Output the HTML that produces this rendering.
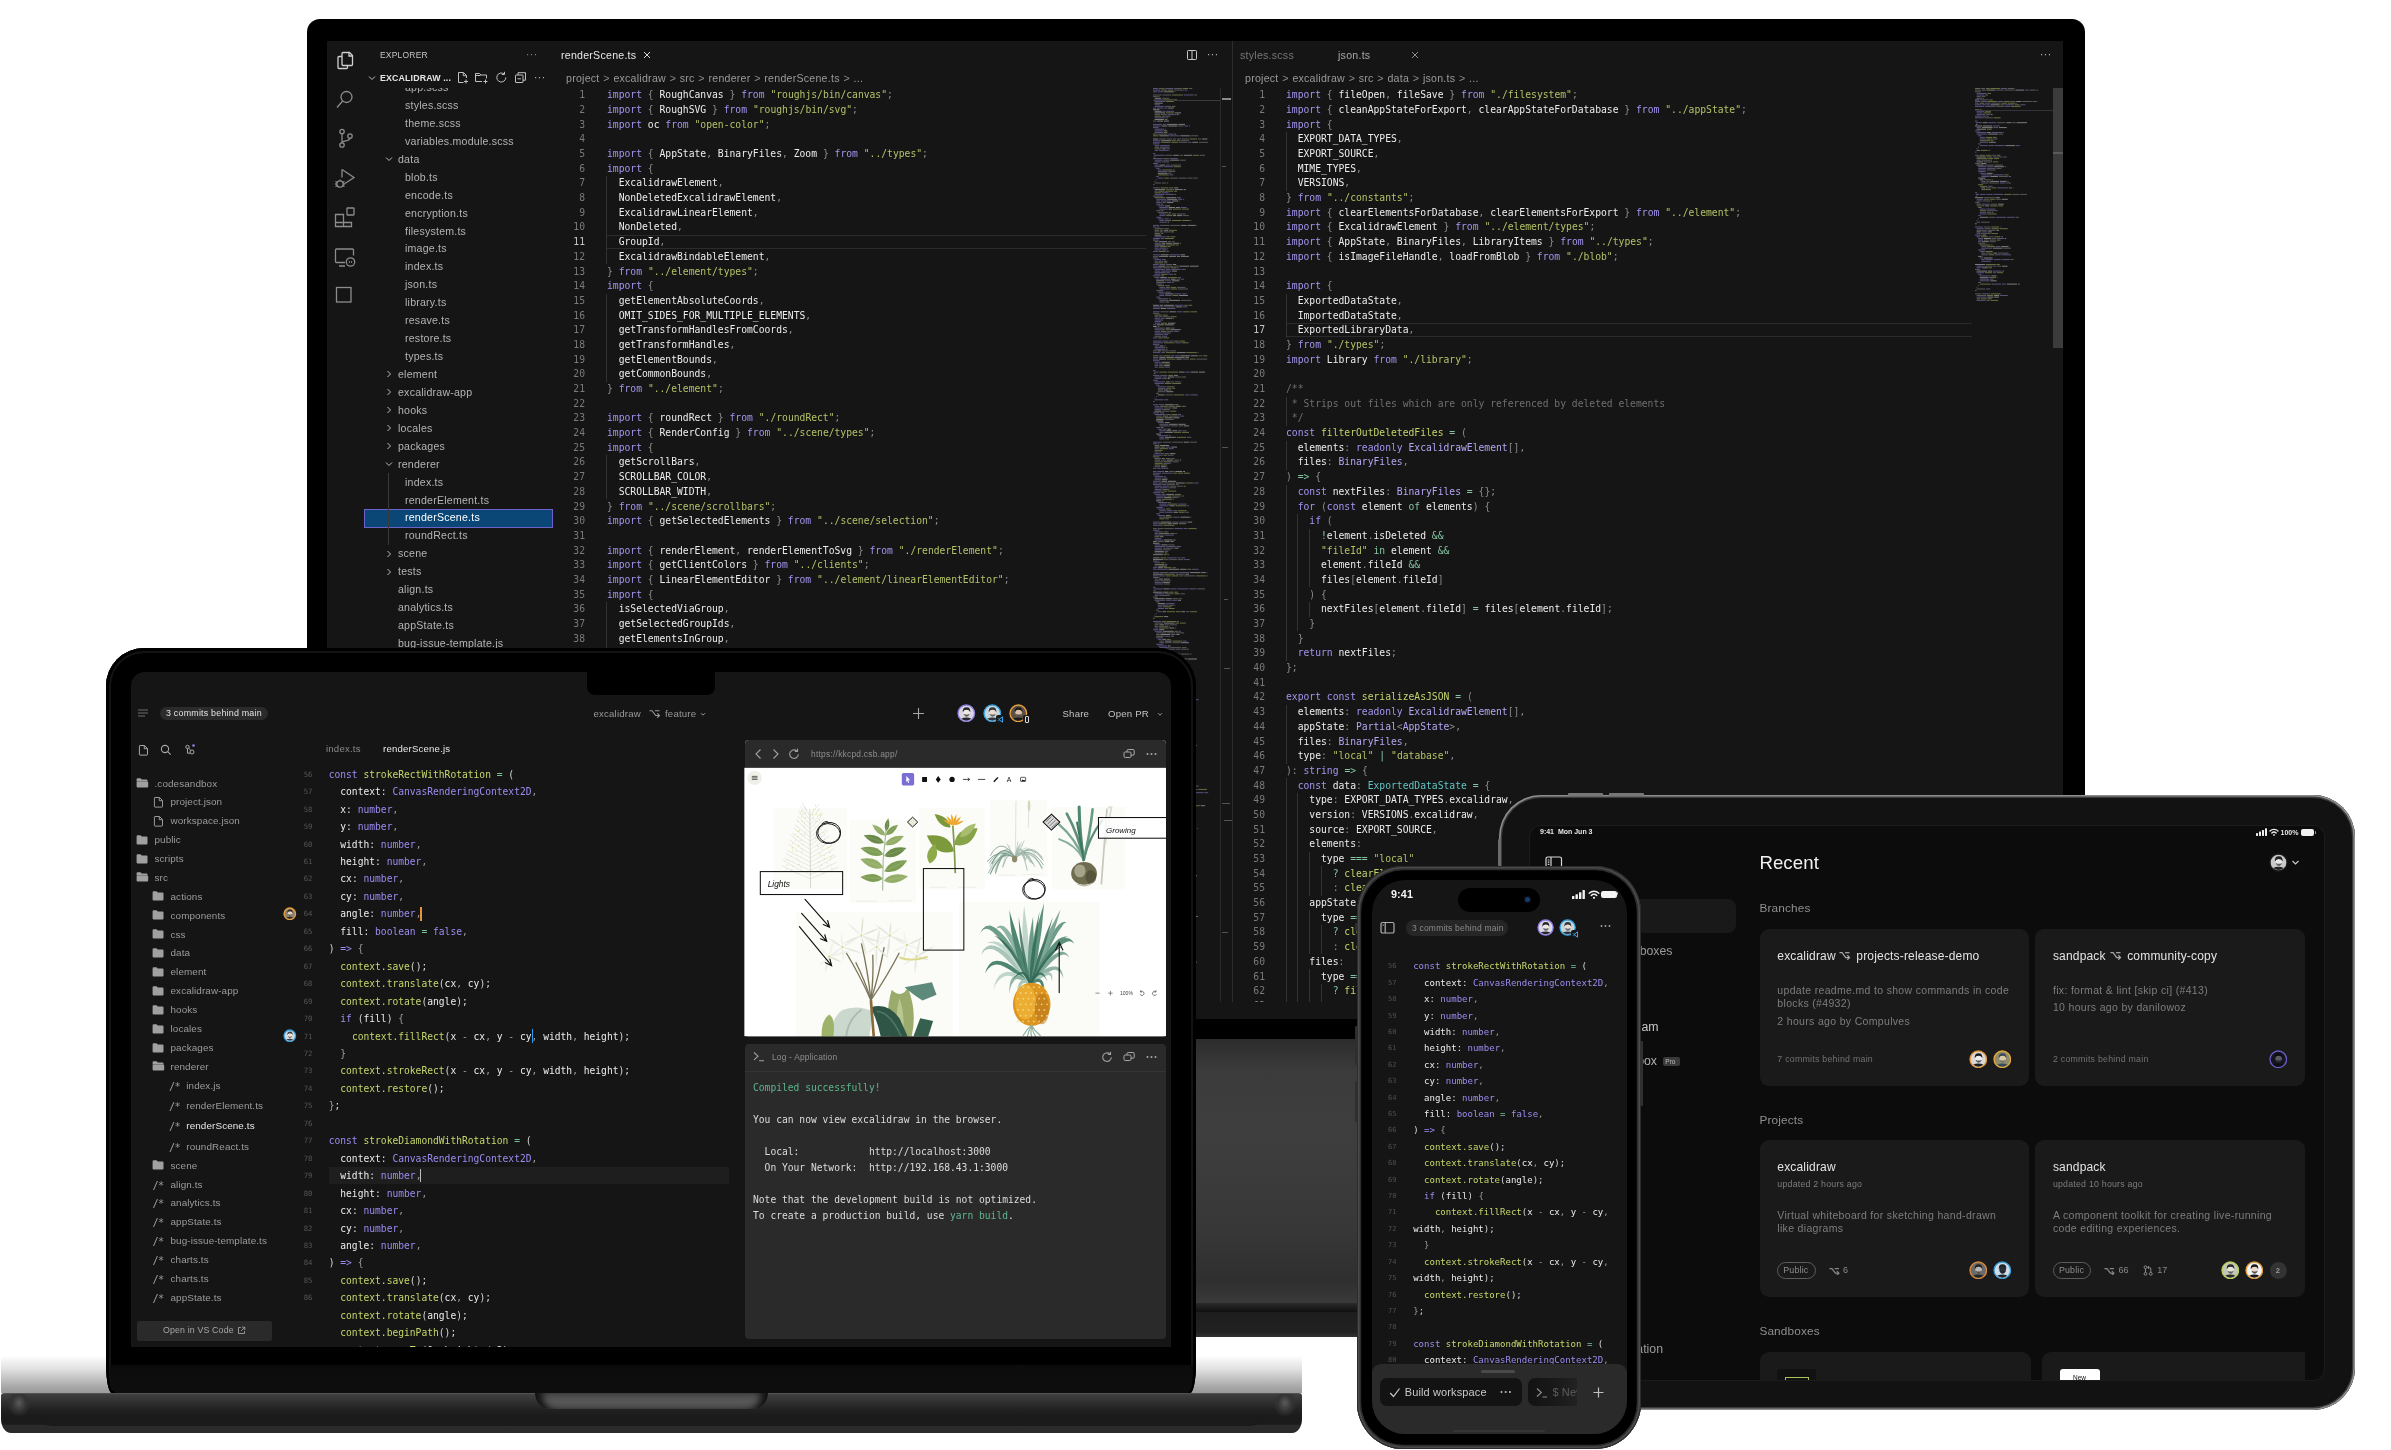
<!DOCTYPE html>
<html lang="en"><head><meta charset="utf-8"><title>CodeSandbox devices</title><style>
html,body{margin:0;padding:0;background:#fff;}
body{width:2391px;height:1450px;overflow:hidden;position:relative;font-family:"Liberation Sans",sans-serif;}
div,svg,pre{position:absolute;box-sizing:border-box;margin:0;}
.t{white-space:pre;font-family:"Liberation Sans",sans-serif;}
.m{font-family:"DejaVu Sans Mono","Liberation Mono",monospace;white-space:pre;}
pre{font-family:"DejaVu Sans Mono","Liberation Mono",monospace;}
i{font-style:normal;}
/* vscode theme */
#mscr .k{color:#a594ee;} #mscr .s{color:#b3c267;} #mscr .p{color:#8b8b8b;} #mscr .o{color:#86c5a4;}
#mscr .tp{color:#b6a6f3;} #mscr .f{color:#c3d46c;} #mscr .c{color:#6f6f6f;} #mscr .y{color:#5fc4c4;}
/* codesandbox theme */
.csb .k{color:#9d8cf0;} .csb .f{color:#c5d86a;} .csb .p{color:#9a9a9a;} .csb .o{color:#78c29a;} .csb .y{color:#9d8cf0;} .csb .s{color:#c5d86a;} .csb .q{color:#d8d8d8;}
</style></head><body><div id="stage" style="left:0;top:0;width:2391px;height:1450px;will-change:transform"><div style="left:307px;top:19px;width:1778px;height:1020px;background:#000;border-radius:13px 13px 0 0;"></div><div style="left:1000px;top:1039px;width:400px;height:264px;background:linear-gradient(180deg,#2c2c2c 0%,#3b3b3b 12%,#3e3e3e 35%,#383838 70%,#2f2f2f 92%,#3a3a3a 100%);"></div><div style="left:1000px;top:1303px;width:400px;height:9px;background:linear-gradient(180deg,#2a2a2a,#101010);"></div><div style="left:1000px;top:1312px;width:400px;height:25px;background:linear-gradient(180deg,#1d1d1d,#222 80%,#333 100%);"></div><div id="mscr" style="left:327px;top:41px;width:1736px;height:978px;background:#151515;overflow:hidden;border-radius:1px"><svg style="left:7px;top:8px;" width="22" height="22" viewBox="0 0 22 22"><g fill="none" stroke="#d0d0d0" stroke-width="1.3"><path d="M9 3.5h6.5l3 3V15.5a1 1 0 0 1-1 1H9a1 1 0 0 1-1-1V4.5a1 1 0 0 1 1-1z"/><path d="M15 3.8v3.2h3.3"/><path d="M8 7.5H5a1 1 0 0 0-1 1v10a1 1 0 0 0 1 1h7.5a1 1 0 0 0 1-1v-2"/></g></svg><svg style="left:7px;top:47px;" width="22" height="22" viewBox="0 0 22 22"><g fill="none" stroke="#8c8c8c" stroke-width="1.3"><circle cx="12.5" cy="9" r="5.5"/><path d="M8.5 13.2L3 19.5"/></g></svg><svg style="left:7px;top:86px;" width="22" height="22" viewBox="0 0 22 22"><g fill="none" stroke="#8c8c8c" stroke-width="1.3"><circle cx="8" cy="4.5" r="2.2"/><circle cx="8" cy="18" r="2.2"/><circle cx="16" cy="9" r="2.2"/><path d="M8 6.7v9.1M16 11.2c0 3-8 2.5-8 4.6"/></g></svg><svg style="left:6px;top:125px;" width="24" height="24" viewBox="0 0 24 24"><g fill="none" stroke="#8c8c8c" stroke-width="1.3"><path d="M9 3.5l12 8-9 6"/><path d="M9 3.5v8"/><circle cx="7" cy="18" r="3.2"/><path d="M2.5 15.5l2 1M2.5 20.5l2-1M11.5 15.5l-2 1M11.5 20.5l-2-1M2 18h2M10 18h2M7 13.5v1.3"/></g></svg><svg style="left:6px;top:164px;" width="24" height="24" viewBox="0 0 24 24"><g fill="none" stroke="#8c8c8c" stroke-width="1.3"><path d="M2.5 9.5h8v8h-8zM10.5 17.5h8v4h-16v-4M10.5 9.5v12M2.5 13.5v8"/><rect x="14" y="3" width="7" height="7" rx=".5"/></g></svg><svg style="left:6px;top:204px;" width="24" height="24" viewBox="0 0 24 24"><g fill="none" stroke="#8c8c8c" stroke-width="1.3"><path d="M12 17.5H3.500a1 1 0 0 1-1-1V5a1 1 0 0 1 1-1h16a1 1 0 0 1 1 1v5.500M6 21h6"/><circle cx="17.5" cy="17" r="4.2"/><path d="M15.800 16l1.200 1-1.200 1M19.200 16l-1.200 1 1.200 1" stroke-width=".9"/></g></svg><svg style="left:7px;top:244px;" width="20" height="20" viewBox="0 0 20 20"><rect x="2.5" y="2.500" width="14.500" height="14.500" fill="none" stroke="#8c8c8c" stroke-width="1.3"/></svg><div class="t" style="top:9.18px;font-size:8.5px;line-height:11.05px;color:#c4c4c4;left:53px;letter-spacing:0.2px;">EXPLORER</div><div class="t" style="top:7.0px;font-size:10px;line-height:13.0px;color:#8c8c8c;left:199px;letter-spacing:0.5px;">···</div><svg style="left:41px;top:33px;" width="8" height="8" viewBox="0 0 8 8"><path d="M1 2.5 L4 5.5 L7 2.5" fill="none" stroke="#bdbdbd" stroke-width="1"/></svg><div class="t" style="top:31.78px;font-size:8.8px;line-height:11.44px;color:#e6e6e6;left:53px;font-weight:700;letter-spacing:0.15px;">EXCALIDRAW ...</div><svg style="left:129px;top:30px;" width="13" height="13" viewBox="0 0 13 13"><g fill="none" stroke="#c0c0c0" stroke-width="1"><path d="M7.500 11.500H2.500V1.500h5l3 3v2.500M7.300 1.700v3h3M10 8.500v4M8 10.500h4"/></g></svg><svg style="left:147px;top:30px;" width="15" height="13" viewBox="0 0 15 13"><g fill="none" stroke="#c0c0c0" stroke-width="1"><path d="M8 10.500H1.500V2.500h4l1.500 1.500h5.500v3.500M1.500 4.500h5M11.500 8.500v4M9.500 10.500h4"/></g></svg><svg style="left:168px;top:30px;" width="13" height="13" viewBox="0 0 13 13"><g fill="none" stroke="#c0c0c0" stroke-width="1"><path d="M10.800 6.500a4.500 4.500 0 1 1-1.800-3.600"/><path d="M9.500 .8v2.700H6.800"/></g></svg><svg style="left:187px;top:30px;" width="13" height="13" viewBox="0 0 13 13"><g fill="none" stroke="#c0c0c0" stroke-width="1"><rect x="1.500" y="4" width="7.500" height="7.500" rx=".5"/><path d="M4 4V1.700h7.500v7.500H9M3.500 7.800h3.500"/></g></svg><div class="t" style="top:30.0px;font-size:10px;line-height:13.0px;color:#bdbdbd;left:207px;letter-spacing:0.5px;">···</div><div style="left:0;top:47px;width:230px;height:940px;overflow:hidden"><div style="left:0;top:-47px;width:230px;height:1000px"><div class="t" style="top:40.11px;font-size:10.6px;line-height:13.78px;color:#b4b4b4;left:78px;letter-spacing:0.22px;">app.scss</div><div class="t" style="top:58.04px;font-size:10.6px;line-height:13.78px;color:#b4b4b4;left:78px;letter-spacing:0.22px;">styles.scss</div><div class="t" style="top:75.97px;font-size:10.6px;line-height:13.78px;color:#b4b4b4;left:78px;letter-spacing:0.22px;">theme.scss</div><div class="t" style="top:93.9px;font-size:10.6px;line-height:13.78px;color:#b4b4b4;left:78px;letter-spacing:0.22px;">variables.module.scss</div><div class="t" style="top:111.83px;font-size:10.6px;line-height:13.78px;color:#b4b4b4;left:71px;letter-spacing:0.22px;">data</div><svg style="left:58px;top:114.22px;" width="8" height="8" viewBox="0 0 8 8"><path d="M1 2.5 L4 5.5 L7 2.5" fill="none" stroke="#bdbdbd" stroke-width="1"/></svg><div class="t" style="top:129.76px;font-size:10.6px;line-height:13.78px;color:#b4b4b4;left:78px;letter-spacing:0.22px;">blob.ts</div><div class="t" style="top:147.69px;font-size:10.6px;line-height:13.78px;color:#b4b4b4;left:78px;letter-spacing:0.22px;">encode.ts</div><div class="t" style="top:165.62px;font-size:10.6px;line-height:13.78px;color:#b4b4b4;left:78px;letter-spacing:0.22px;">encryption.ts</div><div class="t" style="top:183.55px;font-size:10.6px;line-height:13.78px;color:#b4b4b4;left:78px;letter-spacing:0.22px;">filesystem.ts</div><div class="t" style="top:201.48px;font-size:10.6px;line-height:13.78px;color:#b4b4b4;left:78px;letter-spacing:0.22px;">image.ts</div><div class="t" style="top:219.41px;font-size:10.6px;line-height:13.78px;color:#b4b4b4;left:78px;letter-spacing:0.22px;">index.ts</div><div class="t" style="top:237.34px;font-size:10.6px;line-height:13.78px;color:#b4b4b4;left:78px;letter-spacing:0.22px;">json.ts</div><div class="t" style="top:255.27px;font-size:10.6px;line-height:13.78px;color:#b4b4b4;left:78px;letter-spacing:0.22px;">library.ts</div><div class="t" style="top:273.2px;font-size:10.6px;line-height:13.78px;color:#b4b4b4;left:78px;letter-spacing:0.22px;">resave.ts</div><div class="t" style="top:291.13px;font-size:10.6px;line-height:13.78px;color:#b4b4b4;left:78px;letter-spacing:0.22px;">restore.ts</div><div class="t" style="top:309.06px;font-size:10.6px;line-height:13.78px;color:#b4b4b4;left:78px;letter-spacing:0.22px;">types.ts</div><div class="t" style="top:326.99px;font-size:10.6px;line-height:13.78px;color:#b4b4b4;left:71px;letter-spacing:0.22px;">element</div><svg style="left:58px;top:329.38px;" width="8" height="8" viewBox="0 0 8 8"><path d="M2.5 1 L5.5 4 L2.5 7" fill="none" stroke="#bdbdbd" stroke-width="1"/></svg><div class="t" style="top:344.92px;font-size:10.6px;line-height:13.78px;color:#b4b4b4;left:71px;letter-spacing:0.22px;">excalidraw-app</div><svg style="left:58px;top:347.31px;" width="8" height="8" viewBox="0 0 8 8"><path d="M2.5 1 L5.5 4 L2.5 7" fill="none" stroke="#bdbdbd" stroke-width="1"/></svg><div class="t" style="top:362.85px;font-size:10.6px;line-height:13.78px;color:#b4b4b4;left:71px;letter-spacing:0.22px;">hooks</div><svg style="left:58px;top:365.24px;" width="8" height="8" viewBox="0 0 8 8"><path d="M2.5 1 L5.5 4 L2.5 7" fill="none" stroke="#bdbdbd" stroke-width="1"/></svg><div class="t" style="top:380.78px;font-size:10.6px;line-height:13.78px;color:#b4b4b4;left:71px;letter-spacing:0.22px;">locales</div><svg style="left:58px;top:383.17px;" width="8" height="8" viewBox="0 0 8 8"><path d="M2.5 1 L5.5 4 L2.5 7" fill="none" stroke="#bdbdbd" stroke-width="1"/></svg><div class="t" style="top:398.71px;font-size:10.6px;line-height:13.78px;color:#b4b4b4;left:71px;letter-spacing:0.22px;">packages</div><svg style="left:58px;top:401.1px;" width="8" height="8" viewBox="0 0 8 8"><path d="M2.5 1 L5.5 4 L2.5 7" fill="none" stroke="#bdbdbd" stroke-width="1"/></svg><div class="t" style="top:416.64px;font-size:10.6px;line-height:13.78px;color:#b4b4b4;left:71px;letter-spacing:0.22px;">renderer</div><svg style="left:58px;top:419.03px;" width="8" height="8" viewBox="0 0 8 8"><path d="M1 2.5 L4 5.5 L7 2.5" fill="none" stroke="#bdbdbd" stroke-width="1"/></svg><div class="t" style="top:434.57px;font-size:10.6px;line-height:13.78px;color:#b4b4b4;left:78px;letter-spacing:0.22px;">index.ts</div><div class="t" style="top:452.5px;font-size:10.6px;line-height:13.78px;color:#b4b4b4;left:78px;letter-spacing:0.22px;">renderElement.ts</div><div style="left:37px;top:468.0199999999999px;width:187px;height:16.6px;background:#0a4676;border:1px solid #6c62c9;box-sizing:content-box;"></div><div class="t" style="top:470.43px;font-size:10.6px;line-height:13.78px;color:#ffffff;left:78px;letter-spacing:0.22px;">renderScene.ts</div><div class="t" style="top:488.36px;font-size:10.6px;line-height:13.78px;color:#b4b4b4;left:78px;letter-spacing:0.22px;">roundRect.ts</div><div class="t" style="top:506.29px;font-size:10.6px;line-height:13.78px;color:#b4b4b4;left:71px;letter-spacing:0.22px;">scene</div><svg style="left:58px;top:508.68000000000006px;" width="8" height="8" viewBox="0 0 8 8"><path d="M2.5 1 L5.5 4 L2.5 7" fill="none" stroke="#bdbdbd" stroke-width="1"/></svg><div class="t" style="top:524.22px;font-size:10.6px;line-height:13.78px;color:#b4b4b4;left:71px;letter-spacing:0.22px;">tests</div><svg style="left:58px;top:526.61px;" width="8" height="8" viewBox="0 0 8 8"><path d="M2.5 1 L5.5 4 L2.5 7" fill="none" stroke="#bdbdbd" stroke-width="1"/></svg><div class="t" style="top:542.15px;font-size:10.6px;line-height:13.78px;color:#b4b4b4;left:71px;letter-spacing:0.22px;">align.ts</div><div class="t" style="top:560.08px;font-size:10.6px;line-height:13.78px;color:#b4b4b4;left:71px;letter-spacing:0.22px;">analytics.ts</div><div class="t" style="top:578.01px;font-size:10.6px;line-height:13.78px;color:#b4b4b4;left:71px;letter-spacing:0.22px;">appState.ts</div><div class="t" style="top:595.94px;font-size:10.6px;line-height:13.78px;color:#b4b4b4;left:71px;letter-spacing:0.22px;">bug-issue-template.js</div><div class="t" style="top:613.87px;font-size:10.6px;line-height:13.78px;color:#b4b4b4;left:71px;letter-spacing:0.22px;">charts.ts</div></div></div><div style="left:60.5px;top:432px;width:1px;height:72px;background:#3a3a3a;"></div><div class="t" style="top:8.11px;font-size:10.6px;line-height:13.78px;color:#e8e8e8;left:234px;letter-spacing:0.25px;">renderScene.ts</div><svg style="left:315px;top:9px;" width="10" height="10" viewBox="0 0 10 10"><path d="M2 2l6 6M8 2l-6 6" stroke="#d8d8d8" stroke-width="1" fill="none"/></svg><svg style="left:859px;top:8px;" width="12" height="12" viewBox="0 0 12 12"><g fill="none" stroke="#c8c8c8" stroke-width="1"><rect x="1.500" y="1.500" width="9" height="9" rx=".8"/><path d="M6 1.500v9"/></g></svg><div class="t" style="top:7.0px;font-size:10px;line-height:13.0px;color:#c0c0c0;left:880px;letter-spacing:0.5px;">···</div><div class="t" style="left:239px;top:30px;font-size:10.6px;line-height:14px;color:#9a9a9a;letter-spacing:0.25px;word-spacing:0.5px">project <span style="color:#8a8a8a">&gt;</span> excalidraw <span style="color:#8a8a8a">&gt;</span> src <span style="color:#8a8a8a">&gt;</span> renderer <span style="color:#8a8a8a">&gt;</span> renderScene.ts <span style="color:#8a8a8a">&gt;</span> ...</div><div style="left:280px;top:194.06px;width:539px;height:13.68px;border-top:1px solid #2b2b2b;border-bottom:1px solid #2b2b2b;"></div><div style="left:278.79999999999995px;top:135.34px;width:1px;height:88.08px;background:#333;"></div><div style="left:278.79999999999995px;top:252.78000000000003px;width:1px;height:88.08px;background:#333;"></div><div style="left:278.79999999999995px;top:414.26000000000005px;width:1px;height:44.04px;background:#333;"></div><div style="left:278.79999999999995px;top:561.06px;width:1px;height:58.72px;background:#333;"></div><pre class="m" style="left:218px;top:47.25999999999999px;width:40px;text-align:right;font-size:9.7px;line-height:14.68px;color:#7a7a7a"><span style="color:#7a7a7a">1</span>
<span style="color:#7a7a7a">2</span>
<span style="color:#7a7a7a">3</span>
<span style="color:#7a7a7a">4</span>
<span style="color:#7a7a7a">5</span>
<span style="color:#7a7a7a">6</span>
<span style="color:#7a7a7a">7</span>
<span style="color:#7a7a7a">8</span>
<span style="color:#7a7a7a">9</span>
<span style="color:#7a7a7a">10</span>
<span style="color:#c6c6c6">11</span>
<span style="color:#7a7a7a">12</span>
<span style="color:#7a7a7a">13</span>
<span style="color:#7a7a7a">14</span>
<span style="color:#7a7a7a">15</span>
<span style="color:#7a7a7a">16</span>
<span style="color:#7a7a7a">17</span>
<span style="color:#7a7a7a">18</span>
<span style="color:#7a7a7a">19</span>
<span style="color:#7a7a7a">20</span>
<span style="color:#7a7a7a">21</span>
<span style="color:#7a7a7a">22</span>
<span style="color:#7a7a7a">23</span>
<span style="color:#7a7a7a">24</span>
<span style="color:#7a7a7a">25</span>
<span style="color:#7a7a7a">26</span>
<span style="color:#7a7a7a">27</span>
<span style="color:#7a7a7a">28</span>
<span style="color:#7a7a7a">29</span>
<span style="color:#7a7a7a">30</span>
<span style="color:#7a7a7a">31</span>
<span style="color:#7a7a7a">32</span>
<span style="color:#7a7a7a">33</span>
<span style="color:#7a7a7a">34</span>
<span style="color:#7a7a7a">35</span>
<span style="color:#7a7a7a">36</span>
<span style="color:#7a7a7a">37</span>
<span style="color:#7a7a7a">38</span>
<span style="color:#7a7a7a">39</span></pre><pre class="m mc" style="left:280px;top:47.25999999999999px;font-size:9.7px;line-height:14.68px;color:#ededed"><i class="k">import</i> <i class="p">{</i> RoughCanvas <i class="p">}</i> <i class="k">from</i> <i class="s">"roughjs/bin/canvas"</i><i class="p">;</i>
<i class="k">import</i> <i class="p">{</i> RoughSVG <i class="p">}</i> <i class="k">from</i> <i class="s">"roughjs/bin/svg"</i><i class="p">;</i>
<i class="k">import</i> oc <i class="k">from</i> <i class="s">"open-color"</i><i class="p">;</i>

<i class="k">import</i> <i class="p">{</i> AppState<i class="p">,</i> BinaryFiles<i class="p">,</i> Zoom <i class="p">}</i> <i class="k">from</i> <i class="s">"../types"</i><i class="p">;</i>
<i class="k">import</i> <i class="p">{</i>
  ExcalidrawElement<i class="p">,</i>
  NonDeletedExcalidrawElement<i class="p">,</i>
  ExcalidrawLinearElement<i class="p">,</i>
  NonDeleted<i class="p">,</i>
  GroupId<i class="p">,</i>
  ExcalidrawBindableElement<i class="p">,</i>
<i class="p">}</i> <i class="k">from</i> <i class="s">"../element/types"</i><i class="p">;</i>
<i class="k">import</i> <i class="p">{</i>
  getElementAbsoluteCoords<i class="p">,</i>
  OMIT_SIDES_FOR_MULTIPLE_ELEMENTS<i class="p">,</i>
  getTransformHandlesFromCoords<i class="p">,</i>
  getTransformHandles<i class="p">,</i>
  getElementBounds<i class="p">,</i>
  getCommonBounds<i class="p">,</i>
<i class="p">}</i> <i class="k">from</i> <i class="s">"../element"</i><i class="p">;</i>

<i class="k">import</i> <i class="p">{</i> roundRect <i class="p">}</i> <i class="k">from</i> <i class="s">"./roundRect"</i><i class="p">;</i>
<i class="k">import</i> <i class="p">{</i> RenderConfig <i class="p">}</i> <i class="k">from</i> <i class="s">"../scene/types"</i><i class="p">;</i>
<i class="k">import</i> <i class="p">{</i>
  getScrollBars<i class="p">,</i>
  SCROLLBAR_COLOR<i class="p">,</i>
  SCROLLBAR_WIDTH<i class="p">,</i>
<i class="p">}</i> <i class="k">from</i> <i class="s">"../scene/scrollbars"</i><i class="p">;</i>
<i class="k">import</i> <i class="p">{</i> getSelectedElements <i class="p">}</i> <i class="k">from</i> <i class="s">"../scene/selection"</i><i class="p">;</i>

<i class="k">import</i> <i class="p">{</i> renderElement<i class="p">,</i> renderElementToSvg <i class="p">}</i> <i class="k">from</i> <i class="s">"./renderElement"</i><i class="p">;</i>
<i class="k">import</i> <i class="p">{</i> getClientColors <i class="p">}</i> <i class="k">from</i> <i class="s">"../clients"</i><i class="p">;</i>
<i class="k">import</i> <i class="p">{</i> LinearElementEditor <i class="p">}</i> <i class="k">from</i> <i class="s">"../element/linearElementEditor"</i><i class="p">;</i>
<i class="k">import</i> <i class="p">{</i>
  isSelectedViaGroup<i class="p">,</i>
  getSelectedGroupIds<i class="p">,</i>
  getElementsInGroup<i class="p">,</i>
  getElementsInGroup<i class="p">,</i></pre><svg style="left:826px;top:47px;" width="68" height="934" viewBox="0 0 68 934"><path d="M0.0 0.5h4.9M12.5 0.5h8.0M0.0 2.1h7.3M31.5 2.1h2.9M0.0 3.8h4.3M5.1 3.8h5.4M30.7 7.0h10.0M1.6 11.9h7.7M1.6 13.5h10.7M1.6 16.8h5.3M1.6 18.4h9.8M12.2 18.4h5.8M0.0 20.1h3.2M4.0 20.1h6.3M11.1 20.1h3.4M9.4 23.3h3.1M13.3 23.3h7.8M14.7 26.6h8.2M1.6 29.8h10.8M13.2 29.8h2.0M0.0 36.4h8.9M9.7 36.4h3.5M0.0 38.0h7.7M31.3 38.0h3.8M0.0 39.6h5.5M1.6 41.2h9.4M1.6 42.9h8.2M1.6 44.5h8.4M15.3 46.1h5.2M17.0 47.8h9.5M23.9 51.0h4.2M0.0 52.7h7.4M0.0 54.3h7.6M35.1 54.3h3.4M0.0 55.9h6.4M1.6 57.6h4.8M7.2 57.6h9.6M6.8 59.2h9.6M1.6 62.4h3.4M5.8 62.4h9.6M16.2 62.4h0.6M0.0 65.7h2.4M0.8 67.3h10.8M0.0 70.6h9.4M16.9 70.6h7.9M1.6 72.2h8.0M1.6 73.9h6.7M9.1 73.9h7.3M0.0 75.5h4.8M1.6 77.1h4.0M12.8 77.1h4.0M1.6 78.7h8.3M10.7 78.7h9.5M3.2 80.4h3.2M4.8 82.0h3.7M4.8 83.6h9.7M15.3 85.3h3.1M16.6 86.9h3.9M3.2 88.5h2.4M4.8 90.1h5.6M3.2 91.8h0.8M0.0 96.7h1.6M1.6 103.2h3.2M8.7 104.8h6.7M16.3 104.8h0.5M1.6 106.4h9.9M12.3 106.4h8.9M0.0 108.1h10.1M24.0 109.7h4.0M3.2 111.3h10.2M24.9 111.3h4.5M30.2 111.3h1.0M3.2 113.0h3.9M7.9 113.0h10.3M3.2 114.6h5.7M3.2 116.2h4.0M8.0 116.2h2.4M4.8 117.9h6.5M6.4 119.5h8.4M27.7 119.5h5.9M6.4 121.1h8.3M6.4 126.0h6.7M13.9 126.0h4.4M6.4 127.6h5.9M3.2 129.3h4.8M4.8 130.9h5.8M11.4 130.9h4.2M16.4 130.9h1.2M6.4 132.5h4.5M6.4 134.2h7.4M0.0 137.4h6.0M0.0 139.0h3.2M4.0 139.0h2.4M1.6 143.9h4.1M8.0 145.6h2.4M1.6 148.8h11.0M0.0 150.5h6.9M7.7 150.5h3.3M0.0 152.1h6.1M1.6 155.3h6.5M1.6 158.6h4.3M1.6 160.2h3.9M6.3 160.2h6.9M1.6 161.9h6.6M9.0 161.9h5.4M0.0 163.5h4.9M0.0 166.8h6.8M16.4 166.8h10.3M0.0 170.0h5.5M1.6 171.6h6.5M8.9 171.6h3.9M1.6 173.3h3.2M5.6 173.3h4.4M0.0 176.5h5.7M6.5 176.5h5.8M0.0 178.2h4.5M0.0 179.8h9.4M1.6 181.4h10.6M13.0 181.4h4.4M18.2 181.4h9.6M28.6 181.4h4.2M1.6 183.1h5.6M8.0 183.1h10.0M1.6 184.7h11.0M13.4 184.7h3.4M1.6 186.3h5.7M15.5 186.3h4.9M0.0 187.9h7.7M25.1 189.6h2.9M3.2 191.2h3.3M7.3 191.2h9.9M27.9 191.2h3.3M13.7 194.5h4.6M19.1 194.5h1.7M3.2 196.1h5.7M12.0 197.7h5.0M6.4 199.4h5.7M6.4 201.0h10.5M4.8 204.2h6.8M12.4 204.2h5.2M6.4 205.9h4.5M21.3 205.9h7.0M29.1 205.9h4.5M6.4 207.5h4.6M11.8 207.5h6.9M3.2 209.1h4.1M4.8 210.8h10.3M6.4 214.0h5.5M21.6 217.3h9.0M0.0 218.9h10.6M29.7 218.9h4.7M0.0 220.5h6.9M13.7 220.5h8.7M0.0 223.8h6.6M23.7 223.8h5.7M1.6 228.7h3.4M1.6 230.3h5.3M7.7 230.3h4.1M1.6 232.0h8.8M1.6 233.6h6.4M1.6 235.2h5.5M0.0 236.8h3.2M1.6 241.7h10.5M1.6 243.4h5.5M21.1 243.4h4.5M1.6 245.0h7.0M9.4 245.0h8.2M1.6 246.6h8.9M11.3 246.6h3.9M8.9 248.3h5.1M0.0 249.9h4.4M0.0 253.1h8.5M9.3 253.1h6.2M16.3 253.1h4.1M0.0 254.8h10.0M22.3 254.8h6.1M0.0 256.4h6.4M1.6 258.0h4.1M11.3 258.0h1.5M1.6 259.7h10.5M1.6 261.3h10.8M0.0 264.6h7.3M6.3 267.8h3.4M17.6 267.8h3.9M22.4 267.8h4.3M0.0 269.4h5.6M0.0 271.1h5.2M0.0 272.7h6.4M1.6 274.3h6.3M5.9 276.0h4.7M1.6 277.6h3.4M1.6 279.2h3.1M12.3 279.2h4.5M0.0 282.5h2.4M0.8 284.1h4.8M32.3 284.1h4.6M0.0 287.4h6.5M1.6 289.0h7.4M9.8 289.0h4.4M1.6 290.6h6.8M0.0 292.3h4.8M1.6 293.9h10.8M17.5 293.9h3.5M28.3 293.9h0.5M1.6 295.5h9.6M3.2 297.2h3.2M4.8 298.8h8.1M4.8 300.4h7.6M4.8 303.7h7.7M31.8 306.9h4.5M37.1 306.9h7.7M3.2 308.6h0.8M1.6 310.2h0.8M1.6 311.8h9.0M11.4 311.8h3.8M0.0 313.5h1.6M0.0 316.7h4.8M5.6 316.7h5.8M1.6 318.3h4.8M1.6 320.0h8.5M1.6 321.6h6.5M0.0 324.9h6.1M1.6 326.5h11.0M25.1 326.5h2.9M3.2 328.1h5.8M26.7 328.1h4.5M4.8 334.6h6.4M6.4 337.9h10.3M3.2 339.5h3.9M4.8 341.2h4.3M9.9 341.2h3.8M6.4 342.8h6.2M25.0 342.8h3.9M6.4 344.4h4.2M4.8 347.7h10.2M15.8 347.7h1.8M6.4 349.3h4.8M6.4 350.9h5.2M0.0 354.2h9.0M0.0 355.8h4.2M5.0 355.8h1.4M12.9 359.1h4.7M1.6 360.7h4.2M15.7 360.7h5.1M1.6 365.6h5.1M11.9 365.6h4.4M0.0 367.2h9.7M1.6 370.5h6.5M7.9 372.1h5.3M10.5 375.4h7.1M1.6 378.7h5.5M4.3 380.3h3.2M8.3 380.3h6.8M0.0 383.5h3.5M4.3 383.5h6.8M0.0 385.2h8.0M8.8 385.2h10.7M0.0 386.8h6.4M1.6 388.4h8.4M10.8 388.4h2.0M1.6 390.1h7.0M9.4 390.1h5.0M0.0 393.3h7.8M0.0 395.0h4.6M41.2 395.0h4.4M0.0 396.6h7.9M8.7 396.6h4.5M1.6 398.2h7.5M9.9 398.2h6.4M1.6 399.8h4.1M6.5 399.8h8.1M1.6 401.5h6.8M1.6 403.1h7.9M0.0 404.7h7.5M1.6 406.4h6.2M8.6 406.4h3.9M3.2 408.0h10.3M3.2 409.6h7.1M25.6 409.6h0.8M3.2 411.3h5.3M4.8 414.5h9.7M15.3 414.5h2.3M6.4 416.1h7.1M24.8 416.1h8.8M6.4 417.8h9.3M34.2 417.8h1.8M3.2 419.4h6.6M4.8 421.0h7.3M6.4 422.7h6.6M13.8 422.7h5.8M6.4 424.3h5.0M12.2 424.3h7.6M32.3 424.3h3.7M3.2 425.9h3.9M4.8 427.6h7.3M6.4 429.2h3.2M19.8 429.2h6.9M0.0 434.1h6.8M26.5 434.1h7.3M0.0 435.7h4.5M0.0 437.3h9.8M21.4 440.6h8.4M30.6 440.6h3.9M0.0 442.2h6.4M1.6 443.9h8.3M1.6 445.5h3.3M1.6 447.1h9.1M11.5 447.1h9.3M1.6 450.4h6.4M1.6 452.0h8.4M1.6 456.9h6.0M1.6 458.5h10.7M13.1 458.5h9.6M23.5 458.5h4.5M1.6 460.2h7.8M1.6 461.8h7.9M11.6 463.4h3.6M14.2 469.9h9.5M28.3 469.9h3.7M31.1 471.6h5.7M0.0 473.2h4.6M5.4 473.2h1.0M1.6 474.8h5.8M12.2 476.5h2.2M1.6 478.1h3.1M0.0 479.7h4.1M0.0 481.3h3.5M4.3 481.3h10.5M39.1 481.3h6.5M0.0 484.6h6.3M16.4 484.6h9.1M26.3 484.6h9.8M53.5 484.6h0.9M0.0 487.9h5.3M6.1 487.9h5.9M1.6 491.1h3.7M1.6 494.4h7.1M1.6 496.0h8.8M0.0 499.3h2.4M0.8 500.9h8.8M17.1 500.9h6.6M24.5 500.9h10.9M36.2 500.9h7.1M0.8 502.5h1.6M1.6 505.8h9.4M1.6 507.4h3.7M1.6 512.3h10.8M13.2 512.3h5.0M19.0 512.3h5.1M13.2 515.6h8.4M4.8 517.2h10.9M21.5 517.2h0.9M4.8 518.8h4.6M4.8 520.5h6.2M11.8 520.5h3.2M4.8 523.7h3.9M3.2 525.4h0.8M1.6 527.0h0.8M0.0 533.5h8.0M1.6 538.4h3.2M1.6 540.0h3.7M0.0 541.7h5.3M1.6 543.3h7.7M25.6 543.3h2.4M3.2 546.5h3.4M18.0 546.5h4.6M11.4 548.2h6.1M3.2 549.8h6.9M4.8 551.4h3.7M29.6 553.1h4.0M6.4 554.7h4.9M3.2 556.3h7.2M4.8 558.0h9.3M6.4 559.6h10.0M23.1 561.2h4.3M3.2 562.8h4.7M10.8 566.1h8.8M6.4 567.7h9.3M16.5 571.0h8.2M0.0 572.6h6.4M10.5 574.3h5.5M1.6 575.9h4.6M7.0 575.9h10.0M22.3 575.9h1.7M1.6 577.5h6.8M9.2 577.5h6.0M1.6 579.1h8.3M1.6 580.8h6.4M7.4 584.0h4.8M1.6 588.9h6.5M1.6 590.6h7.0M9.4 590.6h4.5M7.4 592.2h4.4M0.0 597.1h9.3M0.0 600.3h5.7M16.5 600.3h7.5M0.0 602.0h8.6M0.0 603.6h6.4M1.6 605.2h3.9M11.6 605.2h1.2M1.6 606.9h9.7M1.6 608.5h6.0M0.0 610.1h10.9M9.4 611.7h10.2M30.5 611.7h9.8M41.1 611.7h4.5M0.0 613.4h9.8M1.6 615.0h4.7M7.1 615.0h8.9M1.6 616.6h9.8M18.2 616.6h5.8M1.6 618.3h6.2M18.7 619.9h3.1M0.0 621.5h7.9M3.2 624.8h7.1M19.6 624.8h7.8M3.2 626.4h6.7M10.7 626.4h10.7M22.2 626.4h4.2M3.2 628.0h5.0M9.0 628.0h5.5M19.3 628.0h1.5M4.8 631.3h5.4M6.4 632.9h4.2M16.9 632.9h3.5M30.9 634.6h5.1M3.2 636.2h7.2M16.6 639.5h8.6M32.7 641.1h3.3M3.2 642.7h4.8M0.0 650.9h6.0M0.0 654.1h4.3M0.0 659.0h6.4M6.9 660.6h4.0M1.6 662.3h8.9M1.6 663.9h10.2M19.4 663.9h1.4M1.6 665.5h6.9M1.6 668.8h9.6M0.0 672.1h6.4M12.9 673.7h8.7M20.4 675.3h7.6M1.6 676.9h5.5M1.6 678.6h5.4M1.6 680.2h9.5M11.9 680.2h3.3M0.0 683.5h7.2M12.5 683.5h3.5M0.0 686.7h10.7M28.0 688.4h8.8M0.0 690.0h6.4M1.6 691.6h3.9M0.0 698.1h7.4M30.5 698.1h9.5M17.7 701.4h10.6M0.0 703.0h5.5M27.9 703.0h8.1M25.7 704.7h9.5M41.9 704.7h8.6M51.3 704.7h3.9M4.4 706.3h2.0M1.6 707.9h9.3M11.7 707.9h5.1M1.6 709.5h9.7M1.6 711.2h3.6M0.8 717.7h11.0M12.6 717.7h6.2M30.2 717.7h10.6M0.8 719.3h1.6M23.9 721.0h0.9M1.6 722.6h7.8M21.3 722.6h6.1M1.6 724.2h5.1M1.6 727.5h8.8M11.2 727.5h4.8M1.6 729.1h10.4M3.2 730.7h3.2M4.8 732.4h5.4M11.0 732.4h5.9M12.9 735.6h5.5M4.8 740.5h4.3M9.9 740.5h5.9M16.7 740.5h8.0M39.1 740.5h3.8M3.2 742.1h0.8M1.6 743.8h0.8M0.0 750.3h7.8M8.6 750.3h8.3M1.6 751.9h5.5M1.6 755.2h7.1M5.9 760.1h10.8M3.2 765.0h8.1M4.8 768.2h8.2M6.4 769.9h3.3M21.2 769.9h6.1M6.4 771.5h8.9M16.1 771.5h11.0M3.2 773.1h7.2M6.4 776.4h9.4M6.4 782.9h9.6M4.1 787.8h10.1M0.0 789.4h5.1M5.9 789.4h0.5M1.6 791.0h4.8M7.2 791.0h7.1M12.7 792.7h8.5M7.3 794.3h7.5M15.5 794.3h4.3M1.6 795.9h3.0M1.6 799.2h5.3M12.5 799.2h9.9M0.0 800.8h10.6M0.0 802.5h6.4M1.6 804.1h4.2M6.6 804.1h6.6M1.6 805.7h6.5M19.7 805.7h8.3M1.6 807.3h7.9M10.8 810.6h4.4M0.0 813.9h4.9M8.5 817.1h7.5M0.0 820.4h6.4M1.6 822.0h3.1M1.6 823.6h4.3M12.3 823.6h2.1M12.2 825.3h2.2M0.0 826.9h10.1M0.0 828.5h7.1M16.0 830.2h4.7M21.5 830.2h4.1M1.6 831.8h7.3M16.5 831.8h3.3M1.6 835.1h7.8M1.6 836.7h5.7M8.1 836.7h9.5M0.0 838.3h6.4M1.6 839.9h4.2M6.6 839.9h7.5M3.2 841.6h9.2M3.2 843.2h6.6M3.2 844.8h10.1M14.1 844.8h6.6M4.8 848.1h5.0M10.6 848.1h7.0M6.4 849.7h5.8M26.3 849.7h7.3M6.4 851.4h7.3M14.5 851.4h7.6M22.8 851.4h3.4M3.2 853.0h7.2M6.4 856.2h4.2M3.2 859.5h4.8M4.8 861.1h8.3M6.4 862.8h5.4M12.6 862.8h10.7M6.4 864.4h5.3M7.9 867.7h9.7M27.7 869.3h5.7M0.0 870.9h4.5M0.0 874.2h10.3M1.6 877.4h6.4M1.6 879.1h10.8M1.6 880.7h3.5M11.3 880.7h6.4M1.6 884.0h4.0M1.6 885.6h3.7M6.1 885.6h9.5M16.4 885.6h5.5M0.0 887.2h5.6M1.6 890.5h9.3M8.7 892.1h6.0M13.3 893.7h8.6M1.6 897.0h10.9M12.0 898.6h2.4M0.0 900.3h10.7M11.5 900.3h4.5M0.0 903.5h10.1M0.0 905.1h9.6M25.1 905.1h9.6M35.5 905.1h1.3M1.6 908.4h7.5M9.9 908.4h2.9M11.6 910.0h2.8M0.0 913.3h5.7M0.0 914.9h8.3M43.0 914.9h2.6M0.0 918.2h9.4M10.2 918.2h4.1M15.1 918.2h6.7M22.6 918.2h3.0M26.4 918.2h5.6M50.1 918.2h4.3M0.0 919.8h3.3M26.5 919.8h4.4M31.7 919.8h4.3M0.0 921.4h9.8M25.9 921.4h9.7M0.0 923.1h6.4M1.6 924.7h10.5M1.6 926.3h6.8M1.6 928.0h6.0M8.4 928.0h7.3M9.3 929.6h5.0" stroke="#8f84cf" stroke-width="0.9" fill="none" opacity="0.62"/><path d="M29.9 0.5h5.1M8.1 2.1h6.2M15.1 2.1h4.9M19.1 7.0h10.7M10.1 11.9h9.9M13.1 13.5h7.7M18.8 18.4h3.6M13.0 24.9h7.9M1.6 28.2h6.4M11.7 31.5h2.7M36.0 38.0h0.8M10.8 44.5h3.6M0.0 46.1h3.6M21.3 46.1h1.9M0.0 47.8h5.5M36.5 51.0h7.5M18.8 52.7h4.0M23.6 52.7h3.4M8.4 54.3h9.0M18.2 54.3h7.0M1.6 59.2h4.4M40.0 67.3h5.9M21.0 78.7h6.8M9.3 82.0h10.0M4.8 86.9h11.0M11.2 90.1h4.9M1.6 93.4h0.8M13.8 95.0h1.4M7.7 99.9h7.7M16.2 99.9h4.1M5.6 103.2h6.1M12.4 103.2h7.6M20.8 103.2h3.2M1.6 104.8h6.3M21.9 106.4h1.3M1.6 109.7h10.7M19.8 121.1h8.4M29.0 121.1h7.0M8.4 122.7h2.0M16.0 124.4h1.6M19.1 126.0h3.9M13.1 127.6h6.1M18.8 132.5h9.5M29.1 132.5h7.7M37.7 132.5h0.7M1.6 142.3h4.6M15.8 142.3h8.2M6.5 143.9h3.2M1.6 145.6h5.6M13.4 148.8h3.5M17.7 148.8h4.7M11.8 150.5h9.0M1.6 153.7h3.5M27.1 155.3h0.9M13.2 157.0h9.3M23.2 157.0h2.4M6.7 158.6h7.7M15.1 158.6h2.5M5.7 163.5h6.9M10.8 173.3h3.6M1.6 174.9h8.2M17.6 179.8h5.8M8.1 186.3h6.6M21.2 186.3h2.0M8.5 187.9h2.7M15.0 189.6h9.3M4.8 197.7h6.4M12.9 199.4h3.7M17.4 199.4h5.6M17.7 201.0h6.3M19.5 207.5h5.8M12.7 214.0h3.3M31.4 217.3h3.1M35.3 217.3h3.9M30.2 223.8h6.4M37.5 223.8h6.5M1.6 227.1h7.1M9.5 227.1h5.2M17.6 228.7h6.0M7.9 235.2h6.3M12.9 241.7h3.4M7.9 243.4h5.3M5.2 249.9h4.3M10.3 249.9h5.7M21.2 253.1h4.4M26.5 253.1h5.5M10.8 254.8h10.7M29.1 254.8h6.5M12.9 259.7h1.5M13.1 264.6h9.7M33.4 264.6h10.5M44.7 264.6h0.9M0.0 267.8h5.5M10.6 267.8h6.3M50.1 267.8h4.3M13.8 271.1h8.8M36.9 271.1h5.7M11.4 276.0h5.9M6.4 284.1h7.9M15.1 284.1h10.1M0.8 285.7h1.6M15.2 287.4h4.8M29.1 289.0h3.7M12.0 295.5h6.4M19.2 295.5h8.8M13.7 298.8h7.9M4.8 302.0h5.3M16.3 302.0h2.1M3.2 305.3h2.4M21.0 306.9h10.0M21.5 316.7h4.1M7.2 318.3h7.5M15.5 318.3h6.9M28.7 318.3h4.1M17.3 323.2h5.9M18.6 326.5h5.7M9.8 328.1h5.4M3.2 329.8h7.7M7.9 339.5h2.5M20.6 344.4h7.6M29.0 344.4h7.0M23.6 349.3h9.6M1.6 357.5h4.7M7.5 359.1h4.6M6.6 360.7h8.3M1.6 362.4h8.0M10.5 367.2h3.4M0.0 368.9h6.4M8.9 370.5h3.0M1.6 372.1h5.5M10.5 373.8h8.3M1.6 375.4h8.1M1.6 377.0h5.3M7.7 377.0h6.5M20.3 385.2h3.9M25.0 385.2h4.9M30.7 385.2h6.1M32.6 395.0h7.8M30.6 398.2h2.2M10.3 403.1h3.5M14.6 403.1h8.6M8.3 404.7h2.9M21.9 406.4h6.1M14.3 408.0h4.2M9.3 411.3h10.1M8.8 412.9h1.6M14.3 416.1h9.7M22.7 417.8h10.7M12.9 421.0h4.7M25.1 422.7h8.5M25.8 424.3h5.8M10.4 429.2h8.7M6.4 430.8h5.2M5.3 435.7h8.3M25.9 435.7h7.3M10.6 437.3h10.9M35.3 440.6h8.3M5.7 445.5h10.5M1.6 448.7h4.7M11.9 465.0h2.5M10.6 466.7h3.0M14.4 466.7h1.6M7.4 469.9h5.9M8.2 474.8h3.3M12.3 474.8h0.5M1.6 476.5h9.8M10.7 479.7h7.6M34.3 481.3h4.0M11.2 486.2h10.7M12.8 487.9h5.0M18.6 487.9h6.9M42.8 487.9h10.1M16.4 504.2h4.0M21.2 504.2h3.6M21.7 505.8h5.1M3.2 513.9h3.2M16.5 517.2h4.2M10.2 518.8h8.2M15.7 520.5h5.9M3.2 522.1h2.4M13.8 523.7h8.4M23.0 523.7h4.5M37.1 523.7h7.0M1.6 528.6h8.4M0.0 530.2h1.6M8.8 533.5h3.9M13.5 533.5h10.0M22.3 535.1h3.7M26.8 535.1h6.0M1.6 536.8h4.0M16.1 538.4h0.7M6.1 540.0h9.5M21.5 543.3h3.3M3.2 548.2h7.4M18.3 548.2h2.5M13.7 551.4h3.9M19.5 553.1h9.4M6.4 566.1h3.6M3.8 571.0h6.6M11.2 571.0h4.4M16.0 577.5h4.8M1.6 582.4h3.5M5.9 582.4h9.9M19.5 584.0h1.3M13.6 587.3h8.0M8.9 588.9h4.4M14.2 588.9h3.7M14.8 590.6h10.2M1.6 592.2h5.0M12.6 592.2h5.0M7.0 593.8h8.2M6.0 595.4h8.4M24.8 600.3h7.2M9.4 602.0h10.5M6.3 605.2h4.5M8.4 608.5h6.0M11.7 610.1h10.9M20.4 611.7h9.3M21.5 615.0h3.7M26.0 615.0h6.8M1.6 619.9h5.3M22.6 619.9h0.6M11.0 631.3h5.2M4.8 637.8h3.8M21.4 641.1h10.5M4.8 644.3h10.0M15.4 646.0h5.4M15.3 647.6h0.7M0.0 657.4h3.0M29.0 657.4h9.2M1.6 660.6h4.5M11.3 662.3h8.3M1.6 667.2h6.4M18.6 676.9h6.2M1.6 681.8h9.7M12.1 681.8h2.3M4.4 688.4h6.0M11.2 688.4h6.1M29.1 701.4h3.1M45.4 701.4h8.6M6.3 703.0h6.0M36.0 704.7h5.1M41.6 717.7h5.2M7.7 721.0h4.0M10.2 722.6h10.3M28.2 722.6h4.6M0.0 725.8h4.8M16.8 727.5h7.1M12.8 729.1h4.9M18.5 729.1h9.5M17.8 732.4h3.8M3.2 738.9h2.4M25.4 740.5h4.4M10.6 745.4h4.6M0.0 747.0h1.6M7.9 751.9h9.0M23.3 751.9h9.5M1.6 753.6h3.3M12.8 753.6h5.4M19.0 753.6h3.2M1.6 756.8h6.0M17.5 760.1h3.9M27.1 760.1h0.9M12.8 761.7h9.8M8.2 763.3h5.7M24.5 763.3h1.9M13.8 768.2h3.8M3.2 779.6h4.8M4.8 781.3h10.7M16.8 782.9h4.8M6.4 784.5h6.3M13.5 784.5h2.5M22.8 787.8h9.3M15.1 791.0h0.9M22.1 792.7h1.9M1.6 794.3h4.9M5.4 795.9h4.4M7.7 799.2h4.1M11.4 800.8h8.3M8.9 805.7h3.2M1.6 809.0h10.2M1.6 812.2h6.8M12.2 822.0h0.6M1.6 825.3h9.8M10.9 826.9h7.8M7.9 828.5h4.0M41.2 828.5h3.9M0.0 830.2h10.9M30.2 831.8h2.6M1.6 833.4h9.8M18.4 836.7h4.8M29.2 841.6h2.0M3.2 846.5h7.2M13.0 849.7h3.2M17.0 849.7h4.5M33.4 851.4h2.6M12.2 854.6h5.4M29.7 856.2h3.9M32.5 857.9h3.5M13.9 861.1h3.7M12.5 864.4h3.5M18.4 867.7h10.3M7.5 869.3h7.6M15.9 869.3h3.4M15.1 874.2h4.6M26.4 874.2h3.9M35.1 874.2h8.9M0.0 875.8h4.3M5.1 875.8h1.3M18.8 879.1h5.0M18.4 880.7h2.4M1.6 882.3h3.3M6.4 887.2h8.5M11.7 890.5h6.8M19.2 890.5h2.4M1.6 892.1h6.3M15.4 892.1h8.6M24.8 892.1h3.2M22.7 893.7h2.9M1.6 898.6h9.6M21.1 903.5h10.9M10.4 905.1h9.9M1.6 910.0h9.2M1.6 911.7h3.8M11.4 911.7h3.0M9.1 914.9h5.8M25.0 914.9h4.9M35.2 914.9h7.0M16.0 919.8h5.3M36.4 921.4h5.8M12.9 924.7h3.9" stroke="#a9b565" stroke-width="0.9" fill="none" opacity="0.62"/><path d="M11.3 3.8h9.6M5.5 8.6h0.9M1.6 10.3h6.4M20.7 11.9h3.3M1.6 15.2h8.1M15.2 20.1h5.6M0.0 21.7h6.4M1.6 23.3h7.0M1.6 24.9h10.6M21.7 24.9h6.3M23.7 26.6h1.9M1.6 31.5h9.3M4.3 33.1h5.8M10.9 33.1h5.1M14.0 36.4h10.7M25.5 36.4h6.5M8.5 38.0h5.9M15.3 38.0h9.1M10.6 42.9h3.8M6.3 47.8h9.9M27.3 47.8h9.5M0.0 51.0h5.3M48.9 51.0h5.5M8.2 52.7h9.9M39.3 54.3h5.7M9.3 60.8h3.4M20.3 67.3h5.5M31.0 67.3h8.2M17.2 72.2h9.1M6.4 77.1h5.6M20.2 82.0h1.4M4.8 85.3h9.7M21.1 99.9h4.2M1.6 101.6h10.5M22.0 101.6h7.8M30.6 101.6h2.2M13.1 109.7h10.1M14.2 111.3h9.9M19.1 113.0h5.9M25.7 113.0h0.7M14.1 114.6h6.1M12.1 117.9h5.0M15.6 119.5h6.6M23.0 119.5h3.9M15.5 121.1h3.5M19.9 127.6h3.3M24.1 127.6h5.0M14.6 134.2h1.4M28.2 137.4h5.5M34.6 137.4h8.1M11.1 142.3h3.9M18.3 143.9h2.5M1.6 147.2h6.4M5.9 153.7h8.2M8.9 155.3h3.3M13.0 155.3h5.9M19.7 155.3h6.6M1.6 157.0h10.8M7.6 166.8h8.0M27.5 166.8h4.5M6.0 168.4h9.3M16.1 168.4h6.9M23.8 168.4h3.2M27.9 168.4h8.0M20.0 176.5h3.2M5.3 178.2h7.1M26.4 178.2h9.7M36.9 178.2h8.7M18.8 183.1h5.2M7.2 189.6h7.0M18.0 191.2h4.6M3.2 192.8h8.1M19.2 192.8h7.2M9.7 196.1h0.7M11.7 205.9h8.8M26.1 207.5h9.0M16.3 212.4h10.8M0.0 217.3h5.9M6.7 217.3h3.2M10.7 217.3h10.1M23.1 218.9h5.8M7.7 220.5h5.2M16.6 223.8h6.3M12.7 230.3h6.3M19.7 230.3h1.1M15.0 235.2h7.4M4.0 236.8h6.9M11.7 236.8h9.1M0.0 238.5h3.8M12.6 240.1h4.6M17.1 241.7h10.6M6.5 258.0h4.0M4.6 262.9h3.2M23.6 264.6h9.1M27.4 267.8h9.4M37.6 267.8h7.2M6.4 269.4h6.0M13.2 269.4h7.7M21.7 269.4h9.9M32.4 269.4h3.6M6.0 271.1h7.0M23.4 271.1h5.3M8.7 274.3h7.9M10.6 277.6h6.2M26.0 284.1h5.6M37.7 284.1h7.3M45.8 284.1h6.2M20.8 287.4h4.0M15.0 289.0h6.4M14.6 290.6h2.2M13.2 293.9h3.5M10.9 302.0h4.6M13.3 303.7h7.1M4.8 306.9h6.6M12.2 316.7h8.6M23.1 318.3h4.7M19.5 320.0h4.5M1.6 323.2h6.9M11.7 329.8h8.0M20.4 329.8h6.0M3.2 331.4h7.3M3.2 333.0h7.2M12.0 334.6h4.5M15.8 336.3h8.7M25.3 336.3h7.4M31.0 337.9h5.0M14.5 341.2h3.1M13.4 342.8h5.2M19.4 342.8h4.8M11.4 344.4h8.5M3.2 346.1h4.8M12.0 349.3h10.8M30.7 354.2h5.1M7.1 357.5h8.9M1.6 359.1h5.1M18.4 359.1h5.6M17.0 365.6h5.4M14.0 372.1h6.2M26.7 372.1h1.3M7.9 378.7h4.8M11.9 383.5h3.4M22.3 383.5h6.9M30.1 383.5h1.9M8.8 391.7h5.6M8.6 393.3h5.4M14.9 393.3h8.3M22.8 395.0h9.0M13.3 406.4h7.8M11.1 409.6h7.4M20.2 411.3h0.6M3.2 412.9h4.8M16.5 417.8h5.3M20.6 424.3h4.4M12.9 427.6h4.7M27.5 429.2h9.3M7.6 434.1h10.5M34.6 434.1h4.6M14.4 435.7h4.4M19.6 435.7h5.5M23.4 445.5h0.6M7.1 448.7h3.3M10.8 452.0h8.8M20.4 452.0h2.0M0.0 453.6h3.6M11.7 453.6h4.9M17.5 453.6h3.3M0.0 455.3h6.4M8.4 456.9h6.1M21.6 460.2h4.0M1.6 463.4h9.2M0.0 466.7h9.8M0.0 469.9h6.6M0.0 471.6h10.3M5.5 478.1h8.4M4.9 479.7h5.0M15.5 481.3h10.8M27.1 481.3h6.4M36.8 484.6h10.6M48.2 484.6h4.5M0.0 486.2h10.4M32.6 486.2h3.4M6.1 491.1h3.8M10.8 491.1h6.0M16.4 492.8h1.2M9.5 494.4h7.3M10.4 500.9h6.0M0.0 504.2h9.3M10.1 504.2h5.5M1.6 510.7h10.1M12.5 510.7h6.3M24.9 512.3h3.1M4.8 515.6h7.6M9.5 523.7h3.5M28.3 523.7h3.7M10.8 528.6h4.4M24.3 533.5h1.3M11.0 535.1h10.5M6.4 536.8h4.8M16.4 540.0h4.9M6.1 541.7h5.1M10.1 543.3h10.5M7.4 546.5h9.8M23.4 546.5h3.0M9.3 551.4h3.6M12.0 553.1h6.7M28.1 554.7h7.9M14.9 558.0h2.7M4.8 564.5h3.2M8.8 564.5h8.4M25.4 571.0h8.4M34.6 571.0h9.4M1.6 574.3h8.1M17.9 575.9h3.7M16.6 582.4h5.8M0.0 585.7h6.1M1.6 587.3h4.4M6.8 587.3h6.0M18.7 588.9h6.8M26.3 588.9h1.7M1.6 593.8h4.6M10.1 597.1h5.9M20.7 602.0h7.5M29.0 602.0h7.8M12.1 606.9h2.3M10.6 613.4h6.9M18.3 613.4h7.3M8.6 618.3h8.2M7.7 619.9h10.2M13.1 623.2h4.9M18.8 623.2h9.1M15.3 628.0h3.2M9.3 629.7h1.1M17.0 631.3h0.6M11.4 632.9h4.6M25.1 632.9h7.8M9.4 637.8h8.2M10.7 639.5h5.1M6.4 641.1h3.7M21.7 646.0h8.3M30.8 646.0h7.6M6.4 647.6h8.1M6.8 650.9h5.3M30.1 652.5h4.3M5.1 654.1h3.7M16.3 654.1h6.1M16.3 657.4h4.9M22.0 657.4h6.2M11.8 660.6h4.2M9.9 670.4h5.7M16.4 670.4h4.0M1.6 673.7h10.5M7.9 676.9h9.9M13.6 678.6h3.9M20.8 686.7h9.8M18.1 688.4h9.1M6.3 691.6h6.5M1.6 693.2h7.7M11.4 696.5h7.0M8.2 698.1h3.9M12.9 698.1h6.9M20.6 698.1h9.2M0.0 701.4h7.3M13.1 703.0h10.2M10.5 704.7h8.9M0.0 706.3h3.6M14.0 711.2h2.8M1.6 712.8h8.3M10.7 712.8h6.1M0.0 716.1h2.4M19.6 717.7h9.8M47.6 717.7h4.4M0.0 721.0h6.9M12.5 721.0h10.7M7.5 724.2h9.3M4.8 734.0h10.2M15.8 734.0h6.6M4.8 735.6h7.3M4.8 737.3h7.4M5.7 753.6h6.2M23.0 753.6h1.0M18.0 756.8h5.2M0.0 758.4h9.1M9.9 758.4h1.3M22.2 760.1h4.1M3.2 761.7h8.8M3.2 763.3h4.2M14.7 763.3h9.0M17.3 765.0h3.5M10.5 769.9h9.9M27.9 771.5h4.4M33.0 771.5h3.0M4.8 774.7h4.5M10.1 774.7h7.5M23.0 776.4h9.5M6.4 778.0h8.7M22.3 782.9h10.7M0.0 787.8h3.3M15.0 787.8h6.9M37.8 787.8h6.2M14.0 804.1h7.3M12.9 805.7h6.0M9.2 812.2h5.2M5.7 813.9h9.4M0.0 818.8h5.4M20.2 818.8h10.5M6.7 823.6h4.8M19.4 826.9h3.8M12.6 828.5h6.4M24.7 828.5h8.7M16.6 833.4h7.4M10.2 835.1h6.6M22.3 839.9h5.4M13.2 841.6h9.2M23.3 841.6h5.1M10.6 843.2h5.8M17.1 843.2h3.1M11.4 856.2h7.2M24.0 857.9h7.8M24.2 862.8h3.7M28.7 862.8h7.1M36.6 862.8h1.8M0.0 867.7h7.1M29.5 867.7h6.4M5.3 870.9h10.2M11.1 874.2h3.2M20.5 874.2h5.1M8.8 877.4h7.2M13.2 879.1h4.8M5.9 880.7h4.6M5.7 882.3h4.7M15.7 887.2h4.7M0.0 888.8h5.4M1.6 893.7h10.9M8.3 895.4h6.6M15.6 895.4h2.0M13.3 897.0h1.9M21.1 905.1h3.2M6.2 911.7h4.4M16.2 913.3h7.0M30.6 914.9h3.8M32.8 918.2h9.7M4.1 919.8h6.2M22.1 919.8h3.5M10.6 921.4h6.2M17.5 921.4h7.6M15.3 926.3h2.3M1.6 929.6h6.9M15.1 929.6h1.7" stroke="#cfcfcf" stroke-width="0.9" fill="none" opacity="0.62"/><path d="M5.7 0.5h6.0M21.3 0.5h7.8M35.8 0.5h3.4M20.8 2.1h9.9M21.7 3.8h0.7M0.0 7.0h8.7M9.5 7.0h8.8M41.5 7.0h2.5M0.0 8.6h4.7M8.8 10.3h7.2M1.6 26.6h5.5M7.9 26.6h6.0M8.8 28.2h8.8M0.0 33.1h3.5M25.1 38.0h5.4M11.8 41.2h1.0M4.4 46.1h10.1M37.5 47.8h7.7M6.1 51.0h6.7M13.7 51.0h5.3M19.8 51.0h3.3M28.9 51.0h6.8M44.8 51.0h3.3M27.7 52.7h8.3M26.0 54.3h8.3M45.9 54.3h9.3M1.6 60.8h6.9M13.5 60.8h3.3M12.4 67.3h7.1M26.6 67.3h3.6M46.7 67.3h5.3M0.8 69.0h1.6M10.2 70.6h6.0M10.4 72.2h6.0M27.0 72.2h5.8M17.6 77.1h10.5M15.3 83.6h7.1M16.9 90.1h8.2M25.9 90.1h7.9M34.6 90.1h5.0M40.4 90.1h4.4M1.6 95.0h6.3M8.7 95.0h4.2M0.0 99.9h6.9M12.9 101.6h8.4M9.7 114.6h3.6M3.2 122.7h4.4M4.8 124.4h10.4M23.7 126.0h9.0M29.9 127.6h6.1M11.7 132.5h6.3M6.8 137.4h9.7M17.3 137.4h10.1M43.4 137.4h0.6M1.6 140.7h9.2M11.6 140.7h4.4M7.0 142.3h3.3M10.5 143.9h7.0M14.9 153.7h3.2M18.9 153.7h2.7M14.0 160.2h1.2M13.5 163.5h2.5M0.0 168.4h5.2M10.6 174.9h3.8M13.1 176.5h6.1M13.1 178.2h7.3M21.2 178.2h4.4M10.2 179.8h6.6M24.1 179.8h1.5M1.6 189.6h4.8M23.4 191.2h3.7M12.1 192.8h6.2M3.2 194.5h9.7M23.7 199.4h8.8M24.8 201.0h10.2M3.2 202.6h6.9M15.9 210.8h1.7M6.4 212.4h9.1M27.9 212.4h10.5M11.4 218.9h10.9M7.4 223.8h8.4M0.0 225.4h6.4M5.8 228.7h3.5M10.0 228.7h6.7M4.6 238.5h1.8M1.6 240.1h10.2M17.9 240.1h3.7M14.0 243.4h6.3M1.6 248.3h6.5M13.2 261.3h1.2M0.0 262.9h3.8M8.6 262.9h7.2M16.6 262.9h6.6M8.1 264.6h4.2M45.6 267.8h3.7M29.5 271.1h6.6M43.4 271.1h10.9M1.6 276.0h3.5M5.8 277.6h3.9M5.5 279.2h6.0M7.3 287.4h7.1M22.3 289.0h6.1M9.2 290.6h4.6M21.9 293.9h5.6M13.2 300.4h4.9M18.8 300.4h3.6M12.2 306.9h8.0M10.9 320.0h7.8M8.9 321.6h7.9M9.3 323.2h7.2M6.9 324.9h4.3M13.4 326.5h4.4M16.0 328.1h9.9M11.3 331.4h9.5M6.4 336.3h8.6M17.5 337.9h7.3M25.7 337.9h4.6M29.8 342.8h3.8M34.0 349.3h4.3M12.4 350.9h3.6M9.8 354.2h8.5M19.1 354.2h10.8M36.5 354.2h7.5M1.6 364.0h3.8M6.2 364.0h1.8M7.5 365.6h3.6M14.6 367.2h6.1M12.8 370.5h4.8M18.4 370.5h3.2M21.1 372.1h4.8M1.6 373.8h8.1M19.6 373.8h6.0M13.5 378.7h0.9M0.0 380.3h3.5M16.1 383.5h5.4M1.6 391.7h6.4M5.4 395.0h5.1M11.3 395.0h10.7M13.9 396.6h8.2M23.0 396.6h2.6M17.2 398.2h5.9M23.9 398.2h5.9M15.4 399.8h7.8M9.2 401.5h7.0M19.2 408.0h8.5M28.5 408.0h2.7M19.3 409.6h5.5M20.4 422.7h3.9M37.5 429.2h0.9M12.4 430.8h3.6M18.9 434.1h6.8M0.0 440.6h3.9M4.7 440.6h5.8M11.2 440.6h9.4M10.7 443.9h4.7M17.0 445.5h5.6M4.4 453.6h6.5M15.3 456.9h6.3M10.2 460.2h10.6M10.3 461.8h7.2M1.6 465.0h9.5M24.5 469.9h3.0M11.1 471.6h4.4M16.3 471.6h7.7M24.8 471.6h5.5M19.2 479.7h4.0M7.1 484.6h8.5M22.8 486.2h9.0M26.3 487.9h4.1M31.2 487.9h10.8M53.7 487.9h1.5M0.0 489.5h6.4M1.6 492.8h5.1M7.5 492.8h8.2M11.2 496.0h5.6M44.1 500.9h7.9M11.8 505.8h9.0M27.6 505.8h4.3M6.1 507.4h10.7M0.0 509.1h4.8M19.6 510.7h5.8M26.2 510.7h2.6M32.8 523.7h3.6M1.6 535.1h8.6M12.0 536.8h3.8M16.6 536.8h7.4M5.6 538.4h9.7M22.1 540.0h1.1M3.2 544.9h9.9M13.9 544.9h8.1M22.7 544.9h8.5M6.4 553.1h4.8M12.1 554.7h6.6M19.6 554.7h7.7M17.2 559.6h10.7M28.8 559.6h4.8M6.4 561.2h5.4M12.6 561.2h9.7M28.2 561.2h7.7M20.4 566.1h6.8M28.0 566.1h7.9M36.7 566.1h1.7M0.0 571.0h3.0M0.0 584.0h6.6M13.0 584.0h5.7M1.6 595.4h3.6M6.5 600.3h9.2M0.0 611.7h8.6M16.8 615.0h3.9M12.2 616.6h5.2M8.7 621.5h2.5M1.6 623.2h10.7M11.1 624.8h7.7M28.2 624.8h3.0M3.2 629.7h5.3M21.2 632.9h3.2M6.4 634.6h8.3M15.5 634.6h8.6M24.9 634.6h5.2M6.4 639.5h3.5M26.0 639.5h7.0M10.9 641.1h9.6M15.6 644.3h2.0M6.4 646.0h8.2M12.9 650.9h8.9M22.6 650.9h7.8M31.2 650.9h8.0M0.0 652.5h3.8M4.6 652.5h8.4M13.8 652.5h8.9M23.5 652.5h5.9M9.6 654.1h6.0M3.8 657.4h5.5M10.1 657.4h5.4M39.0 657.4h5.0M20.3 662.3h3.7M12.6 663.9h6.0M9.3 665.5h1.1M12.0 668.8h9.6M0.0 670.4h9.1M1.6 675.3h6.8M9.2 675.3h10.4M7.8 678.6h5.0M8.0 683.5h3.7M11.5 686.7h8.5M31.4 686.7h0.6M0.0 688.4h3.6M10.1 693.2h4.3M1.6 694.9h8.3M10.7 694.9h3.7M0.0 696.5h10.6M19.2 696.5h3.2M40.8 698.1h4.8M8.1 701.4h8.7M33.0 701.4h4.9M38.7 701.4h5.9M24.1 703.0h3.0M0.0 704.7h9.7M20.1 704.7h4.8M12.1 709.5h4.7M6.0 711.2h3.2M10.0 711.2h3.2M24.7 727.5h4.1M13.0 737.3h8.3M30.7 740.5h7.7M43.8 740.5h1.0M1.6 745.4h8.2M17.8 750.3h7.0M17.7 751.9h4.8M9.5 755.2h7.3M8.4 756.8h8.8M1.6 760.1h3.5M23.4 761.7h7.8M12.1 765.0h4.4M3.2 766.6h7.2M28.1 769.9h4.4M16.6 776.4h5.6M15.9 778.0h9.4M26.1 778.0h9.9M16.3 781.3h1.3M33.8 782.9h3.6M32.9 787.8h4.1M1.6 792.7h5.8M8.2 792.7h3.7M1.6 797.6h6.4M10.3 807.3h10.8M21.9 807.3h3.7M12.6 809.0h5.0M1.6 810.6h8.4M0.0 817.1h7.7M16.8 817.1h6.4M24.1 817.1h7.7M6.2 818.8h7.9M14.9 818.8h4.5M31.5 818.8h5.3M5.5 822.0h6.0M19.8 828.5h4.1M34.2 828.5h6.2M11.7 830.2h3.6M9.7 831.8h6.0M20.6 831.8h8.8M12.2 833.4h3.6M7.2 838.3h3.9M14.8 839.9h6.7M21.0 843.2h5.4M22.3 849.7h3.2M27.0 851.4h5.6M4.8 854.6h6.6M19.3 856.2h9.6M6.4 857.9h9.3M16.5 857.9h6.7M36.7 867.7h2.5M0.0 869.3h6.7M20.1 869.3h6.8M16.4 870.9h6.0M31.1 874.2h3.1M6.4 884.0h1.6M1.6 895.4h5.9M10.9 903.5h9.5M0.0 906.8h6.4M6.5 913.3h8.9M15.7 914.9h8.4M43.3 918.2h6.0M11.1 919.8h4.1M43.0 921.4h3.2M47.1 921.4h8.1M9.2 926.3h5.3" stroke="#8f8f8f" stroke-width="0.9" fill="none" opacity="0.62"/></svg><div style="left:893px;top:47px;width:1px;height:940px;background:#2a2a2a;"></div><div style="left:895px;top:57px;width:9px;height:1.5px;background:#8a8a8a;"></div><div style="left:826px;top:59px;width:67px;height:1px;background:#3a3a3a;"></div><div style="left:905px;top:0px;width:1px;height:980px;background:#2c2c2c;"></div><div style="left:897px;top:627.1534915029376px;width:6px;height:1px;background:#555;"></div><div style="left:897px;top:778.770337697813px;width:8px;height:1px;background:#555;"></div><div style="left:895px;top:890.6459970655669px;width:6px;height:1px;background:#555;"></div><div style="left:895px;top:761.8435393434308px;width:8px;height:1px;background:#555;"></div><div style="left:895px;top:124.63086325520595px;width:4px;height:1px;background:#555;"></div><div style="left:895px;top:406.1781528948303px;width:6px;height:1px;background:#555;"></div><div style="left:897px;top:557.5095561276188px;width:4px;height:1px;background:#555;"></div><div class="t" style="top:8.11px;font-size:10.6px;line-height:13.78px;color:#777;left:913px;letter-spacing:0.25px;">styles.scss</div><div class="t" style="top:8.11px;font-size:10.6px;line-height:13.78px;color:#a8a8a8;left:1011px;letter-spacing:0.25px;">json.ts</div><svg style="left:1083px;top:9px;" width="10" height="10" viewBox="0 0 10 10"><path d="M2 2l6 6M8 2l-6 6" stroke="#8a8a8a" stroke-width="1" fill="none"/></svg><div class="t" style="top:7.0px;font-size:10px;line-height:13.0px;color:#c0c0c0;left:1713px;letter-spacing:0.5px;">···</div><div class="t" style="left:918px;top:30px;font-size:10.6px;line-height:14px;color:#9a9a9a;letter-spacing:0.25px;word-spacing:0.5px">project <span style="color:#8a8a8a">&gt;</span> excalidraw <span style="color:#8a8a8a">&gt;</span> src <span style="color:#8a8a8a">&gt;</span> data <span style="color:#8a8a8a">&gt;</span> json.ts <span style="color:#8a8a8a">&gt;</span> ...</div><div style="left:959px;top:282.14000000000004px;width:686px;height:13.68px;border-top:1px solid #2b2b2b;border-bottom:1px solid #2b2b2b;"></div><div style="left:958.5999999999999px;top:91.29999999999998px;width:1px;height:58.72px;background:#333;"></div><div style="left:958.5999999999999px;top:252.78000000000003px;width:1px;height:44.04px;background:#333;"></div><div style="left:958.5999999999999px;top:355.54px;width:1px;height:29.36px;background:#333;"></div><div style="left:958.5999999999999px;top:399.58px;width:1px;height:29.36px;background:#333;"></div><div style="left:958.5999999999999px;top:443.62000000000006px;width:1px;height:176.16px;background:#333;"></div><div style="left:970.27px;top:472.9799999999999px;width:1px;height:117.44px;background:#333;"></div><div style="left:981.9399999999998px;top:487.65999999999997px;width:1px;height:58.72px;background:#333;"></div><div style="left:981.9399999999998px;top:561.06px;width:1px;height:14.68px;background:#333;"></div><div style="left:958.5999999999999px;top:663.8199999999999px;width:1px;height:58.72px;background:#333;"></div><div style="left:958.5999999999999px;top:737.22px;width:1px;height:234.88px;background:#333;"></div><div style="left:970.27px;top:751.9px;width:1px;height:220.2px;background:#333;"></div><div style="left:981.9399999999998px;top:810.62px;width:1px;height:44.04px;background:#333;"></div><div style="left:981.9399999999998px;top:869.3399999999999px;width:1px;height:44.04px;background:#333;"></div><div style="left:981.9399999999998px;top:928.06px;width:1px;height:44.04px;background:#333;"></div><div style="left:993.6099999999999px;top:825.3px;width:1px;height:29.36px;background:#333;"></div><div style="left:993.6099999999999px;top:884.02px;width:1px;height:29.36px;background:#333;"></div><div style="left:993.6099999999999px;top:942.74px;width:1px;height:29.36px;background:#333;"></div><pre class="m" style="left:898px;top:47.25999999999999px;width:40px;text-align:right;font-size:9.7px;line-height:14.68px;color:#7a7a7a"><span style="color:#7a7a7a">1</span>
<span style="color:#7a7a7a">2</span>
<span style="color:#7a7a7a">3</span>
<span style="color:#7a7a7a">4</span>
<span style="color:#7a7a7a">5</span>
<span style="color:#7a7a7a">6</span>
<span style="color:#7a7a7a">7</span>
<span style="color:#7a7a7a">8</span>
<span style="color:#7a7a7a">9</span>
<span style="color:#7a7a7a">10</span>
<span style="color:#7a7a7a">11</span>
<span style="color:#7a7a7a">12</span>
<span style="color:#7a7a7a">13</span>
<span style="color:#7a7a7a">14</span>
<span style="color:#7a7a7a">15</span>
<span style="color:#7a7a7a">16</span>
<span style="color:#c6c6c6">17</span>
<span style="color:#7a7a7a">18</span>
<span style="color:#7a7a7a">19</span>
<span style="color:#7a7a7a">20</span>
<span style="color:#7a7a7a">21</span>
<span style="color:#7a7a7a">22</span>
<span style="color:#7a7a7a">23</span>
<span style="color:#7a7a7a">24</span>
<span style="color:#7a7a7a">25</span>
<span style="color:#7a7a7a">26</span>
<span style="color:#7a7a7a">27</span>
<span style="color:#7a7a7a">28</span>
<span style="color:#7a7a7a">29</span>
<span style="color:#7a7a7a">30</span>
<span style="color:#7a7a7a">31</span>
<span style="color:#7a7a7a">32</span>
<span style="color:#7a7a7a">33</span>
<span style="color:#7a7a7a">34</span>
<span style="color:#7a7a7a">35</span>
<span style="color:#7a7a7a">36</span>
<span style="color:#7a7a7a">37</span>
<span style="color:#7a7a7a">38</span>
<span style="color:#7a7a7a">39</span>
<span style="color:#7a7a7a">40</span>
<span style="color:#7a7a7a">41</span>
<span style="color:#7a7a7a">42</span>
<span style="color:#7a7a7a">43</span>
<span style="color:#7a7a7a">44</span>
<span style="color:#7a7a7a">45</span>
<span style="color:#7a7a7a">46</span>
<span style="color:#7a7a7a">47</span>
<span style="color:#7a7a7a">48</span>
<span style="color:#7a7a7a">49</span>
<span style="color:#7a7a7a">50</span>
<span style="color:#7a7a7a">51</span>
<span style="color:#7a7a7a">52</span>
<span style="color:#7a7a7a">53</span>
<span style="color:#7a7a7a">54</span>
<span style="color:#7a7a7a">55</span>
<span style="color:#7a7a7a">56</span>
<span style="color:#7a7a7a">57</span>
<span style="color:#7a7a7a">58</span>
<span style="color:#7a7a7a">59</span>
<span style="color:#7a7a7a">60</span>
<span style="color:#7a7a7a">61</span>
<span style="color:#7a7a7a">62</span>
<span style="color:#7a7a7a">63</span></pre><pre class="m mc" style="left:959px;top:47.25999999999999px;font-size:9.7px;line-height:14.68px;color:#ededed"><i class="k">import</i> <i class="p">{</i> fileOpen<i class="p">,</i> fileSave <i class="p">}</i> <i class="k">from</i> <i class="s">"./filesystem"</i><i class="p">;</i>
<i class="k">import</i> <i class="p">{</i> cleanAppStateForExport<i class="p">,</i> clearAppStateForDatabase <i class="p">}</i> <i class="k">from</i> <i class="s">"../appState"</i><i class="p">;</i>
<i class="k">import</i> <i class="p">{</i>
  EXPORT_DATA_TYPES<i class="p">,</i>
  EXPORT_SOURCE<i class="p">,</i>
  MIME_TYPES<i class="p">,</i>
  VERSIONS<i class="p">,</i>
<i class="p">}</i> <i class="k">from</i> <i class="s">"../constants"</i><i class="p">;</i>
<i class="k">import</i> <i class="p">{</i> clearElementsForDatabase<i class="p">,</i> clearElementsForExport <i class="p">}</i> <i class="k">from</i> <i class="s">"../element"</i><i class="p">;</i>
<i class="k">import</i> <i class="p">{</i> ExcalidrawElement <i class="p">}</i> <i class="k">from</i> <i class="s">"../element/types"</i><i class="p">;</i>
<i class="k">import</i> <i class="p">{</i> AppState<i class="p">,</i> BinaryFiles<i class="p">,</i> LibraryItems <i class="p">}</i> <i class="k">from</i> <i class="s">"../types"</i><i class="p">;</i>
<i class="k">import</i> <i class="p">{</i> isImageFileHandle<i class="p">,</i> loadFromBlob <i class="p">}</i> <i class="k">from</i> <i class="s">"./blob"</i><i class="p">;</i>

<i class="k">import</i> <i class="p">{</i>
  ExportedDataState<i class="p">,</i>
  ImportedDataState<i class="p">,</i>
  ExportedLibraryData<i class="p">,</i>
<i class="p">}</i> <i class="k">from</i> <i class="s">"./types"</i><i class="p">;</i>
<i class="k">import</i> Library <i class="k">from</i> <i class="s">"./library"</i><i class="p">;</i>

<i class="c">/**</i>
 <i class="c">* Strips out files which are only referenced by deleted elements</i>
 <i class="c">*/</i>
<i class="k">const</i> <i class="f">filterOutDeletedFiles</i> <i class="o">=</i> <i class="p">(</i>
  elements<i class="p">:</i> <i class="k">readonly</i> <i class="tp">ExcalidrawElement</i><i class="p">[</i><i class="p">]</i><i class="p">,</i>
  files<i class="p">:</i> <i class="tp">BinaryFiles</i><i class="p">,</i>
<i class="p">)</i> <i class="o">=&gt;</i> <i class="p">{</i>
  <i class="k">const</i> nextFiles<i class="p">:</i> <i class="tp">BinaryFiles</i> <i class="o">=</i> <i class="p">{</i><i class="p">}</i><i class="p">;</i>
  <i class="k">for</i> <i class="p">(</i><i class="k">const</i> element <i class="o">of</i> elements<i class="p">)</i> <i class="p">{</i>
    <i class="k">if</i> <i class="p">(</i>
      <i class="o">!</i>element<i class="p">.</i>isDeleted <i class="o">&amp;&amp;</i>
      <i class="s">"fileId"</i> <i class="o">in</i> element <i class="o">&amp;&amp;</i>
      element<i class="p">.</i>fileId <i class="o">&amp;&amp;</i>
      files<i class="p">[</i>element<i class="p">.</i>fileId<i class="p">]</i>
    <i class="p">)</i> <i class="p">{</i>
      nextFiles<i class="p">[</i>element<i class="p">.</i>fileId<i class="p">]</i> <i class="o">=</i> files<i class="p">[</i>element<i class="p">.</i>fileId<i class="p">]</i><i class="p">;</i>
    <i class="p">}</i>
  <i class="p">}</i>
  <i class="k">return</i> nextFiles<i class="p">;</i>
<i class="p">}</i><i class="p">;</i>

<i class="k">export</i> <i class="k">const</i> <i class="f">serializeAsJSON</i> <i class="o">=</i> <i class="p">(</i>
  elements<i class="p">:</i> <i class="k">readonly</i> <i class="tp">ExcalidrawElement</i><i class="p">[</i><i class="p">]</i><i class="p">,</i>
  appState<i class="p">:</i> <i class="tp">Partial</i><i class="p">&lt;</i><i class="tp">AppState</i><i class="p">&gt;</i><i class="p">,</i>
  files<i class="p">:</i> <i class="tp">BinaryFiles</i><i class="p">,</i>
  type<i class="p">:</i> <i class="s">"local"</i> <i class="o">|</i> <i class="s">"database"</i><i class="p">,</i>
<i class="p">)</i><i class="p">:</i> <i class="k">string</i> <i class="o">=&gt;</i> <i class="p">{</i>
  <i class="k">const</i> data<i class="p">:</i> <i class="y">ExportedDataState</i> <i class="o">=</i> <i class="p">{</i>
    type<i class="p">:</i> EXPORT_DATA_TYPES<i class="p">.</i>excalidraw<i class="p">,</i>
    version<i class="p">:</i> VERSIONS<i class="p">.</i>excalidraw<i class="p">,</i>
    source<i class="p">:</i> EXPORT_SOURCE<i class="p">,</i>
    elements<i class="p">:</i>
      type <i class="o">===</i> <i class="s">"local"</i>
        <i class="o">?</i> <i class="f">clearElementsForExport</i><i class="p">(</i>elements<i class="p">)</i>
        <i class="p">:</i> <i class="f">clearElementsForDatabase</i><i class="p">(</i>elements<i class="p">)</i><i class="p">,</i>
    appState<i class="p">:</i>
      type <i class="o">===</i> <i class="s">"local"</i>
        <i class="o">?</i> <i class="f">cleanAppStateForExport</i><i class="p">(</i>appState<i class="p">)</i>
        <i class="p">:</i> <i class="f">clearAppStateForDatabase</i><i class="p">(</i>appState<i class="p">)</i><i class="p">,</i>
    files<i class="p">:</i>
      type <i class="o">===</i> <i class="s">"local"</i>
        <i class="o">?</i> <i class="f">filterOutDeletedFiles</i><i class="p">(</i>elements<i class="p">,</i> files<i class="p">)</i>
        <i class="p">:</i> undefined<i class="p">,</i></pre><svg style="left:1648px;top:47px;" width="78" height="216" viewBox="0 0 78 216"><path d="M5.6 0.5h4.5M25.7 0.5h6.2M49.9 2.1h3.8M61.4 2.1h1.8M1.6 5.4h10.2M1.6 7.0h7.9M1.6 10.3h5.3M0.0 13.5h5.5M6.3 13.5h5.3M22.6 13.5h5.8M0.0 15.2h3.9M10.1 15.2h5.4M0.0 16.8h6.3M7.1 16.8h3.6M11.4 16.8h3.3M30.4 16.8h8.7M45.2 16.8h5.2M0.0 18.4h9.0M9.8 18.4h10.7M30.2 18.4h4.7M1.6 23.3h7.8M1.6 24.9h6.0M1.6 26.6h8.8M0.0 28.2h6.6M7.4 28.2h3.4M11.6 28.2h2.0M0.0 29.8h8.7M0.0 33.1h2.4M0.8 34.7h6.1M13.0 34.7h7.9M18.0 38.0h6.8M1.6 39.6h4.6M0.0 42.9h4.8M1.6 44.5h9.7M16.5 44.5h10.9M1.6 46.1h10.9M3.2 47.8h3.2M4.8 49.4h5.0M4.8 51.0h5.9M4.8 54.3h8.5M3.2 55.9h2.4M4.8 57.6h7.9M13.5 57.6h5.6M19.8 57.6h9.7M41.0 57.6h3.8M0.0 64.1h1.6M0.0 67.3h3.8M17.2 67.3h3.9M27.9 69.0h3.9M1.6 72.2h4.1M3.2 78.7h8.2M12.2 78.7h6.2M29.9 78.7h1.3M3.2 80.4h8.0M12.0 80.4h8.5M3.2 82.0h7.6M3.2 83.6h7.2M4.8 85.3h6.0M6.4 86.9h10.9M18.1 86.9h10.6M6.4 88.5h8.2M33.6 88.5h2.4M6.4 93.4h4.1M24.8 95.0h5.7M13.0 98.3h4.6M22.3 99.9h10.6M37.8 99.9h0.6M0.0 104.8h2.4M0.8 106.4h3.4M5.0 106.4h5.5M11.3 106.4h6.3M18.4 106.4h10.0M0.8 108.1h1.6M1.6 111.3h6.3M1.6 113.0h5.1M6.6 116.2h8.2M4.8 121.1h5.7M11.3 121.1h9.2M4.8 124.4h6.2M16.5 124.4h1.9M4.8 126.0h6.9M3.2 127.6h2.4M21.0 129.3h10.0M31.8 129.3h7.9M3.2 130.9h0.8M1.6 132.5h0.8M1.6 134.2h3.5M0.0 139.0h8.0M24.9 139.0h0.7M1.6 140.7h7.1M6.7 143.9h5.8M1.6 145.6h3.6M0.0 147.2h6.8M1.6 148.8h3.5M3.2 150.5h5.0M21.7 150.5h7.6M3.2 152.1h5.0M3.2 153.7h3.2M6.4 158.6h4.9M20.7 158.6h4.7M6.4 160.2h10.9M3.2 161.9h7.2M4.8 163.5h4.8M6.4 166.8h6.5M20.2 166.8h5.5M26.5 166.8h9.5M4.8 170.0h3.1M6.4 171.6h3.3M10.5 171.6h7.4M18.7 171.6h7.0M26.5 171.6h8.8M6.4 173.3h9.5M1.6 178.2h7.1M18.3 178.2h3.2M1.6 179.8h4.8M0.0 181.4h4.8M17.8 183.1h8.8M1.6 184.7h7.4M18.0 184.7h3.2M3.2 186.3h3.2M4.8 187.9h10.7M4.8 191.2h9.6M15.2 191.2h3.2M4.8 192.8h9.9M16.4 196.1h9.8M27.0 196.1h4.0M11.2 201.0h4.0M0.0 202.6h1.6M7.2 205.9h7.8M24.9 207.5h7.9M1.6 209.1h9.9M1.6 212.4h9.0" stroke="#8f84cf" stroke-width="0.9" fill="none" opacity="0.62"/><path d="M0.0 0.5h4.8M11.0 0.5h3.7M15.4 0.5h9.5M6.9 2.1h3.7M12.6 5.4h3.4M10.3 7.0h2.5M7.7 10.3h1.1M14.5 11.9h3.1M12.3 13.5h9.5M29.2 13.5h5.4M4.7 15.2h4.6M26.5 15.2h5.7M33.1 15.2h7.6M39.9 16.8h4.5M35.7 18.4h9.9M5.2 21.7h1.2M10.2 23.3h5.8M8.4 24.9h7.6M18.5 29.8h7.1M12.0 41.2h4.8M10.6 49.4h6.7M18.0 49.4h3.6M11.5 51.0h6.1M4.8 52.7h10.4M16.0 52.7h2.4M5.9 62.4h6.5M4.6 67.3h5.3M10.7 67.3h5.7M21.9 67.3h3.5M12.0 69.0h5.4M1.6 70.6h11.0M13.4 70.6h4.8M19.0 70.6h5.0M18.1 73.9h5.1M29.5 86.9h4.1M3.2 96.7h4.8M4.8 98.3h7.4M16.4 99.9h5.0M33.7 99.9h3.3M6.4 101.6h9.6M29.2 106.4h7.1M14.8 111.3h5.5M16.1 113.0h0.7M1.6 116.2h4.2M14.9 117.9h7.9M23.6 117.9h4.4M3.2 119.5h3.2M4.8 122.7h6.6M12.5 126.0h9.1M16.4 139.0h7.7M16.5 140.7h7.2M24.5 140.7h8.3M16.4 145.6h6.5M5.9 148.8h7.4M19.4 148.8h5.6M21.6 152.1h3.8M4.8 157.0h10.6M16.2 157.0h1.4M12.1 158.6h7.9M10.4 163.5h7.2M6.4 165.1h3.5M13.7 166.8h5.7M36.1 171.6h2.3M10.9 176.5h9.7M21.4 176.5h3.4M13.6 179.8h3.2M9.8 184.7h7.3M22.0 184.7h6.0M14.3 189.6h6.7M4.8 196.1h10.8M42.8 196.1h2.0M3.2 197.7h0.8M15.8 205.9h9.8M11.8 207.5h6.3M1.6 210.8h3.5M5.9 210.8h5.9M12.6 210.8h4.2M15.7 212.4h7.5" stroke="#a9b565" stroke-width="0.9" fill="none" opacity="0.62"/><path d="M11.4 2.1h9.1M40.3 2.1h8.8M0.0 11.9h4.3M41.3 13.5h5.0M15.5 16.8h9.1M15.7 26.6h1.9M7.7 34.7h4.6M31.5 34.7h4.8M41.5 34.7h10.5M0.8 36.4h1.6M0.0 38.0h7.1M7.9 38.0h9.3M7.0 39.6h10.7M23.9 39.6h7.9M1.6 41.2h9.6M12.1 44.5h3.5M28.2 44.5h0.6M13.3 46.1h9.6M14.1 54.3h6.7M30.3 57.6h9.9M3.2 59.2h0.8M1.6 60.8h0.8M1.6 62.4h3.5M1.6 69.0h9.6M15.8 72.2h1.0M1.6 73.9h6.3M6.3 75.5h4.9M1.6 77.1h7.0M19.1 78.7h10.0M11.6 85.3h6.0M15.4 88.5h7.6M3.2 90.1h7.2M4.8 91.8h3.5M16.8 91.8h0.8M15.3 93.4h8.9M25.0 93.4h6.6M6.4 99.9h3.7M0.0 109.7h8.3M20.4 109.7h4.4M26.7 111.3h6.1M23.0 116.2h5.8M10.3 117.9h3.8M21.2 122.7h1.2M4.8 129.3h8.6M0.0 135.8h1.6M21.5 142.3h2.5M1.6 143.9h4.3M13.3 143.9h3.5M7.6 147.2h3.5M9.0 150.5h7.2M30.1 150.5h1.1M7.2 153.7h6.6M26.2 158.6h7.4M18.1 160.2h9.4M18.5 165.1h3.7M3.2 168.4h3.2M8.7 170.0h8.9M0.0 176.5h10.1M27.0 178.2h5.5M7.2 179.8h5.6M1.6 183.1h10.4M12.8 183.1h4.3M27.5 183.1h1.3M16.3 187.9h5.3M4.8 189.6h8.7M21.8 189.6h0.6M15.5 192.8h6.1M31.9 196.1h10.1M19.0 207.5h5.1M12.3 209.1h6.1M19.2 209.1h4.8" stroke="#cfcfcf" stroke-width="0.9" fill="none" opacity="0.62"/><path d="M32.7 0.5h6.7M0.0 2.1h6.1M21.3 2.1h7.2M29.3 2.1h10.2M54.5 2.1h6.1M0.0 3.8h5.7M1.6 8.6h4.2M6.6 8.6h3.8M5.1 11.9h8.6M35.3 13.5h5.1M47.1 13.5h9.7M57.6 13.5h4.4M16.3 15.2h9.4M41.4 15.2h1.0M25.4 16.8h4.2M21.3 18.4h8.2M0.0 21.7h4.4M11.2 26.6h3.7M9.5 29.8h8.2M21.7 34.7h8.9M37.1 34.7h3.6M18.4 39.6h4.6M23.7 46.1h4.3M18.4 51.0h4.0M13.2 62.4h2.0M18.2 69.0h8.9M6.5 72.2h8.6M8.7 73.9h8.5M0.0 75.5h5.5M9.4 77.1h9.5M19.7 77.1h8.3M21.3 80.4h5.1M11.6 82.0h9.2M23.8 88.5h9.0M9.1 91.8h6.9M11.3 93.4h3.2M32.5 93.4h1.1M6.4 95.0h6.6M13.8 95.0h10.2M31.3 95.0h4.7M10.9 99.9h4.7M37.1 106.4h6.9M44.7 106.4h7.3M9.1 109.7h10.5M8.7 111.3h5.3M21.1 111.3h4.8M7.5 113.0h7.8M0.0 114.6h4.5M15.7 116.2h6.5M1.6 117.9h7.9M12.2 122.7h8.3M11.8 124.4h3.9M14.2 129.3h6.0M40.5 129.3h3.4M5.9 134.2h8.7M8.8 139.0h6.8M9.5 140.7h6.2M1.6 142.3h10.3M12.7 142.3h8.0M6.0 145.6h9.7M14.1 148.8h4.5M25.8 148.8h2.2M17.0 150.5h4.0M9.0 152.1h4.5M14.4 152.1h6.4M14.6 153.7h6.2M3.2 155.3h7.2M28.3 160.2h7.5M10.7 165.1h7.0M23.0 165.1h10.6M7.2 168.4h0.8M9.5 178.2h8.0M22.3 178.2h3.9M3.2 194.5h2.4M1.6 199.4h0.8M1.6 201.0h8.8M0.0 205.9h6.4M1.6 207.5h9.4M11.4 212.4h3.5" stroke="#8f8f8f" stroke-width="0.9" fill="none" opacity="0.62"/></svg><div style="left:1648px;top:69px;width:78px;height:1px;background:#33333a;"></div><div style="left:1726px;top:47px;width:10px;height:260px;background:#3b3b3b;"></div><div style="left:1726px;top:111px;width:10px;height:2px;background:#5a5a5a;"></div><div style="left:0px;top:960.5px;width:1740px;height:20px;background:#151515;"></div></div><div style="left:1499px;top:795px;width:856px;height:615px;background:#121212;border-radius:42px;box-shadow:inset 0 0 0 1.600px #8c8f90, inset 0 0 0 3px #3c3c3c;"></div><div style="left:1568px;top:793px;width:35px;height:3px;background:#777;border-radius:1px;"></div><div style="left:1609px;top:793px;width:35px;height:3px;background:#777;border-radius:1px;"></div><div style="left:1497.5px;top:839px;width:3px;height:27px;background:#6a6a6a;border-radius:1px;"></div><div id="tscr" style="left:1530px;top:826px;width:794px;height:554px;background:#0c0c0c;border-radius:11px;overflow:hidden;box-shadow:0 0 0 1px #1c1c1c"><div class="t" style="top:1.15px;font-size:7px;line-height:9.1px;color:#e8e8e8;left:10px;font-weight:700;">9:41  Mon Jun 3</div><svg style="left:726px;top:2px;" width="12" height="8" viewBox="0 0 12 8"><g fill="#eee"><rect x="0" y="5" width="2" height="3" rx=".4"/><rect x="3" y="3.500" width="2" height="4.500" rx=".4"/><rect x="6" y="2" width="2" height="6" rx=".4"/><rect x="9" y="0.300" width="2" height="7.700" rx=".4"/></g></svg><svg style="left:739px;top:1.5px;" width="10" height="8" viewBox="0 0 10 8"><g fill="none" stroke="#eee" stroke-width="1.300" stroke-linecap="round"><path d="M1 3a5.800 5.800 0 0 1 8 0"/><path d="M2.800 5a3.300 3.300 0 0 1 4.400 0"/></g><circle cx="5" cy="6.900" r=".9" fill="#eee"/></svg><div class="t" style="top:1.95px;font-size:7px;line-height:9.1px;color:#e8e8e8;left:750.5px;font-weight:700;">100%</div><div style="left:771px;top:2.5px;width:13px;height:7px;background:#f2f2f2;border-radius:2px;"></div><div style="left:784.5px;top:4.5px;width:1.2px;height:3px;background:#999;border-radius:1px;"></div><svg style="left:15px;top:30px;" width="18" height="14" viewBox="0 0 18 14"><g fill="none" stroke="#d8d8d8" stroke-width="1.200"><rect x="1" y="1" width="15.500" height="11.500" rx="1.800"/><path d="M6 1v11.500M2.800 4h1.600M2.800 6.200h1.600M2.800 8.400h1.600"/></g></svg><div style="left:10px;top:73px;width:195.5px;height:34px;background:#191919;border-radius:8px;"></div><div class="t" style="top:117.5px;font-size:12.3px;line-height:15.99px;color:#9a9a9a;right:651.5px;">My Sandboxes</div><div class="t" style="top:193.5px;font-size:12.3px;line-height:15.99px;color:#c8c8c8;right:665.5px;">CodeSandbox Team</div><div class="t" style="top:227.5px;font-size:12.3px;line-height:15.99px;color:#b4b4b4;right:667px;">All sandbox</div><div style="left:133px;top:230.5px;width:17px;height:9.5px;background:#3a3a3a;border-radius:2px;"></div><div class="t" style="top:231.58px;font-size:6.5px;line-height:8.45px;color:#bdbdbd;left:135.3px;">Pro</div><div class="t" style="top:515.5px;font-size:12.3px;line-height:15.99px;color:#9a9a9a;right:661px;">Documentation</div><div class="t" style="top:24.91px;font-size:18.6px;line-height:24.18px;color:#f2f2f2;left:229.4px;letter-spacing:0.1px;">Recent</div><svg style="left:738.5px;top:27.0px;" width="19.0" height="19.0" viewBox="0 0 19.0 19.0"><circle cx="9.5" cy="9.5" r="8.5" fill="#c9c9c9" stroke="#1d1d1d" stroke-width="1.3"/><clipPath id="av1"><circle cx="9.5" cy="9.5" r="7.6"/></clipPath><g clip-path="url(#av1)"><ellipse cx="9.5" cy="18.43" rx="7.31" ry="4.68" fill="#222"/><ellipse cx="9.84" cy="8.48" rx="3.40" ry="4.25" fill="#e8e8e8"/><path d="M5.93 8.48q-0.68 -5.27 3.91 -5.27q4.25 0 3.74 5.27q-1.02 -2.55 -3.74 -2.55q-2.89 0 -3.91 2.55z" fill="#222"/><path d="M6.95 9.93q2.89 1.87 5.78 0v1.02q-2.89 4.25 -5.78 0z" fill="#222" opacity=".7"/></g></svg><svg style="left:761px;top:33px;" width="9" height="7" viewBox="0 0 9 7"><path d="M1.500 2l3 3 3-3" fill="none" stroke="#cfcfcf" stroke-width="1.100"/></svg><div class="t" style="top:75.33px;font-size:11.8px;line-height:15.34px;color:#8f8f8f;left:229.4px;letter-spacing:0.15px;">Branches</div><div style="left:229.5px;top:103px;width:269.5px;height:157px;background:#1a1a1a;border-radius:9px;"></div><div style="left:505.29999999999995px;top:103px;width:269.3px;height:157px;background:#1a1a1a;border-radius:9px;"></div><div class="t" style="top:123.2px;font-size:12px;line-height:15.6px;color:#e4e4e4;left:247.3px;letter-spacing:0.18px;">excalidraw</div><svg style="left:309px;top:125.29999999999995px;" width="12.0" height="9.0" viewBox="0 0 12 9"><g fill="none" stroke="#a8a8a8" stroke-width="1.25"><path d="M0.500 1.700h2.600l3.600 4.800h3.600"/><path d="M6 1.700h4.500"/><path d="M8.300 4.300l2.200 2.200-2.200 2.200"/></g></svg><div class="t" style="top:123.2px;font-size:12px;line-height:15.6px;color:#e4e4e4;left:326.3px;letter-spacing:0.18px;">projects-release-demo</div><div class="t" style="top:157.68px;font-size:10.5px;line-height:13.65px;color:#7d7d7d;left:247.3px;letter-spacing:0.33px;">update readme.md to show commands in code</div><div class="t" style="top:170.98px;font-size:10.5px;line-height:13.65px;color:#7d7d7d;left:247.3px;letter-spacing:0.33px;">blocks (#4932)</div><div class="t" style="top:188.68px;font-size:10.5px;line-height:13.65px;color:#7d7d7d;left:247.3px;letter-spacing:0.33px;">2 hours ago by Compulves</div><div class="t" style="top:228.08px;font-size:8.8px;line-height:11.44px;color:#727272;left:247.3px;letter-spacing:0.25px;">7 commits behind main</div><svg style="left:438.7px;top:223.7px;" width="18.6" height="18.6" viewBox="0 0 18.6 18.6"><circle cx="9.3" cy="9.3" r="8.3" fill="#d8d8d8" stroke="#e0953a" stroke-width="1.3"/><clipPath id="av2"><circle cx="9.3" cy="9.3" r="7.4"/></clipPath><g clip-path="url(#av2)"><ellipse cx="9.3" cy="18.02" rx="7.14" ry="4.57" fill="#1c1c1c"/><ellipse cx="9.63" cy="8.30" rx="3.32" ry="4.15" fill="#efefef"/><path d="M5.81 8.30q-0.66 -5.15 3.82 -5.15q4.15 0 3.65 5.15q-1.00 -2.49 -3.65 -2.49q-2.82 0 -3.82 2.49z" fill="#1c1c1c"/><path d="M6.81 9.71q2.82 1.83 5.64 0v1.00q-2.82 4.15 -5.64 0z" fill="#1c1c1c" opacity=".7"/></g></svg><svg style="left:462.7px;top:223.7px;" width="18.6" height="18.6" viewBox="0 0 18.6 18.6"><circle cx="9.3" cy="9.3" r="8.3" fill="#8e8c6a" stroke="#e3a83c" stroke-width="1.3"/><clipPath id="av3"><circle cx="9.3" cy="9.3" r="7.4"/></clipPath><g clip-path="url(#av3)"><ellipse cx="9.3" cy="18.02" rx="7.14" ry="4.57" fill="#3a4a5a"/><ellipse cx="9.63" cy="8.30" rx="3.32" ry="4.15" fill="#d9c9a8"/><path d="M5.81 8.30q-0.66 -5.15 3.82 -5.15q4.15 0 3.65 5.15q-1.00 -2.49 -3.65 -2.49q-2.82 0 -3.82 2.49z" fill="#3a4a5a"/><path d="M6.81 9.71q2.82 1.83 5.64 0v1.00q-2.82 4.15 -5.64 0z" fill="#3a4a5a" opacity=".7"/></g></svg><div class="t" style="top:123.2px;font-size:12px;line-height:15.6px;color:#e4e4e4;left:522.9px;letter-spacing:0.18px;">sandpack</div><svg style="left:580px;top:125.29999999999995px;" width="12.0" height="9.0" viewBox="0 0 12 9"><g fill="none" stroke="#a8a8a8" stroke-width="1.25"><path d="M0.500 1.700h2.600l3.600 4.800h3.600"/><path d="M6 1.700h4.500"/><path d="M8.300 4.300l2.200 2.200-2.200 2.200"/></g></svg><div class="t" style="top:123.2px;font-size:12px;line-height:15.6px;color:#e4e4e4;left:597.2px;letter-spacing:0.18px;">community-copy</div><div class="t" style="top:157.68px;font-size:10.5px;line-height:13.65px;color:#7d7d7d;left:522.9px;letter-spacing:0.33px;">fix: format &amp; lint [skip ci] (#413)</div><div class="t" style="top:175.28px;font-size:10.5px;line-height:13.65px;color:#7d7d7d;left:522.9px;letter-spacing:0.33px;">10 hours ago by danilowoz</div><div class="t" style="top:228.08px;font-size:8.8px;line-height:11.44px;color:#727272;left:522.9px;letter-spacing:0.25px;">2 commits behind main</div><svg style="left:738.5px;top:223.7px;" width="18.6" height="18.6" viewBox="0 0 18.6 18.6"><circle cx="9.3" cy="9.3" r="8.3" fill="#15151f" stroke="#6a5fc8" stroke-width="1.3"/><clipPath id="av4"><circle cx="9.3" cy="9.3" r="7.4"/></clipPath><g clip-path="url(#av4)"><ellipse cx="9.3" cy="18.02" rx="7.14" ry="4.57" fill="#0c0c12"/><ellipse cx="9.63" cy="8.30" rx="3.32" ry="4.15" fill="#5a5a66"/><path d="M5.81 8.30q-0.66 -5.15 3.82 -5.15q4.15 0 3.65 5.15q-1.00 -2.49 -3.65 -2.49q-2.82 0 -3.82 2.49z" fill="#0c0c12"/><path d="M6.81 9.71q2.82 1.83 5.64 0v1.00q-2.82 4.15 -5.64 0z" fill="#0c0c12" opacity=".7"/></g></svg><div class="t" style="top:286.63px;font-size:11.8px;line-height:15.34px;color:#8f8f8f;left:229.4px;letter-spacing:0.15px;">Projects</div><div style="left:229.5px;top:314.20000000000005px;width:269.5px;height:157px;background:#1a1a1a;border-radius:9px;"></div><div style="left:505.29999999999995px;top:314.20000000000005px;width:269.3px;height:157px;background:#1a1a1a;border-radius:9px;"></div><div class="t" style="top:334.4px;font-size:12px;line-height:15.6px;color:#e4e4e4;left:247.3px;letter-spacing:0.18px;">excalidraw</div><div class="t" style="top:353.38px;font-size:8.8px;line-height:11.44px;color:#7d7d7d;left:247.3px;letter-spacing:0.22px;">updated 2 hours ago</div><div class="t" style="top:382.68px;font-size:10.5px;line-height:13.65px;color:#7d7d7d;left:247.3px;letter-spacing:0.33px;">Virtual whiteboard for sketching hand-drawn</div><div class="t" style="top:396.07px;font-size:10.5px;line-height:13.65px;color:#7d7d7d;left:247.3px;letter-spacing:0.33px;">like diagrams</div><div style="left:247.29999999999995px;top:436px;width:38.5px;height:16.8px;border:1px solid #5c5c5c;border-radius:9px;"></div><div class="t" style="top:439.28px;font-size:8.8px;line-height:11.44px;color:#8f8f8f;left:253.3px;letter-spacing:0.2px;">Public</div><svg style="left:298.5px;top:440.79999999999995px;" width="11.4" height="8.5" viewBox="0 0 12 9"><g fill="none" stroke="#8a8a8a" stroke-width="1.25"><path d="M0.500 1.700h2.600l3.600 4.800h3.600"/><path d="M6 1.700h4.500"/><path d="M8.300 4.300l2.200 2.200-2.200 2.200"/></g></svg><div class="t" style="top:439.25px;font-size:9px;line-height:11.7px;color:#8a8a8a;left:313px;">6</div><svg style="left:438.7px;top:434.7px;" width="18.6" height="18.6" viewBox="0 0 18.6 18.6"><circle cx="9.3" cy="9.3" r="8.3" fill="#6a6a6a" stroke="#d98a3a" stroke-width="1.3"/><clipPath id="av5"><circle cx="9.3" cy="9.3" r="7.4"/></clipPath><g clip-path="url(#av5)"><ellipse cx="9.3" cy="18.02" rx="7.14" ry="4.57" fill="#242424"/><ellipse cx="9.63" cy="8.30" rx="3.32" ry="4.15" fill="#b8b8b8"/><path d="M5.81 8.30q-0.66 -5.15 3.82 -5.15q4.15 0 3.65 5.15q-1.00 -2.49 -3.65 -2.49q-2.82 0 -3.82 2.49z" fill="#242424"/><path d="M6.81 9.71q2.82 1.83 5.64 0v1.00q-2.82 4.15 -5.64 0z" fill="#242424" opacity=".7"/></g></svg><svg style="left:462.7px;top:434.7px;" width="18.6" height="18.6" viewBox="0 0 18.6 18.6"><circle cx="9.3" cy="9.3" r="8.3" fill="#d0dde6" stroke="#3a9ad8" stroke-width="1.3"/><clipPath id="av6"><circle cx="9.3" cy="9.3" r="7.4"/></clipPath><g clip-path="url(#av6)"><ellipse cx="9.3" cy="18.02" rx="7.14" ry="4.57" fill="#20242c"/><ellipse cx="9.63" cy="8.30" rx="3.32" ry="4.15" fill="#2a2f3a"/><path d="M5.81 8.30q-0.66 -5.15 3.82 -5.15q4.15 0 3.65 5.15q-1.00 -2.49 -3.65 -2.49q-2.82 0 -3.82 2.49z" fill="#20242c"/><path d="M6.81 9.71q2.82 1.83 5.64 0v1.00q-2.82 4.15 -5.64 0z" fill="#20242c" opacity=".7"/></g></svg><div class="t" style="top:334.4px;font-size:12px;line-height:15.6px;color:#e4e4e4;left:522.9px;letter-spacing:0.18px;">sandpack</div><div class="t" style="top:353.38px;font-size:8.8px;line-height:11.44px;color:#7d7d7d;left:522.9px;letter-spacing:0.22px;">updated 10 hours ago</div><div class="t" style="top:382.68px;font-size:10.5px;line-height:13.65px;color:#7d7d7d;left:522.9px;letter-spacing:0.33px;">A component toolkit for creating live-running</div><div class="t" style="top:396.07px;font-size:10.5px;line-height:13.65px;color:#7d7d7d;left:522.9px;letter-spacing:0.33px;">code editing experiences.</div><div style="left:522.9000000000001px;top:436px;width:38.5px;height:16.8px;border:1px solid #5c5c5c;border-radius:9px;"></div><div class="t" style="top:439.28px;font-size:8.8px;line-height:11.44px;color:#8f8f8f;left:528.9px;letter-spacing:0.2px;">Public</div><svg style="left:574px;top:440.79999999999995px;" width="11.4" height="8.5" viewBox="0 0 12 9"><g fill="none" stroke="#8a8a8a" stroke-width="1.25"><path d="M0.500 1.700h2.600l3.600 4.800h3.600"/><path d="M6 1.700h4.500"/><path d="M8.300 4.300l2.200 2.200-2.200 2.200"/></g></svg><div class="t" style="top:439.25px;font-size:9px;line-height:11.7px;color:#8a8a8a;left:588.5px;">66</div><svg style="left:612.5px;top:439px;" width="10" height="11" viewBox="0 0 10 11"><g fill="none" stroke="#8a8a8a" stroke-width="1"><circle cx="2.500" cy="2.200" r="1.400"/><circle cx="2.500" cy="8.800" r="1.400"/><circle cx="7.800" cy="8.800" r="1.400"/><path d="M2.500 3.600v3.800M7.800 7.400V4a1.500 1.500 0 0 0-1.500-1.500H5M6 1l-1.300 1.500L6 4"/></g></svg><div class="t" style="top:439.25px;font-size:9px;line-height:11.7px;color:#8a8a8a;left:627.3px;">17</div><svg style="left:690.7px;top:434.7px;" width="18.6" height="18.6" viewBox="0 0 18.6 18.6"><circle cx="9.3" cy="9.3" r="8.3" fill="#c2c8b8" stroke="#b9d05a" stroke-width="1.3"/><clipPath id="av7"><circle cx="9.3" cy="9.3" r="7.4"/></clipPath><g clip-path="url(#av7)"><ellipse cx="9.3" cy="18.02" rx="7.14" ry="4.57" fill="#2a2a2a"/><ellipse cx="9.63" cy="8.30" rx="3.32" ry="4.15" fill="#e6e2d8"/><path d="M5.81 8.30q-0.66 -5.15 3.82 -5.15q4.15 0 3.65 5.15q-1.00 -2.49 -3.65 -2.49q-2.82 0 -3.82 2.49z" fill="#2a2a2a"/><path d="M6.81 9.71q2.82 1.83 5.64 0v1.00q-2.82 4.15 -5.64 0z" fill="#2a2a2a" opacity=".7"/></g></svg><svg style="left:714.7px;top:434.7px;" width="18.6" height="18.6" viewBox="0 0 18.6 18.6"><circle cx="9.3" cy="9.3" r="8.3" fill="#f4f4f4" stroke="#e09a3a" stroke-width="1.3"/><clipPath id="av8"><circle cx="9.3" cy="9.3" r="7.4"/></clipPath><g clip-path="url(#av8)"><ellipse cx="9.3" cy="18.02" rx="7.14" ry="4.57" fill="#17171c"/><ellipse cx="9.63" cy="8.30" rx="3.32" ry="4.15" fill="#e8d8cc"/><path d="M5.81 8.30q-0.66 -5.15 3.82 -5.15q4.15 0 3.65 5.15q-1.00 -2.49 -3.65 -2.49q-2.82 0 -3.82 2.49z" fill="#17171c"/><path d="M6.81 9.71q2.82 1.83 5.64 0v1.00q-2.82 4.15 -5.64 0z" fill="#17171c" opacity=".7"/></g></svg><div style="left:739.5px;top:435.5px;width:17px;height:17px;background:#333;border-radius:50%;"></div><div class="t" style="top:439.93px;font-size:7.5px;line-height:9.75px;color:#9a9a9a;left:745.8px;font-weight:700;">2</div><div class="t" style="top:497.83px;font-size:11.8px;line-height:15.34px;color:#8f8f8f;left:229.4px;letter-spacing:0.15px;">Sandboxes</div><div style="left:229.5px;top:525.5px;width:271.5px;height:60px;background:#1a1a1a;border-radius:9px;"></div><div style="left:512px;top:525.5px;width:262.6px;height:60px;background:#1a1a1a;border-radius:9px 0 0 9px;"></div><div style="left:247.29999999999995px;top:543px;width:39px;height:30px;background:#111;border-radius:3px;"></div><div style="left:255px;top:550.5px;width:24px;height:14px;border:1.500px solid #a9c25a;"></div><div class="t" style="top:550.85px;font-size:11px;line-height:14.3px;color:#8a8a8a;left:310px;letter-spacing:0.18px;">nextjs-online-ide</div><div style="left:530px;top:543px;width:39.5px;height:30px;background:#fff;border-radius:3px;"></div><div class="t" style="top:547.77px;font-size:6.5px;line-height:8.45px;color:#111;left:543px;">New</div><div class="t" style="top:550.85px;font-size:11px;line-height:14.3px;color:#8a8a8a;left:589px;letter-spacing:0.18px;">☆  vanilla-template</div></div><div style="left:1px;top:1356px;width:110px;height:37px;background:linear-gradient(180deg,#ffffff 0%,#f2f2f2 14%,#e2e2e2 34%,#cdcdcd 52%,#b8b8b8 70%,#a3a3a3 88%,#9c9c9c 100%);"></div><div style="left:1190px;top:1356px;width:112px;height:37px;background:linear-gradient(180deg,#ffffff 0%,#f2f2f2 14%,#e2e2e2 34%,#cdcdcd 52%,#b8b8b8 70%,#a3a3a3 88%,#9c9c9c 100%);"></div><div style="left:1px;top:1392.5px;width:1301px;height:40.5px;background:linear-gradient(180deg,#5a5a5a 0%,#3e3e3e 4%,#303030 22%,#212121 42%,#1a1a1a 60%,#1a1a1a 78%,#2b2b2b 81%,#2a2a2a 100%);border-radius:3px 3px 10px 10px / 3px 3px 14px 14px;"></div><div style="left:8px;top:1394px;width:22px;height:22px;background:radial-gradient(ellipse at 50% 40%,#5a5a5a 0%,#333 45%,rgba(40,40,40,0) 75%);"></div><div style="left:1274px;top:1394px;width:22px;height:22px;background:radial-gradient(ellipse at 50% 40%,#5a5a5a 0%,#333 45%,rgba(40,40,40,0) 75%);"></div><div style="left:535px;top:1392.7px;width:232.5px;height:16px;background:linear-gradient(180deg,#4a4a4a,#575757 55%,#4c4c4c);border-radius:0 0 14px 14px / 0 0 16px 16px;box-shadow:inset 11px 0 7px -4px #121212, inset -11px 0 7px -4px #121212;"></div><div style="left:40px;top:1419px;width:1222px;height:6.5px;background:#1a1a1a;border-radius:0 0 14px 14px / 0 0 6px 6px;"></div><div style="left:106.3px;top:648px;width:1089.7px;height:745px;background:#000;border-radius:38px 38px 6px 6px / 38px 38px 30px 30px;box-shadow:inset 0 0 0 3px #000, inset 0 0 0 5px #131313;"></div><div style="left:110px;top:1365px;width:1083px;height:28px;background:linear-gradient(180deg,#0b0b0b,#0e0e0e);border-radius:0 0 6px 6px / 0 0 26px 26px;"></div><div id="lscr" style="left:131px;top:672px;width:1040px;height:675px;background:#151515;border-radius:14px 14px 0 0;overflow:hidden"><div style="left:-131px;top:-672px;width:2391px;height:1450px"><div style="left:587px;top:672px;width:128px;height:22.5px;background:#000;border-radius:0 0 8px 8px;"></div><svg style="left:137px;top:708px;" width="12" height="10" viewBox="0 0 12 10"><path d="M1 2h10M1 5h10M1 8h7" stroke="#7c7c7c" stroke-width=".85"/></svg><div style="left:160px;top:706.5px;width:107.5px;height:13.5px;background:#2b2b2b;border-radius:7px;"></div><div class="t" style="top:708.01px;font-size:8.9px;line-height:11.57px;color:#e2e2e2;left:166px;letter-spacing:0.22px;">3 commits behind main</div><div class="t" style="top:707.76px;font-size:9.6px;line-height:12.48px;color:#9a9a9a;left:593.5px;letter-spacing:0.2px;">excalidraw</div><svg style="left:648.5px;top:709.3px;" width="12" height="9" viewBox="0 0 12 9"><g fill="none" stroke="#9a9a9a" stroke-width="1.100"><path d="M0.500 1.700h2.600l3.600 4.800h3.600M6 1.700h4.500M8.300 4.300l2.200 2.200-2.200 2.200"/></g></svg><div class="t" style="top:707.76px;font-size:9.6px;line-height:12.48px;color:#9a9a9a;left:665px;letter-spacing:0.2px;">feature</div><svg style="left:700px;top:711.5px;" width="6" height="5" viewBox="0 0 6 5"><path d="M1 1.200l2 2 2-2" fill="none" stroke="#9a9a9a" stroke-width="1"/></svg><svg style="left:912px;top:707px;" width="13" height="13" viewBox="0 0 13 13"><path d="M6.500 1v11M1 6.500h11" stroke="#a8a8a8" stroke-width="1.100"/></svg><svg style="left:957.3px;top:703.7px;" width="18.6" height="18.6" viewBox="0 0 18.6 18.6"><circle cx="9.3" cy="9.3" r="8.3" fill="#d9d6e0" stroke="#8d7fe0" stroke-width="1.3"/><clipPath id="av9"><circle cx="9.3" cy="9.3" r="7.4"/></clipPath><g clip-path="url(#av9)"><ellipse cx="9.3" cy="18.02" rx="7.14" ry="4.57" fill="#26242c"/><ellipse cx="9.63" cy="8.30" rx="3.32" ry="4.15" fill="#efe9e4"/><path d="M5.81 8.30q-0.66 -5.15 3.82 -5.15q4.15 0 3.65 5.15q-1.00 -2.49 -3.65 -2.49q-2.82 0 -3.82 2.49z" fill="#26242c"/><path d="M6.81 9.71q2.82 1.83 5.64 0v1.00q-2.82 4.15 -5.64 0z" fill="#26242c" opacity=".7"/></g></svg><svg style="left:983.4px;top:703.7px;" width="18.6" height="18.6" viewBox="0 0 18.6 18.6"><circle cx="9.3" cy="9.3" r="8.3" fill="#c8d6dc" stroke="#3aa0dd" stroke-width="1.3"/><clipPath id="av10"><circle cx="9.3" cy="9.3" r="7.4"/></clipPath><g clip-path="url(#av10)"><ellipse cx="9.3" cy="18.02" rx="7.14" ry="4.57" fill="#30363c"/><ellipse cx="9.63" cy="8.30" rx="3.32" ry="4.15" fill="#ecdcd0"/><path d="M5.81 8.30q-0.66 -5.15 3.82 -5.15q4.15 0 3.65 5.15q-1.00 -2.49 -3.65 -2.49q-2.82 0 -3.82 2.49z" fill="#30363c"/><path d="M6.81 9.71q2.82 1.83 5.64 0v1.00q-2.82 4.15 -5.64 0z" fill="#30363c" opacity=".7"/></g></svg><svg style="left:1009.4px;top:703.7px;" width="18.6" height="18.6" viewBox="0 0 18.6 18.6"><circle cx="9.3" cy="9.3" r="8.3" fill="#5a5048" stroke="#e8a23c" stroke-width="1.3"/><clipPath id="av11"><circle cx="9.3" cy="9.3" r="7.4"/></clipPath><g clip-path="url(#av11)"><ellipse cx="9.3" cy="18.02" rx="7.14" ry="4.57" fill="#1c1a18"/><ellipse cx="9.63" cy="8.30" rx="3.32" ry="4.15" fill="#d8c0a8"/><path d="M5.81 8.30q-0.66 -5.15 3.82 -5.15q4.15 0 3.65 5.15q-1.00 -2.49 -3.65 -2.49q-2.82 0 -3.82 2.49z" fill="#1c1a18"/><path d="M6.81 9.71q2.82 1.83 5.64 0v1.00q-2.82 4.15 -5.64 0z" fill="#1c1a18" opacity=".7"/></g></svg><div style="left:996px;top:715px;width:8px;height:8px;background:#1a1a1a;border-radius:2px;"></div><svg style="left:996.5px;top:715.5px;" width="7" height="7" viewBox="0 0 7 7"><path d="M5.500 .8v5.400L2 3.500z M1 2.300l1.200 1.200L1 4.700" fill="none" stroke="#3aa0f0" stroke-width="1"/></svg><div style="left:1023px;top:715px;width:7px;height:9px;background:#1a1a1a;border-radius:2px;"></div><div style="left:1024.5px;top:716px;width:4px;height:7px;border:0.8px solid #d8d8d8;border-radius:1px;"></div><div class="t" style="top:707.76px;font-size:9.6px;line-height:12.48px;color:#c4c4c4;left:1062.5px;letter-spacing:0.2px;">Share</div><div class="t" style="top:707.76px;font-size:9.6px;line-height:12.48px;color:#c4c4c4;left:1108px;letter-spacing:0.2px;">Open PR</div><svg style="left:1157px;top:711.5px;" width="6" height="5" viewBox="0 0 6 5"><path d="M1 1.200l2 2 2-2" fill="none" stroke="#9a9a9a" stroke-width="1"/></svg><svg style="left:137.5px;top:743.5px;" width="11" height="12" viewBox="0 0 11 12"><path d="M2 1.500h4.500l3 3v6a.6.6 0 0 1-.6.6H2a.6.6 0 0 1-.6-.6v-8.400a.6.6 0 0 1 .6-.6zM6.300 1.700v3h3" fill="none" stroke="#a8a8a8" stroke-width="1"/></svg><svg style="left:160px;top:743.5px;" width="12" height="12" viewBox="0 0 12 12"><g fill="none" stroke="#a8a8a8" stroke-width="1.100"><circle cx="5" cy="5" r="3.600"/><path d="M7.700 7.700l3 3"/></g></svg><svg style="left:184px;top:743px;" width="13" height="13" viewBox="0 0 13 13"><g fill="none" stroke="#a8a8a8" stroke-width="1"><circle cx="3.500" cy="4" r="1.700"/><circle cx="8" cy="9" r="2"/><path d="M4.800 5.200l2 2.300M3.500 5.700v4.500h2.500"/></g><circle cx="9.500" cy="2.500" r="1.300" fill="#8d7fe0"/></svg><svg style="left:136.3px;top:777.2px;" width="14" height="11.5" viewBox="0 0 14 11.5"><path d="M.6 2.300a1 1 0 0 1 1-1h2.900l1.300 1.300h4.700a1 1 0 0 1 1 1v.900H.6z" fill="#a0a0a0"/><path d="M.6 5.400a.9.9 0 0 1 .9-.9h9.800a.9.9 0 0 1 .9.9v4a1 1 0 0 1-1 1H1.600a1 1 0 0 1-1-1z" fill="#a0a0a0"/></svg><div class="t" style="top:777.67px;font-size:9.9px;line-height:12.87px;color:#9c9c9c;left:154.5px;letter-spacing:0.1px;">.codesandbox</div><svg style="left:153.0px;top:796.3px;" width="11" height="12" viewBox="0 0 11 12"><path d="M2 1.500h4.500l3 3v6a.6.6 0 0 1-.6.6H2a.6.6 0 0 1-.6-.6v-8.400a.6.6 0 0 1 .6-.6zM6.300 1.700v3h3" fill="none" stroke="#9a9a9a" stroke-width="1"/></svg><div class="t" style="top:796.47px;font-size:9.9px;line-height:12.87px;color:#9c9c9c;left:170.5px;letter-spacing:0.1px;">project.json</div><svg style="left:153.0px;top:815.1px;" width="11" height="12" viewBox="0 0 11 12"><path d="M2 1.500h4.500l3 3v6a.6.6 0 0 1-.6.6H2a.6.6 0 0 1-.6-.6v-8.400a.6.6 0 0 1 .6-.6zM6.300 1.700v3h3" fill="none" stroke="#9a9a9a" stroke-width="1"/></svg><div class="t" style="top:815.27px;font-size:9.9px;line-height:12.87px;color:#9c9c9c;left:170.5px;letter-spacing:0.1px;">workspace.json</div><svg style="left:136.3px;top:833.7px;" width="14" height="11.5" viewBox="0 0 14 11.5"><path d="M.6 2.300a1 1 0 0 1 1-1h2.900l1.300 1.300h4.700a1 1 0 0 1 1 1v5.800a1 1 0 0 1-1 1H1.600a1 1 0 0 1-1-1z" fill="#a0a0a0"/></svg><div class="t" style="top:834.17px;font-size:9.9px;line-height:12.87px;color:#9c9c9c;left:154.5px;letter-spacing:0.1px;">public</div><svg style="left:136.3px;top:852.5px;" width="14" height="11.5" viewBox="0 0 14 11.5"><path d="M.6 2.300a1 1 0 0 1 1-1h2.900l1.300 1.300h4.700a1 1 0 0 1 1 1v5.800a1 1 0 0 1-1 1H1.600a1 1 0 0 1-1-1z" fill="#a0a0a0"/></svg><div class="t" style="top:852.97px;font-size:9.9px;line-height:12.87px;color:#9c9c9c;left:154.5px;letter-spacing:0.1px;">scripts</div><svg style="left:136.3px;top:871.4px;" width="14" height="11.5" viewBox="0 0 14 11.5"><path d="M.6 2.300a1 1 0 0 1 1-1h2.900l1.300 1.300h4.700a1 1 0 0 1 1 1v.900H.6z" fill="#a0a0a0"/><path d="M.6 5.400a.9.9 0 0 1 .9-.9h9.800a.9.9 0 0 1 .9.9v4a1 1 0 0 1-1 1H1.600a1 1 0 0 1-1-1z" fill="#a0a0a0"/></svg><div class="t" style="top:871.87px;font-size:9.9px;line-height:12.87px;color:#9c9c9c;left:154.5px;letter-spacing:0.1px;">src</div><svg style="left:151.8px;top:890.3px;" width="14" height="11.5" viewBox="0 0 14 11.5"><path d="M.6 2.300a1 1 0 0 1 1-1h2.900l1.300 1.300h4.700a1 1 0 0 1 1 1v5.800a1 1 0 0 1-1 1H1.600a1 1 0 0 1-1-1z" fill="#a0a0a0"/></svg><div class="t" style="top:890.77px;font-size:9.9px;line-height:12.87px;color:#9c9c9c;left:170.5px;letter-spacing:0.1px;">actions</div><svg style="left:151.8px;top:909.2px;" width="14" height="11.5" viewBox="0 0 14 11.5"><path d="M.6 2.300a1 1 0 0 1 1-1h2.900l1.300 1.300h4.700a1 1 0 0 1 1 1v5.800a1 1 0 0 1-1 1H1.600a1 1 0 0 1-1-1z" fill="#a0a0a0"/></svg><div class="t" style="top:909.67px;font-size:9.9px;line-height:12.87px;color:#9c9c9c;left:170.5px;letter-spacing:0.1px;">components</div><svg style="left:151.8px;top:928.1px;" width="14" height="11.5" viewBox="0 0 14 11.5"><path d="M.6 2.300a1 1 0 0 1 1-1h2.900l1.300 1.300h4.700a1 1 0 0 1 1 1v5.800a1 1 0 0 1-1 1H1.600a1 1 0 0 1-1-1z" fill="#a0a0a0"/></svg><div class="t" style="top:928.57px;font-size:9.9px;line-height:12.87px;color:#9c9c9c;left:170.5px;letter-spacing:0.1px;">css</div><svg style="left:151.8px;top:946.9px;" width="14" height="11.5" viewBox="0 0 14 11.5"><path d="M.6 2.300a1 1 0 0 1 1-1h2.900l1.300 1.300h4.700a1 1 0 0 1 1 1v5.800a1 1 0 0 1-1 1H1.600a1 1 0 0 1-1-1z" fill="#a0a0a0"/></svg><div class="t" style="top:947.37px;font-size:9.9px;line-height:12.87px;color:#9c9c9c;left:170.5px;letter-spacing:0.1px;">data</div><svg style="left:151.8px;top:965.8px;" width="14" height="11.5" viewBox="0 0 14 11.5"><path d="M.6 2.300a1 1 0 0 1 1-1h2.900l1.300 1.300h4.700a1 1 0 0 1 1 1v5.800a1 1 0 0 1-1 1H1.600a1 1 0 0 1-1-1z" fill="#a0a0a0"/></svg><div class="t" style="top:966.27px;font-size:9.9px;line-height:12.87px;color:#9c9c9c;left:170.5px;letter-spacing:0.1px;">element</div><svg style="left:151.8px;top:984.7px;" width="14" height="11.5" viewBox="0 0 14 11.5"><path d="M.6 2.300a1 1 0 0 1 1-1h2.900l1.300 1.300h4.700a1 1 0 0 1 1 1v5.800a1 1 0 0 1-1 1H1.600a1 1 0 0 1-1-1z" fill="#a0a0a0"/></svg><div class="t" style="top:985.17px;font-size:9.9px;line-height:12.87px;color:#9c9c9c;left:170.5px;letter-spacing:0.1px;">excalidraw-app</div><svg style="left:151.8px;top:1003.7px;" width="14" height="11.5" viewBox="0 0 14 11.5"><path d="M.6 2.300a1 1 0 0 1 1-1h2.900l1.300 1.300h4.700a1 1 0 0 1 1 1v5.800a1 1 0 0 1-1 1H1.600a1 1 0 0 1-1-1z" fill="#a0a0a0"/></svg><div class="t" style="top:1004.17px;font-size:9.9px;line-height:12.87px;color:#9c9c9c;left:170.5px;letter-spacing:0.1px;">hooks</div><svg style="left:151.8px;top:1022.6px;" width="14" height="11.5" viewBox="0 0 14 11.5"><path d="M.6 2.300a1 1 0 0 1 1-1h2.900l1.300 1.300h4.700a1 1 0 0 1 1 1v5.800a1 1 0 0 1-1 1H1.600a1 1 0 0 1-1-1z" fill="#a0a0a0"/></svg><div class="t" style="top:1023.07px;font-size:9.9px;line-height:12.87px;color:#9c9c9c;left:170.5px;letter-spacing:0.1px;">locales</div><svg style="left:151.8px;top:1041.5px;" width="14" height="11.5" viewBox="0 0 14 11.5"><path d="M.6 2.300a1 1 0 0 1 1-1h2.900l1.300 1.300h4.700a1 1 0 0 1 1 1v5.800a1 1 0 0 1-1 1H1.600a1 1 0 0 1-1-1z" fill="#a0a0a0"/></svg><div class="t" style="top:1041.96px;font-size:9.9px;line-height:12.87px;color:#9c9c9c;left:170.5px;letter-spacing:0.1px;">packages</div><svg style="left:151.8px;top:1060.4px;" width="14" height="11.5" viewBox="0 0 14 11.5"><path d="M.6 2.300a1 1 0 0 1 1-1h2.900l1.300 1.300h4.700a1 1 0 0 1 1 1v.900H.6z" fill="#a0a0a0"/><path d="M.6 5.400a.9.9 0 0 1 .9-.9h9.800a.9.9 0 0 1 .9.9v4a1 1 0 0 1-1 1H1.600a1 1 0 0 1-1-1z" fill="#a0a0a0"/></svg><div class="t" style="top:1060.87px;font-size:9.9px;line-height:12.87px;color:#9c9c9c;left:170.5px;letter-spacing:0.1px;">renderer</div><div class="t m" style="top:1079.51px;font-size:10.3px;line-height:13.39px;color:#9a9a9a;left:169px;letter-spacing:-0.6px;">/*</div><div class="t" style="top:1079.57px;font-size:9.9px;line-height:12.87px;color:#9c9c9c;left:186.3px;letter-spacing:0.1px;">index.js</div><div class="t m" style="top:1099.9px;font-size:10.3px;line-height:13.39px;color:#9a9a9a;left:169px;letter-spacing:-0.6px;">/*</div><div class="t" style="top:1099.96px;font-size:9.9px;line-height:12.87px;color:#9c9c9c;left:186.3px;letter-spacing:0.1px;">renderElement.ts</div><div class="t m" style="top:1120.4px;font-size:10.3px;line-height:13.39px;color:#9a9a9a;left:169px;letter-spacing:-0.6px;">/*</div><div class="t" style="top:1120.46px;font-size:9.9px;line-height:12.87px;color:#e8e8e8;left:186.3px;letter-spacing:0.1px;">renderScene.ts</div><div class="t m" style="top:1140.61px;font-size:10.3px;line-height:13.39px;color:#9a9a9a;left:169px;letter-spacing:-0.6px;">/*</div><div class="t" style="top:1140.66px;font-size:9.9px;line-height:12.87px;color:#9c9c9c;left:186.3px;letter-spacing:0.1px;">roundReact.ts</div><svg style="left:151.8px;top:1159.1px;" width="14" height="11.5" viewBox="0 0 14 11.5"><path d="M.6 2.300a1 1 0 0 1 1-1h2.900l1.300 1.300h4.700a1 1 0 0 1 1 1v5.800a1 1 0 0 1-1 1H1.600a1 1 0 0 1-1-1z" fill="#a0a0a0"/></svg><div class="t" style="top:1159.57px;font-size:9.9px;line-height:12.87px;color:#9c9c9c;left:170.5px;letter-spacing:0.1px;">scene</div><div class="t m" style="top:1178.51px;font-size:10.3px;line-height:13.39px;color:#9a9a9a;left:152.5px;letter-spacing:-0.6px;">/*</div><div class="t" style="top:1178.57px;font-size:9.9px;line-height:12.87px;color:#9c9c9c;left:170.5px;letter-spacing:0.1px;">align.ts</div><div class="t m" style="top:1197.4px;font-size:10.3px;line-height:13.39px;color:#9a9a9a;left:152.5px;letter-spacing:-0.6px;">/*</div><div class="t" style="top:1197.46px;font-size:9.9px;line-height:12.87px;color:#9c9c9c;left:170.5px;letter-spacing:0.1px;">analytics.ts</div><div class="t m" style="top:1216.31px;font-size:10.3px;line-height:13.39px;color:#9a9a9a;left:152.5px;letter-spacing:-0.6px;">/*</div><div class="t" style="top:1216.37px;font-size:9.9px;line-height:12.87px;color:#9c9c9c;left:170.5px;letter-spacing:0.1px;">appState.ts</div><div class="t m" style="top:1235.31px;font-size:10.3px;line-height:13.39px;color:#9a9a9a;left:152.5px;letter-spacing:-0.6px;">/*</div><div class="t" style="top:1235.37px;font-size:9.9px;line-height:12.87px;color:#9c9c9c;left:170.5px;letter-spacing:0.1px;">bug-issue-template.ts</div><div class="t m" style="top:1254.11px;font-size:10.3px;line-height:13.39px;color:#9a9a9a;left:152.5px;letter-spacing:-0.6px;">/*</div><div class="t" style="top:1254.16px;font-size:9.9px;line-height:12.87px;color:#9c9c9c;left:170.5px;letter-spacing:0.1px;">charts.ts</div><div class="t m" style="top:1272.81px;font-size:10.3px;line-height:13.39px;color:#9a9a9a;left:152.5px;letter-spacing:-0.6px;">/*</div><div class="t" style="top:1272.87px;font-size:9.9px;line-height:12.87px;color:#9c9c9c;left:170.5px;letter-spacing:0.1px;">charts.ts</div><div class="t m" style="top:1291.7px;font-size:10.3px;line-height:13.39px;color:#9a9a9a;left:152.5px;letter-spacing:-0.6px;">/*</div><div class="t" style="top:1291.76px;font-size:9.9px;line-height:12.87px;color:#9c9c9c;left:170.5px;letter-spacing:0.1px;">appState.ts</div><div style="left:137px;top:1321px;width:135px;height:19.5px;background:#2a2a2a;border-radius:2px;"></div><div class="t" style="top:1325.48px;font-size:8.8px;line-height:11.44px;color:#a6a6a6;left:163px;letter-spacing:0.15px;">Open in VS Code</div><svg style="left:237px;top:1326px;" width="9" height="9" viewBox="0 0 9 9"><path d="M3.800 1.500H1.500v6h6V5.200M5 1.200h2.800V4M7.600 1.400L4.200 4.800" fill="none" stroke="#a0a0a0" stroke-width=".9"/></svg><div class="t" style="top:742.76px;font-size:9.6px;line-height:12.48px;color:#8a8a8a;left:326px;letter-spacing:0.2px;">index.ts</div><div class="t" style="top:742.76px;font-size:9.6px;line-height:12.48px;color:#e8e8e8;left:383px;letter-spacing:0.2px;">renderScene.js</div><div style="left:329px;top:1166.8px;width:399.5px;height:17px;background:#1e1e1e;"></div><pre class="m" style="left:282px;top:765.77px;width:30.500px;text-align:right;font-size:7.300px;line-height:17.45px;color:#565656">56
57
58
59
60
61
62
63
64
65
66
67
68
69
70
71
72
73
74
75
76
77
78
79
80
81
82
83
84
85
86</pre><pre class="m csb" style="left:328.700px;top:765.77px;font-size:9.65px;line-height:17.45px;color:#ececec"><i class="k">const</i> <i class="f">strokeRectWithRotation</i> <i class="o">=</i> <i class="q">(</i>
  context<i class="q">:</i> <i class="k">CanvasRenderingContext2D</i><i class="p">,</i>
  x<i class="q">:</i> <i class="k">number</i><i class="p">,</i>
  y<i class="q">:</i> <i class="k">number</i><i class="p">,</i>
  width<i class="q">:</i> <i class="k">number</i><i class="p">,</i>
  height<i class="q">:</i> <i class="k">number</i><i class="p">,</i>
  cx<i class="q">:</i> <i class="k">number</i><i class="p">,</i>
  cy<i class="q">:</i> <i class="k">number</i><i class="p">,</i>
  angle<i class="q">:</i> <i class="k">number</i><i class="p">,</i>
  fill<i class="q">:</i> <i class="k">boolean</i> <i class="o">=</i> <i class="k">false</i><i class="p">,</i>
<i class="q">)</i> <i class="k">=&gt;</i> <i class="p">{</i>
  <i class="f">context.save</i><i class="q">(</i><i class="q">)</i><i class="q">;</i>
  <i class="f">context.translate</i><i class="q">(</i>cx<i class="p">,</i> cy<i class="q">)</i><i class="q">;</i>
  <i class="f">context.rotate</i><i class="q">(</i>angle<i class="q">)</i><i class="q">;</i>
  <i class="k">if</i> <i class="q">(</i>fill<i class="q">)</i> <i class="p">{</i>
    <i class="f">context.fillRect</i><i class="q">(</i>x <i class="p">-</i> cx<i class="p">,</i> y <i class="p">-</i> cy<i class="p">,</i> width<i class="p">,</i> height<i class="q">)</i><i class="q">;</i>
  <i class="p">}</i>
  <i class="f">context.strokeRect</i><i class="q">(</i>x <i class="p">-</i> cx<i class="p">,</i> y <i class="p">-</i> cy<i class="p">,</i> width<i class="p">,</i> height<i class="q">)</i><i class="q">;</i>
  <i class="f">context.restore</i><i class="q">(</i><i class="q">)</i><i class="q">;</i>
<i class="p">}</i><i class="q">;</i>

<i class="k">const</i> <i class="f">strokeDiamondWithRotation</i> <i class="o">=</i> <i class="q">(</i>
  context<i class="q">:</i> <i class="k">CanvasRenderingContext2D</i><i class="p">,</i>
  width<i class="q">:</i> <i class="k">number</i><i class="p">,</i>
  height<i class="q">:</i> <i class="k">number</i><i class="p">,</i>
  cx<i class="q">:</i> <i class="k">number</i><i class="p">,</i>
  cy<i class="q">:</i> <i class="k">number</i><i class="p">,</i>
  angle<i class="q">:</i> <i class="k">number</i><i class="p">,</i>
<i class="q">)</i> <i class="k">=&gt;</i> <i class="p">{</i>
  <i class="f">context.save</i><i class="q">(</i><i class="q">)</i><i class="q">;</i>
  <i class="f">context.translate</i><i class="q">(</i>cx<i class="p">,</i> cy<i class="q">)</i><i class="q">;</i>
  <i class="f">context.rotate</i><i class="q">(</i>angle<i class="q">)</i><i class="q">;</i>
  <i class="f">context.beginPath</i><i class="q">(</i><i class="q">)</i><i class="q">;</i>
  <i class="f">context.moveTo</i><i class="q">(</i>0<i class="p">,</i> height <i class="p">/</i> 2<i class="q">)</i><i class="q">;</i></pre><svg style="left:283.2px;top:906.7px;" width="13.6" height="13.6" viewBox="0 0 13.6 13.6"><circle cx="6.8" cy="6.8" r="5.8" fill="#8a8074" stroke="#e8a23c" stroke-width="1.3"/><clipPath id="av12"><circle cx="6.8" cy="6.8" r="4.8999999999999995"/></clipPath><g clip-path="url(#av12)"><ellipse cx="6.8" cy="12.89" rx="4.99" ry="3.19" fill="#2a2622"/><ellipse cx="7.03" cy="6.10" rx="2.32" ry="2.90" fill="#e0d0bc"/><path d="M4.36 6.10q-0.46 -3.60 2.67 -3.60q2.90 0 2.55 3.60q-0.70 -1.74 -2.55 -1.74q-1.97 0 -2.67 1.74z" fill="#2a2622"/><path d="M5.06 7.09q1.97 1.28 3.94 0v0.70q-1.97 2.90 -3.94 0z" fill="#2a2622" opacity=".7"/></g></svg><svg style="left:283.2px;top:1028.7px;" width="13.6" height="13.6" viewBox="0 0 13.6 13.6"><circle cx="6.8" cy="6.8" r="5.8" fill="#d0dce0" stroke="#3aa0dd" stroke-width="1.3"/><clipPath id="av13"><circle cx="6.8" cy="6.8" r="4.8999999999999995"/></clipPath><g clip-path="url(#av13)"><ellipse cx="6.8" cy="12.89" rx="4.99" ry="3.19" fill="#3a3a40"/><ellipse cx="7.03" cy="6.10" rx="2.32" ry="2.90" fill="#efe2d6"/><path d="M4.36 6.10q-0.46 -3.60 2.67 -3.60q2.90 0 2.55 3.60q-0.70 -1.74 -2.55 -1.74q-1.97 0 -2.67 1.74z" fill="#3a3a40"/><path d="M5.06 7.09q1.97 1.28 3.94 0v0.70q-1.97 2.90 -3.94 0z" fill="#3a3a40" opacity=".7"/></g></svg><div style="left:420.3px;top:907px;width:1.6px;height:13.5px;background:#e8923a;"></div><div style="left:531.8px;top:1029px;width:1.5px;height:13.5px;background:#2f9bf0;"></div><div style="left:420.3px;top:1169px;width:1px;height:13px;background:#bdbdbd;"></div><div style="left:744.5px;top:739.5px;width:421.5px;height:297px;background:#ffffff;border-radius:4px;"></div><div style="left:744.5px;top:739.5px;width:421.5px;height:28.5px;background:#2a2a2a;border-radius:4px 4px 0 0;"></div><svg style="left:754px;top:748px;" width="9" height="12" viewBox="0 0 9 12"><path d="M6.500 1.500L2 6l4.500 4.500" fill="none" stroke="#a0a0a0" stroke-width="1.100"/></svg><svg style="left:771px;top:748px;" width="9" height="12" viewBox="0 0 9 12"><path d="M2.500 1.500L7 6l-4.500 4.500" fill="none" stroke="#a0a0a0" stroke-width="1.100"/></svg><svg style="left:788px;top:747.5px;" width="12" height="12" viewBox="0 0 12 12"><g fill="none" stroke="#a0a0a0" stroke-width="1.100"><path d="M10.300 6.200a4.300 4.300 0 1 1-1.600-3.400"/><path d="M9.500 .8v2.600H6.900"/></g></svg><div class="t" style="top:749.04px;font-size:8.4px;line-height:10.92px;color:#8f8f8f;left:811px;letter-spacing:0.25px;">https://kkcpd.csb.app/</div><svg style="left:1123px;top:748px;" width="13" height="11" viewBox="0 0 13 11"><g fill="none" stroke="#a8a8a8" stroke-width="1"><rect x="1" y="4" width="7" height="5.500" rx="1.200"/><path d="M4 4V2.700a1.200 1.200 0 0 1 1.200-1.200H10a1.200 1.200 0 0 1 1.200 1.200V6a1.200 1.200 0 0 1-1.200 1.200H8"/></g></svg><svg style="left:1145.5px;top:752px;" width="11" height="4" viewBox="0 0 11 4"><g fill="#a8a8a8"><circle cx="1.500" cy="2" r="1"/><circle cx="5.500" cy="2" r="1"/><circle cx="9.500" cy="2" r="1"/></g></svg><svg style="left:740px;top:765px" width="430" height="275" viewBox="0 0 2267 1450"><rect x="22" y="15" width="2224" height="1416" fill="#ffffff"/><rect x="175" y="228" width="388" height="427" fill="#fbfbf7"/><rect x="580" y="292" width="348" height="436" fill="#fbfbf7"/><rect x="945" y="225" width="345" height="430" fill="#fbfbf7"/><rect x="1320" y="185" width="300" height="405" fill="#fbfbf7"/><rect x="1645" y="222" width="385" height="433" fill="#fbfbf7"/><rect x="295" y="775" width="825" height="656" fill="#fbfbf7"/><rect x="1155" y="722" width="740" height="709" fill="#fbfbf7"/><path d="M372 650L368 235" stroke="#b9c0ae" stroke-width="3" fill="none"/><path d="M370 600Q295 570 220 530" stroke="#c5cbbd" stroke-width="2" fill="none"/><circle cx="306" cy="574" r="3" fill="#d8dccb"/><circle cx="273" cy="552" r="3" fill="#d8dccb"/><circle cx="245" cy="549" r="3" fill="#d8dccb"/><path d="M370 600Q445 570 520 539" stroke="#c5cbbd" stroke-width="2" fill="none"/><circle cx="438" cy="568" r="3" fill="#e2d77a"/><circle cx="454" cy="563" r="3" fill="#cfd6c2"/><circle cx="484" cy="545" r="3" fill="#e2d77a"/><path d="M370 578Q298 548 227 501" stroke="#c5cbbd" stroke-width="2" fill="none"/><circle cx="318" cy="541" r="3" fill="#d8dccb"/><circle cx="279" cy="535" r="3" fill="#d8dccb"/><circle cx="249" cy="528" r="3" fill="#e2d77a"/><path d="M370 578Q442 548 513 511" stroke="#c5cbbd" stroke-width="2" fill="none"/><circle cx="420" cy="544" r="3" fill="#cfd6c2"/><circle cx="461" cy="532" r="3" fill="#d8dccb"/><circle cx="479" cy="525" r="3" fill="#d8dccb"/><path d="M370 556Q302 526 234 491" stroke="#c5cbbd" stroke-width="2" fill="none"/><circle cx="311" cy="524" r="3" fill="#cfd6c2"/><circle cx="283" cy="508" r="3" fill="#d8dccb"/><circle cx="254" cy="500" r="3" fill="#cfd6c2"/><path d="M370 556Q438 526 506 479" stroke="#c5cbbd" stroke-width="2" fill="none"/><circle cx="429" cy="528" r="3" fill="#cfd6c2"/><circle cx="458" cy="517" r="3" fill="#cfd6c2"/><circle cx="478" cy="499" r="3" fill="#d8dccb"/><path d="M370 534Q306 504 241 467" stroke="#c5cbbd" stroke-width="2" fill="none"/><circle cx="312" cy="505" r="3" fill="#d8dccb"/><circle cx="300" cy="494" r="3" fill="#d8dccb"/><circle cx="273" cy="481" r="3" fill="#d8dccb"/><path d="M370 534Q434 504 499 472" stroke="#c5cbbd" stroke-width="2" fill="none"/><circle cx="417" cy="512" r="3" fill="#cfd6c2"/><circle cx="444" cy="494" r="3" fill="#e2d77a"/><circle cx="480" cy="485" r="3" fill="#e2d77a"/><path d="M370 512Q309 482 248 450" stroke="#c5cbbd" stroke-width="2" fill="none"/><circle cx="323" cy="484" r="3" fill="#d8dccb"/><circle cx="300" cy="477" r="3" fill="#d8dccb"/><circle cx="278" cy="452" r="3" fill="#e2d77a"/><path d="M370 512Q431 482 492 444" stroke="#c5cbbd" stroke-width="2" fill="none"/><circle cx="426" cy="476" r="3" fill="#e2d77a"/><circle cx="444" cy="476" r="3" fill="#cfd6c2"/><circle cx="472" cy="461" r="3" fill="#e2d77a"/><path d="M370 490Q312 460 255 416" stroke="#c5cbbd" stroke-width="2" fill="none"/><circle cx="327" cy="457" r="3" fill="#d8dccb"/><circle cx="296" cy="455" r="3" fill="#e2d77a"/><circle cx="276" cy="437" r="3" fill="#e2d77a"/><path d="M370 490Q428 460 485 423" stroke="#c5cbbd" stroke-width="2" fill="none"/><circle cx="420" cy="464" r="3" fill="#cfd6c2"/><circle cx="433" cy="445" r="3" fill="#cfd6c2"/><circle cx="466" cy="436" r="3" fill="#e2d77a"/><path d="M370 468Q316 438 262 395" stroke="#c5cbbd" stroke-width="2" fill="none"/><circle cx="327" cy="443" r="3" fill="#cfd6c2"/><circle cx="309" cy="425" r="3" fill="#e2d77a"/><circle cx="278" cy="411" r="3" fill="#e2d77a"/><path d="M370 468Q424 438 478 401" stroke="#c5cbbd" stroke-width="2" fill="none"/><circle cx="412" cy="430" r="3" fill="#cfd6c2"/><circle cx="432" cy="426" r="3" fill="#cfd6c2"/><circle cx="448" cy="410" r="3" fill="#cfd6c2"/><path d="M370 446Q320 416 269 369" stroke="#c5cbbd" stroke-width="2" fill="none"/><circle cx="333" cy="418" r="3" fill="#e2d77a"/><circle cx="317" cy="397" r="3" fill="#cfd6c2"/><circle cx="293" cy="396" r="3" fill="#cfd6c2"/><path d="M370 446Q420 416 471 374" stroke="#c5cbbd" stroke-width="2" fill="none"/><circle cx="405" cy="423" r="3" fill="#d8dccb"/><circle cx="435" cy="397" r="3" fill="#e2d77a"/><circle cx="445" cy="390" r="3" fill="#cfd6c2"/><path d="M370 424Q323 394 276 359" stroke="#c5cbbd" stroke-width="2" fill="none"/><circle cx="327" cy="396" r="3" fill="#d8dccb"/><circle cx="307" cy="377" r="3" fill="#e2d77a"/><circle cx="291" cy="365" r="3" fill="#cfd6c2"/><path d="M370 424Q417 394 464 345" stroke="#c5cbbd" stroke-width="2" fill="none"/><circle cx="400" cy="388" r="3" fill="#e2d77a"/><circle cx="430" cy="378" r="3" fill="#d8dccb"/><circle cx="445" cy="373" r="3" fill="#d8dccb"/><path d="M370 402Q326 372 283 331" stroke="#c5cbbd" stroke-width="2" fill="none"/><circle cx="342" cy="367" r="3" fill="#e2d77a"/><circle cx="325" cy="366" r="3" fill="#cfd6c2"/><circle cx="307" cy="349" r="3" fill="#e2d77a"/><path d="M370 402Q414 372 457 338" stroke="#c5cbbd" stroke-width="2" fill="none"/><circle cx="400" cy="374" r="3" fill="#d8dccb"/><circle cx="422" cy="367" r="3" fill="#d8dccb"/><circle cx="437" cy="356" r="3" fill="#e2d77a"/><path d="M370 380Q330 350 290 314" stroke="#c5cbbd" stroke-width="2" fill="none"/><circle cx="346" cy="353" r="3" fill="#e2d77a"/><circle cx="314" cy="346" r="3" fill="#cfd6c2"/><circle cx="300" cy="326" r="3" fill="#d8dccb"/><path d="M370 380Q410 350 450 309" stroke="#c5cbbd" stroke-width="2" fill="none"/><circle cx="399" cy="353" r="3" fill="#e2d77a"/><circle cx="426" cy="340" r="3" fill="#d8dccb"/><circle cx="433" cy="324" r="3" fill="#e2d77a"/><path d="M370 358Q334 328 297 286" stroke="#c5cbbd" stroke-width="2" fill="none"/><circle cx="340" cy="326" r="3" fill="#d8dccb"/><circle cx="333" cy="319" r="3" fill="#d8dccb"/><circle cx="304" cy="296" r="3" fill="#cfd6c2"/><path d="M370 358Q406 328 443 283" stroke="#c5cbbd" stroke-width="2" fill="none"/><circle cx="399" cy="326" r="3" fill="#d8dccb"/><circle cx="417" cy="322" r="3" fill="#d8dccb"/><circle cx="431" cy="307" r="3" fill="#e2d77a"/><path d="M370 336Q337 306 304 269" stroke="#c5cbbd" stroke-width="2" fill="none"/><circle cx="339" cy="305" r="3" fill="#cfd6c2"/><circle cx="328" cy="296" r="3" fill="#e2d77a"/><circle cx="324" cy="274" r="3" fill="#cfd6c2"/><path d="M370 336Q403 306 436 256" stroke="#c5cbbd" stroke-width="2" fill="none"/><circle cx="399" cy="300" r="3" fill="#d8dccb"/><circle cx="405" cy="298" r="3" fill="#d8dccb"/><circle cx="421" cy="289" r="3" fill="#e2d77a"/><path d="M370 314Q340 284 311 241" stroke="#c5cbbd" stroke-width="2" fill="none"/><circle cx="348" cy="278" r="3" fill="#d8dccb"/><circle cx="339" cy="278" r="3" fill="#cfd6c2"/><circle cx="317" cy="257" r="3" fill="#e2d77a"/><path d="M370 314Q400 284 429 250" stroke="#c5cbbd" stroke-width="2" fill="none"/><circle cx="386" cy="280" r="3" fill="#d8dccb"/><circle cx="411" cy="268" r="3" fill="#d8dccb"/><circle cx="424" cy="263" r="3" fill="#e2d77a"/><path d="M370 292Q344 262 318 215" stroke="#c5cbbd" stroke-width="2" fill="none"/><circle cx="345" cy="254" r="3" fill="#e2d77a"/><circle cx="334" cy="258" r="3" fill="#d8dccb"/><circle cx="324" cy="243" r="3" fill="#e2d77a"/><path d="M370 292Q396 262 422 226" stroke="#c5cbbd" stroke-width="2" fill="none"/><circle cx="383" cy="262" r="3" fill="#e2d77a"/><circle cx="402" cy="258" r="3" fill="#e2d77a"/><circle cx="414" cy="238" r="3" fill="#d8dccb"/><path d="M370 270Q348 240 325 197" stroke="#c5cbbd" stroke-width="2" fill="none"/><circle cx="348" cy="233" r="3" fill="#d8dccb"/><circle cx="346" cy="234" r="3" fill="#d8dccb"/><circle cx="342" cy="221" r="3" fill="#d8dccb"/><path d="M370 270Q392 240 415 206" stroke="#c5cbbd" stroke-width="2" fill="none"/><circle cx="384" cy="248" r="3" fill="#d8dccb"/><circle cx="389" cy="234" r="3" fill="#e2d77a"/><circle cx="398" cy="212" r="3" fill="#e2d77a"/><path d="M752 662Q748 500 770 345" stroke="#7d9a72" stroke-width="4" fill="none"/><path d="M760 560Q829 581 882 503Q789 494 760 560z" fill="#7f9e55" opacity="1.0"/><path d="M760 560L870 509" stroke="#dfe8c8" stroke-width="1.5" opacity=".6"/><path d="M756 540Q723 479 634 496Q691 565 756 540z" fill="#94ad68" opacity="1.0"/><path d="M756 540L646 500" stroke="#dfe8c8" stroke-width="1.5" opacity=".6"/><path d="M760 480Q822 504 877 437Q792 422 760 480z" fill="#6b8a4a" opacity="1.0"/><path d="M760 480L866 442" stroke="#dfe8c8" stroke-width="1.5" opacity=".6"/><path d="M756 470Q719 415 635 438Q696 500 756 470z" fill="#7f9e55" opacity="1.0"/><path d="M756 470L647 441" stroke="#dfe8c8" stroke-width="1.5" opacity=".6"/><path d="M764 420Q820 436 864 374Q788 367 764 420z" fill="#94ad68" opacity="1.0"/><path d="M764 420L854 378" stroke="#dfe8c8" stroke-width="1.5" opacity=".6"/><path d="M760 410Q730 357 652 371Q703 432 760 410z" fill="#6b8a4a" opacity="1.0"/><path d="M760 410L663 375" stroke="#dfe8c8" stroke-width="1.5" opacity=".6"/><path d="M768 370Q813 371 833 315Q775 325 768 370z" fill="#7f9e55" opacity="1.0"/><path d="M768 370L827 321" stroke="#dfe8c8" stroke-width="1.5" opacity=".6"/><path d="M766 372Q758 326 697 314Q719 372 766 372z" fill="#94ad68" opacity="1.0"/><path d="M766 372L704 320" stroke="#dfe8c8" stroke-width="1.5" opacity=".6"/><path d="M770 350Q798 327 782 281Q751 318 770 350z" fill="#6b8a4a" opacity="1.0"/><path d="M770 350L781 288" stroke="#dfe8c8" stroke-width="1.5" opacity=".6"/><path d="M758 610Q817 644 886 587Q802 558 758 610z" fill="#94ad68" opacity="1.0"/><path d="M758 610L873 590" stroke="#dfe8c8" stroke-width="1.5" opacity=".6"/><path d="M754 600Q710 554 634 590Q703 638 754 600z" fill="#7f9e55" opacity="1.0"/><path d="M754 600L646 591" stroke="#dfe8c8" stroke-width="1.5" opacity=".6"/><path d="M612 718h110M785 716h120" stroke="#d8d8d0" stroke-width="2"/><path d="M1135 570Q1130 420 1122 320" stroke="#7f9a4e" stroke-width="9" fill="none"/><path d="M1128 455Q1108 357 985 372Q1033 487 1128 455z" fill="#7c9a3c" opacity="1.0"/><path d="M1000 520Q1060 490 1028 414Q963 465 1000 520z" fill="#8daa4a" opacity="1.0"/><path d="M1130 420Q1219 443 1253 334Q1139 328 1130 420z" fill="#86a447" opacity="1.0"/><path d="M1160 380Q1218 381 1244 309Q1169 323 1160 380z" fill="#a8bd70" opacity="1.0"/><path d="M1110 330Q1102 271 1026 259Q1051 332 1110 330z" fill="#7a993c" opacity="1.0"/><path d="M1125 318Q1110 295 1071 287Q1098 316 1125 318z" fill="#eea62a" opacity="1.0"/><path d="M1125 318Q1121 291 1089 267Q1101 305 1125 318z" fill="#eea62a" opacity="1.0"/><path d="M1125 318Q1133 291 1114 257Q1109 296 1125 318z" fill="#eea62a" opacity="1.0"/><path d="M1125 318Q1143 297 1141 258Q1120 291 1125 318z" fill="#eea62a" opacity="1.0"/><path d="M1125 318Q1150 307 1165 271Q1132 291 1125 318z" fill="#eea62a" opacity="1.0"/><path d="M1125 318Q1153 318 1181 292Q1142 297 1125 318z" fill="#eea62a" opacity="1.0"/><path d="M1000 645h90M1150 645h95" stroke="#dcdcd4" stroke-width="2"/><path d="M1450 490Q1485 400 1514 494" fill="none" stroke="#8aa79a" stroke-width="4.0" stroke-linecap="round" opacity=".9"/><path d="M1450 490Q1394 406 1348 555" fill="none" stroke="#8aa79a" stroke-width="5.6" stroke-linecap="round" opacity=".9"/><path d="M1450 490Q1481 435 1506 497" fill="none" stroke="#8aa79a" stroke-width="4.5" stroke-linecap="round" opacity=".9"/><path d="M1450 490Q1392 389 1344 562" fill="none" stroke="#b9c9c0" stroke-width="4.0" stroke-linecap="round" opacity=".9"/><path d="M1450 490Q1531 402 1597 501" fill="none" stroke="#6f9486" stroke-width="4.4" stroke-linecap="round" opacity=".9"/><path d="M1450 490Q1393 412 1347 571" fill="none" stroke="#7d9d90" stroke-width="5.6" stroke-linecap="round" opacity=".9"/><path d="M1450 490Q1529 429 1594 542" fill="none" stroke="#a7bdb2" stroke-width="5.5" stroke-linecap="round" opacity=".9"/><path d="M1450 490Q1415 440 1386 535" fill="none" stroke="#8aa79a" stroke-width="5.0" stroke-linecap="round" opacity=".9"/><path d="M1450 490Q1501 433 1543 520" fill="none" stroke="#8aa79a" stroke-width="5.7" stroke-linecap="round" opacity=".9"/><path d="M1450 490Q1414 393 1385 540" fill="none" stroke="#a7bdb2" stroke-width="3.8" stroke-linecap="round" opacity=".9"/><path d="M1450 490Q1485 413 1514 554" fill="none" stroke="#8aa79a" stroke-width="4.2" stroke-linecap="round" opacity=".9"/><path d="M1450 490Q1396 371 1351 549" fill="none" stroke="#a7bdb2" stroke-width="5.1" stroke-linecap="round" opacity=".9"/><path d="M1450 490Q1532 418 1599 526" fill="none" stroke="#6f9486" stroke-width="4.0" stroke-linecap="round" opacity=".9"/><path d="M1450 490Q1383 448 1328 547" fill="none" stroke="#b9c9c0" stroke-width="5.1" stroke-linecap="round" opacity=".9"/><path d="M1450 490Q1499 409 1538 512" fill="none" stroke="#8aa79a" stroke-width="3.3" stroke-linecap="round" opacity=".9"/><path d="M1450 490Q1372 432 1308 571" fill="none" stroke="#8aa79a" stroke-width="3.8" stroke-linecap="round" opacity=".9"/><path d="M1450 490Q1480 388 1504 504" fill="none" stroke="#a7bdb2" stroke-width="5.5" stroke-linecap="round" opacity=".9"/><path d="M1450 490Q1376 396 1315 567" fill="none" stroke="#b9c9c0" stroke-width="3.4" stroke-linecap="round" opacity=".9"/><path d="M1450 490Q1528 404 1592 547" fill="none" stroke="#8aa79a" stroke-width="3.8" stroke-linecap="round" opacity=".9"/><path d="M1450 490Q1379 435 1320 574" fill="none" stroke="#6f9486" stroke-width="5.8" stroke-linecap="round" opacity=".9"/><path d="M1450 490Q1512 386 1563 486" fill="none" stroke="#a7bdb2" stroke-width="3.2" stroke-linecap="round" opacity=".9"/><path d="M1450 490Q1375 414 1314 518" fill="none" stroke="#7d9d90" stroke-width="4.3" stroke-linecap="round" opacity=".9"/><path d="M1450 490Q1528 400 1592 487" fill="none" stroke="#a7bdb2" stroke-width="5.8" stroke-linecap="round" opacity=".9"/><path d="M1450 490Q1369 429 1303 508" fill="none" stroke="#6f9486" stroke-width="4.9" stroke-linecap="round" opacity=".9"/><path d="M1450 490Q1507 434 1553 533" fill="none" stroke="#a7bdb2" stroke-width="3.8" stroke-linecap="round" opacity=".9"/><path d="M1450 490Q1378 370 1320 477" fill="none" stroke="#8aa79a" stroke-width="5.2" stroke-linecap="round" opacity=".9"/><path d="M1450 490Q1508 435 1555 536" fill="none" stroke="#b9c9c0" stroke-width="3.3" stroke-linecap="round" opacity=".9"/><path d="M1450 490Q1377 415 1318 532" fill="none" stroke="#b9c9c0" stroke-width="5.9" stroke-linecap="round" opacity=".9"/><path d="M1450 490Q1494 433 1531 513" fill="none" stroke="#a7bdb2" stroke-width="5.5" stroke-linecap="round" opacity=".9"/><path d="M1450 490Q1384 399 1329 519" fill="none" stroke="#6f9486" stroke-width="5.9" stroke-linecap="round" opacity=".9"/><path d="M1450 490Q1465 463 1471 433" fill="none" stroke="#9db5aa" stroke-width="3.5" stroke-linecap="round" opacity="0.8"/><path d="M1450 490Q1451 442 1485 407" fill="none" stroke="#9db5aa" stroke-width="3.5" stroke-linecap="round" opacity="0.8"/><path d="M1450 490Q1458 447 1465 405" fill="none" stroke="#9db5aa" stroke-width="3.5" stroke-linecap="round" opacity="0.8"/><path d="M1450 490Q1481 449 1498 400" fill="none" stroke="#9db5aa" stroke-width="3.5" stroke-linecap="round" opacity="0.8"/><path d="M1450 490Q1425 462 1417 425" fill="none" stroke="#9db5aa" stroke-width="3.5" stroke-linecap="round" opacity="0.8"/><path d="M1450 490Q1423 456 1408 416" fill="none" stroke="#9db5aa" stroke-width="3.5" stroke-linecap="round" opacity="0.8"/><path d="M1450 490Q1454 445 1490 418" fill="none" stroke="#9db5aa" stroke-width="3.5" stroke-linecap="round" opacity="0.8"/><path d="M1450 490Q1453 450 1479 421" fill="none" stroke="#9db5aa" stroke-width="3.5" stroke-linecap="round" opacity="0.8"/><path d="M1452 480L1455 190M1520 330L1524 190" stroke="#c7d1c4" stroke-width="3"/><ellipse cx="1524" cy="215" rx="7" ry="30" fill="#cfd8bd"/><ellipse cx="1448" cy="495" rx="14" ry="18" fill="#8d8a6a"/><path d="M1365 580h85M1490 578h95" stroke="#dcdcd4" stroke-width="2"/><path d="M1905 630L1935 230" stroke="#b9bdb0" stroke-width="9" opacity=".8"/><path d="M1940 225L1958 222L1925 420" stroke="#d4d7cc" stroke-width="10" opacity=".8" fill="none"/><path d="M1812 500Q1786 371 1723 256" fill="none" stroke="#5d8f7c" stroke-width="14" stroke-linecap="round" opacity="1.0"/><path d="M1812 500Q1790 361 1788 221" fill="none" stroke="#4f8672" stroke-width="16" stroke-linecap="round" opacity="1.0"/><path d="M1812 500Q1845 369 1859 234" fill="none" stroke="#6a9b86" stroke-width="14" stroke-linecap="round" opacity="1.0"/><path d="M1812 500Q1771 389 1680 312" fill="none" stroke="#7aa792" stroke-width="12" stroke-linecap="round" opacity="1.0"/><path d="M1812 500Q1838 385 1909 292" fill="none" stroke="#5d8f7c" stroke-width="12" stroke-linecap="round" opacity="1.0"/><path d="M1812 500Q1769 419 1682 391" fill="none" stroke="#86ae9b" stroke-width="10" stroke-linecap="round" opacity="1.0"/><path d="M1812 500Q1795 402 1777 303" fill="none" stroke="#3f7562" stroke-width="10" stroke-linecap="round" opacity="1.0"/><ellipse cx="1814" cy="572" rx="68" ry="60" fill="#6e6c4e"/><ellipse cx="1792" cy="558" rx="30" ry="34" fill="#b9b7a0" opacity=".75"/><ellipse cx="1850" cy="590" rx="28" ry="36" fill="#4b4a33" opacity=".7"/><path d="M1780 628q35 18 70 0" stroke="#b5b3a0" stroke-width="6" fill="none"/><path d="M690 1240Q635 1115 560 990" stroke="#7a7458" stroke-width="7" fill="none"/><path d="M690 1240Q675 1090 640 940" stroke="#7a7458" stroke-width="7" fill="none"/><path d="M690 1240Q705 1120 700 1000" stroke="#7a7458" stroke-width="7" fill="none"/><path d="M690 1240Q735 1100 760 960" stroke="#7a7458" stroke-width="7" fill="none"/><path d="M690 1240Q775 1115 840 990" stroke="#7a7458" stroke-width="7" fill="none"/><path d="M690 1240Q660 1140 610 1040" stroke="#7a7458" stroke-width="7" fill="none"/><path d="M540 960Q547 930 534 886Q527 931 540 960z" fill="#f1f1ea" opacity="0.95"/><path d="M540 960Q573 953 609 920Q563 935 540 960z" fill="#eceee6" opacity="0.95"/><path d="M540 960Q579 983 646 994Q585 964 540 960z" fill="#e3e7dc" opacity="0.95"/><path d="M540 960Q532 989 544 1032Q552 988 540 960z" fill="#eceee6" opacity="0.95"/><path d="M540 960Q501 976 458 1020Q513 992 540 960z" fill="#eceee6" opacity="0.95"/><path d="M540 960Q513 931 459 908Q502 948 540 960z" fill="#e3e7dc" opacity="0.95"/><circle cx="540" cy="960" r="6" fill="#d9d48a"/><path d="M640 900Q653 859 649 795Q634 857 640 900z" fill="#dfe4d6" opacity="0.95"/><path d="M640 900Q683 893 738 860Q676 875 640 900z" fill="#dfe4d6" opacity="0.95"/><path d="M640 900Q677 924 740 935Q683 905 640 900z" fill="#e3e7dc" opacity="0.95"/><path d="M640 900Q641 946 666 1009Q660 941 640 900z" fill="#dfe4d6" opacity="0.95"/><path d="M640 900Q595 908 538 943Q603 926 640 900z" fill="#e3e7dc" opacity="0.95"/><path d="M640 900Q615 864 560 828Q601 878 640 900z" fill="#eceee6" opacity="0.95"/><circle cx="640" cy="900" r="6" fill="#d9d48a"/><path d="M720 960Q737 923 737 862Q717 919 720 960z" fill="#e3e7dc" opacity="0.95"/><path d="M720 960Q748 948 773 911Q735 933 720 960z" fill="#f1f1ea" opacity="0.95"/><path d="M720 960Q739 992 784 1021Q753 977 720 960z" fill="#dfe4d6" opacity="0.95"/><path d="M720 960Q709 1000 717 1061Q729 1001 720 960z" fill="#e3e7dc" opacity="0.95"/><path d="M720 960Q691 966 659 995Q701 983 720 960z" fill="#eceee6" opacity="0.95"/><path d="M720 960Q696 929 644 902Q684 945 720 960z" fill="#eceee6" opacity="0.95"/><circle cx="720" cy="960" r="6" fill="#d9d48a"/><path d="M790 900Q802 872 796 827Q782 870 790 900z" fill="#dfe4d6" opacity="0.95"/><path d="M790 900Q819 890 849 855Q807 874 790 900z" fill="#f1f1ea" opacity="0.95"/><path d="M790 900Q826 925 890 940Q834 907 790 900z" fill="#e3e7dc" opacity="0.95"/><path d="M790 900Q774 946 775 1018Q794 948 790 900z" fill="#dfe4d6" opacity="0.95"/><path d="M790 900Q759 901 720 925Q766 919 790 900z" fill="#f1f1ea" opacity="0.95"/><path d="M790 900Q764 867 711 838Q752 883 790 900z" fill="#e3e7dc" opacity="0.95"/><circle cx="790" cy="900" r="6" fill="#d9d48a"/><path d="M880 950Q883 918 863 875Q863 922 880 950z" fill="#f1f1ea" opacity="0.95"/><path d="M880 950Q922 941 974 905Q913 923 880 950z" fill="#e3e7dc" opacity="0.95"/><path d="M880 950Q906 967 950 969Q911 948 880 950z" fill="#f1f1ea" opacity="0.95"/><path d="M880 950Q863 977 862 1023Q882 982 880 950z" fill="#e3e7dc" opacity="0.95"/><path d="M880 950Q845 955 803 985Q853 973 880 950z" fill="#f1f1ea" opacity="0.95"/><path d="M880 950Q852 923 798 905Q842 941 880 950z" fill="#eceee6" opacity="0.95"/><circle cx="880" cy="950" r="6" fill="#d9d48a"/><path d="M470 1010Q490 975 495 916Q470 970 470 1010z" fill="#f1f1ea" opacity="0.95"/><path d="M470 1010Q518 1007 582 978Q512 988 470 1010z" fill="#eceee6" opacity="0.95"/><path d="M470 1010Q493 1031 538 1040Q501 1013 470 1010z" fill="#dfe4d6" opacity="0.95"/><path d="M470 1010Q451 1042 447 1096Q471 1047 470 1010z" fill="#e3e7dc" opacity="0.95"/><path d="M470 1010Q441 1023 415 1061Q455 1038 470 1010z" fill="#f1f1ea" opacity="0.95"/><path d="M470 1010Q455 982 414 957Q441 996 470 1010z" fill="#f1f1ea" opacity="0.95"/><circle cx="470" cy="1010" r="6" fill="#d9d48a"/><path d="M930 1010Q948 971 951 907Q929 967 930 1010z" fill="#e3e7dc" opacity="0.95"/><path d="M930 1010Q974 996 1028 953Q964 979 930 1010z" fill="#dfe4d6" opacity="0.95"/><path d="M930 1010Q954 1027 998 1029Q960 1008 930 1010z" fill="#dfe4d6" opacity="0.95"/><path d="M930 1010Q917 1045 921 1100Q937 1047 930 1010z" fill="#e3e7dc" opacity="0.95"/><path d="M930 1010Q895 1021 855 1058Q905 1038 930 1010z" fill="#eceee6" opacity="0.95"/><path d="M930 1010Q915 984 876 965Q902 1000 930 1010z" fill="#f1f1ea" opacity="0.95"/><circle cx="930" cy="1010" r="6" fill="#d9d48a"/><path d="M840 1015q70 25 150-5" stroke="#d4cf72" stroke-width="10" fill="none" opacity=".8"/><path d="M790 1431Q765 1300 800 1185Q850 1235 885 1175Q935 1300 905 1431z" fill="#9aab6c"/><path d="M835 1431Q815 1320 840 1230Q870 1300 860 1431z" fill="#c2cc9a" opacity=".8"/><path d="M868 1172L1012 1146L1036 1212L962 1242Q905 1205 868 1172z" fill="#5d8a7a"/><path d="M486 1431Q480 1330 540 1292Q620 1262 700 1300L682 1431z" fill="#cbd8cd"/><path d="M560 1431Q570 1340 640 1290" stroke="#a9bcae" stroke-width="10" fill="none"/><path d="M430 1431Q428 1345 470 1315Q505 1335 492 1431z" fill="#9db36a"/><path d="M688 1278Q780 1248 842 1338L884 1431L742 1431Q722 1340 688 1278z" fill="#2f5547"/><path d="M720 1300Q790 1300 850 1431" stroke="#4d7a68" stroke-width="8" fill="none"/><path d="M914 1431L950 1335L1018 1350L992 1431z" fill="#35604f"/><path d="M690 1240L705 1431" stroke="#8a6a3a" stroke-width="14"/><polygon points="1535 1158 1500 1081 1467 1015 1435 959 1404 915 1374 882 1347 859 1321 846 1297 849 1279 863 1268 885 1268 885 1284 868 1300 863 1314 868 1332 879 1355 901 1381 933 1410 975 1444 1027 1483 1090 1525 1162" fill="#6d9c89" opacity="1.0"/><polygon points="1535 1158 1513 1087 1492 1025 1472 972 1451 929 1431 895 1412 869 1394 852 1375 846 1359 851 1350 865 1350 865 1362 858 1372 860 1381 868 1394 883 1409 908 1427 941 1447 984 1470 1034 1497 1094 1525 1162" fill="#8fb3a4" opacity="1.0"/><polygon points="1534 1157 1498 1101 1464 1054 1432 1015 1401 986 1372 965 1344 953 1319 950 1298 959 1282 976 1272 1000 1272 1000 1288 980 1304 971 1320 970 1338 973 1359 985 1385 1005 1414 1033 1447 1068 1485 1111 1526 1163" fill="#a9c6ba" opacity="1.0"/><polygon points="1533 1157 1499 1118 1466 1086 1435 1061 1406 1044 1378 1035 1353 1032 1330 1038 1313 1053 1300 1074 1292 1100 1292 1100 1306 1077 1321 1062 1337 1055 1353 1052 1373 1055 1396 1065 1422 1080 1453 1102 1488 1129 1527 1163" fill="#4f8672" opacity="1.0"/><polygon points="1533 1157 1505 1131 1479 1111 1453 1098 1428 1091 1405 1091 1384 1098 1366 1111 1353 1131 1343 1156 1335 1185 1335 1185 1348 1158 1362 1138 1377 1124 1392 1115 1408 1111 1425 1112 1446 1118 1470 1128 1497 1142 1527 1163" fill="#c0d5cb" opacity="1.0"/><polygon points="1535 1163 1571 1107 1604 1059 1634 1019 1660 986 1682 960 1702 943 1718 934 1732 929 1746 931 1762 942 1762 942 1751 925 1734 914 1712 912 1688 922 1664 941 1638 967 1610 1002 1583 1045 1555 1097 1525 1157" fill="#5d907c" opacity="1.0"/><polygon points="1533 1162 1567 1122 1597 1087 1624 1058 1647 1035 1667 1018 1685 1006 1699 1001 1711 999 1723 1003 1735 1015 1735 1015 1727 999 1714 988 1697 983 1677 988 1655 1000 1632 1018 1607 1042 1581 1074 1555 1113 1527 1158" fill="#7fa899" opacity="1.0"/><polygon points="1534 1162 1566 1095 1596 1036 1622 985 1644 941 1663 904 1680 875 1695 855 1705 840 1713 833 1722 832 1722 832 1712 826 1697 830 1680 842 1662 863 1643 892 1622 929 1599 974 1576 1027 1551 1089 1526 1158" fill="#6d9c89" opacity="1.0"/><polygon points="1533 1163 1564 1136 1591 1115 1615 1099 1634 1087 1651 1081 1664 1080 1674 1083 1686 1090 1696 1104 1705 1125 1705 1125 1701 1102 1694 1083 1683 1069 1666 1062 1647 1062 1626 1068 1603 1081 1579 1100 1554 1126 1527 1157" fill="#8fb3a4" opacity="1.0"/><polygon points="1532 1162 1556 1144 1578 1130 1595 1120 1609 1112 1620 1108 1627 1107 1632 1109 1638 1114 1642 1124 1645 1140 1645 1140 1647 1124 1646 1110 1641 1099 1631 1093 1617 1092 1603 1096 1586 1104 1568 1118 1549 1136 1528 1158" fill="#a9c6ba" opacity="1.0"/><polygon points="1535 1158 1524 1115 1513 1073 1501 1031 1489 992 1476 952 1465 914 1454 875 1442 838 1430 802 1420 765 1420 765 1423 803 1426 842 1431 881 1439 920 1449 960 1459 1000 1472 1041 1487 1081 1505 1122 1525 1162" fill="#4f8672" opacity="1.0"/><polygon points="1536 1159 1535 1115 1534 1071 1531 1028 1527 986 1522 944 1518 903 1515 862 1509 822 1503 782 1498 742 1498 742 1494 782 1491 822 1489 863 1490 905 1492 947 1494 989 1498 1032 1505 1075 1514 1118 1524 1161" fill="#c0d5cb" opacity="1.0"/><polygon points="1536 1161 1547 1119 1557 1078 1566 1035 1572 993 1578 949 1585 906 1591 862 1595 817 1599 772 1603 727 1603 727 1590 771 1578 814 1566 857 1557 901 1548 944 1540 987 1533 1030 1528 1073 1526 1116 1524 1159" fill="#5d907c" opacity="1.0"/><polygon points="1535 1162 1557 1118 1578 1076 1597 1033 1613 992 1628 951 1643 911 1657 873 1669 835 1680 798 1690 762 1690 762 1672 795 1654 829 1635 864 1619 901 1602 940 1584 980 1568 1022 1552 1065 1538 1111 1525 1158" fill="#7fa899" opacity="1.0"/><polygon points="1535 1160 1540 1124 1543 1088 1546 1052 1547 1016 1547 981 1548 945 1549 909 1547 873 1546 836 1545 800 1545 800 1538 836 1532 871 1526 907 1523 943 1520 979 1518 1016 1517 1052 1518 1088 1521 1124 1525 1160" fill="#6d9c89" opacity="1.0"/><polygon points="1532 1158 1515 1138 1498 1123 1481 1113 1465 1110 1449 1113 1436 1122 1427 1137 1423 1155 1420 1178 1420 1205 1420 1205 1425 1179 1432 1158 1441 1144 1448 1134 1456 1130 1464 1129 1475 1131 1489 1137 1507 1147 1528 1162" fill="#8fb3a4" opacity="1.0"/><polygon points="1532 1158 1522 1145 1511 1137 1499 1132 1487 1135 1477 1142 1470 1154 1465 1168 1463 1186 1462 1207 1462 1232 1462 1232 1466 1208 1472 1188 1478 1172 1483 1161 1489 1154 1494 1151 1498 1150 1505 1151 1515 1154 1528 1162" fill="#a9c6ba" opacity="1.0"/><polygon points="1532 1162 1547 1152 1559 1147 1568 1144 1574 1144 1578 1145 1583 1150 1588 1160 1594 1174 1599 1192 1602 1215 1602 1215 1603 1192 1603 1172 1601 1155 1596 1142 1588 1132 1577 1127 1564 1127 1552 1133 1540 1144 1528 1158" fill="#4f8672" opacity="1.0"/><polygon points="1533 1158 1509 1108 1486 1063 1461 1025 1436 993 1412 968 1388 949 1364 935 1341 931 1319 932 1300 940 1300 940 1320 938 1339 941 1357 951 1377 963 1398 982 1420 1007 1444 1037 1470 1073 1497 1114 1527 1162" fill="#c0d5cb" opacity="1.0"/><polygon points="1533 1162 1562 1114 1588 1071 1612 1034 1633 1000 1653 972 1671 950 1688 932 1702 918 1716 909 1730 905 1730 905 1715 904 1697 909 1677 919 1658 937 1637 960 1616 988 1593 1022 1571 1062 1549 1107 1527 1158" fill="#5d907c" opacity="1.0"/><polygon points="1533 1159 1525 1119 1518 1080 1511 1042 1504 1005 1497 969 1491 933 1486 899 1480 865 1474 832 1470 800 1470 800 1470 833 1472 866 1474 900 1478 935 1483 971 1489 1008 1496 1045 1505 1083 1515 1122 1527 1161" fill="#2f6654" opacity="0.8"/><polygon points="1533 1160 1539 1121 1544 1081 1550 1042 1554 1003 1558 964 1563 925 1568 886 1571 847 1575 808 1580 770 1580 770 1571 808 1562 846 1554 884 1548 923 1542 961 1537 1001 1532 1040 1529 1080 1528 1120 1527 1160" fill="#2f6654" opacity="0.8"/><polygon points="1533 1161 1549 1120 1564 1081 1578 1042 1590 1004 1602 967 1613 932 1624 897 1633 864 1642 831 1650 800 1650 800 1638 830 1625 861 1612 893 1601 928 1588 963 1575 999 1563 1037 1551 1076 1539 1117 1527 1159" fill="#2f6654" opacity="0.8"/><polygon points="1532 1159 1512 1114 1492 1073 1473 1036 1452 1004 1433 976 1413 952 1394 932 1375 917 1357 906 1340 900 1340 900 1355 910 1371 923 1387 940 1404 960 1422 984 1441 1012 1461 1044 1482 1079 1504 1118 1528 1161" fill="#2f6654" opacity="0.8"/><polygon points="1532 1161 1555 1124 1577 1091 1597 1062 1615 1036 1632 1014 1648 996 1663 982 1676 971 1688 964 1700 960 1700 960 1687 960 1672 965 1656 974 1640 988 1623 1006 1605 1028 1586 1054 1567 1085 1548 1120 1528 1159" fill="#2f6654" opacity="0.8"/><polygon points="1532 1159 1528 1138 1522 1121 1515 1107 1505 1097 1494 1092 1483 1091 1471 1094 1461 1103 1450 1115 1440 1130 1440 1130 1453 1117 1465 1108 1475 1104 1484 1102 1491 1103 1497 1108 1504 1115 1511 1126 1520 1141 1528 1161" fill="#2f6654" opacity="0.8"/><polygon points="1532 1161 1544 1142 1555 1127 1564 1117 1572 1110 1579 1106 1585 1106 1592 1108 1601 1114 1610 1125 1620 1140 1620 1140 1613 1123 1606 1110 1598 1100 1588 1094 1576 1094 1565 1098 1554 1107 1545 1121 1536 1138 1528 1159" fill="#2f6654" opacity="0.8"/><ellipse cx="1538" cy="1262" rx="99" ry="114" fill="#dc951f"/><ellipse cx="1505" cy="1250" rx="55" ry="92" fill="#f0b338" opacity=".8"/><ellipse cx="1592" cy="1285" rx="38" ry="82" fill="#b7721a" opacity=".55"/><circle cx="1465" cy="1172" r="5" fill="#f7dc8a" opacity=".8"/><circle cx="1493" cy="1172" r="5" fill="#f7dc8a" opacity=".8"/><circle cx="1521" cy="1172" r="5" fill="#f7dc8a" opacity=".8"/><circle cx="1549" cy="1172" r="5" fill="#f7dc8a" opacity=".8"/><circle cx="1577" cy="1172" r="5" fill="#f7dc8a" opacity=".8"/><circle cx="1605" cy="1172" r="5" fill="#f7dc8a" opacity=".8"/><circle cx="1479" cy="1202" r="5" fill="#f7dc8a" opacity=".8"/><circle cx="1507" cy="1202" r="5" fill="#f7dc8a" opacity=".8"/><circle cx="1535" cy="1202" r="5" fill="#f7dc8a" opacity=".8"/><circle cx="1563" cy="1202" r="5" fill="#f7dc8a" opacity=".8"/><circle cx="1591" cy="1202" r="5" fill="#f7dc8a" opacity=".8"/><circle cx="1619" cy="1202" r="5" fill="#f7dc8a" opacity=".8"/><circle cx="1465" cy="1232" r="5" fill="#f7dc8a" opacity=".8"/><circle cx="1493" cy="1232" r="5" fill="#f7dc8a" opacity=".8"/><circle cx="1521" cy="1232" r="5" fill="#f7dc8a" opacity=".8"/><circle cx="1549" cy="1232" r="5" fill="#f7dc8a" opacity=".8"/><circle cx="1577" cy="1232" r="5" fill="#f7dc8a" opacity=".8"/><circle cx="1605" cy="1232" r="5" fill="#f7dc8a" opacity=".8"/><circle cx="1479" cy="1262" r="5" fill="#f7dc8a" opacity=".8"/><circle cx="1507" cy="1262" r="5" fill="#f7dc8a" opacity=".8"/><circle cx="1535" cy="1262" r="5" fill="#f7dc8a" opacity=".8"/><circle cx="1563" cy="1262" r="5" fill="#f7dc8a" opacity=".8"/><circle cx="1591" cy="1262" r="5" fill="#f7dc8a" opacity=".8"/><circle cx="1619" cy="1262" r="5" fill="#f7dc8a" opacity=".8"/><circle cx="1465" cy="1292" r="5" fill="#f7dc8a" opacity=".8"/><circle cx="1493" cy="1292" r="5" fill="#f7dc8a" opacity=".8"/><circle cx="1521" cy="1292" r="5" fill="#f7dc8a" opacity=".8"/><circle cx="1549" cy="1292" r="5" fill="#f7dc8a" opacity=".8"/><circle cx="1577" cy="1292" r="5" fill="#f7dc8a" opacity=".8"/><circle cx="1605" cy="1292" r="5" fill="#f7dc8a" opacity=".8"/><circle cx="1479" cy="1322" r="5" fill="#f7dc8a" opacity=".8"/><circle cx="1507" cy="1322" r="5" fill="#f7dc8a" opacity=".8"/><circle cx="1535" cy="1322" r="5" fill="#f7dc8a" opacity=".8"/><circle cx="1563" cy="1322" r="5" fill="#f7dc8a" opacity=".8"/><circle cx="1591" cy="1322" r="5" fill="#f7dc8a" opacity=".8"/><circle cx="1619" cy="1322" r="5" fill="#f7dc8a" opacity=".8"/><circle cx="1465" cy="1352" r="5" fill="#f7dc8a" opacity=".8"/><circle cx="1493" cy="1352" r="5" fill="#f7dc8a" opacity=".8"/><circle cx="1521" cy="1352" r="5" fill="#f7dc8a" opacity=".8"/><circle cx="1549" cy="1352" r="5" fill="#f7dc8a" opacity=".8"/><circle cx="1577" cy="1352" r="5" fill="#f7dc8a" opacity=".8"/><circle cx="1605" cy="1352" r="5" fill="#f7dc8a" opacity=".8"/><path d="M1538 1372Q1542 1408 1562 1438" fill="none" stroke="#8fb0a0" stroke-width="6" stroke-linecap="round" opacity="1.0"/><path d="M1538 1372Q1530 1407 1538 1442" fill="none" stroke="#8fb0a0" stroke-width="6" stroke-linecap="round" opacity="1.0"/><path d="M1538 1372Q1519 1402 1514 1438" fill="none" stroke="#8fb0a0" stroke-width="6" stroke-linecap="round" opacity="1.0"/><path d="M1538 1372Q1554 1404 1583 1426" fill="none" stroke="#8fb0a0" stroke-width="6" stroke-linecap="round" opacity="1.0"/><path d="M1538 1372Q1509 1394 1493 1426" fill="none" stroke="#8fb0a0" stroke-width="6" stroke-linecap="round" opacity="1.0"/><rect x="107" y="562" width="434" height="121" fill="none" stroke="#111" stroke-width="5.5"/><text x="146" y="642" font-family="'Liberation Sans',sans-serif" font-style="italic" font-size="44" fill="#111">Lights</text><rect x="1890" y="277" width="370" height="109" fill="#fff" fill-opacity=".8" stroke="#111" stroke-width="5.5"/><text x="1930" y="356" font-family="'Liberation Sans',sans-serif" font-style="italic" font-size="42" fill="#111">Growing</text><g fill="none" stroke="#111" stroke-width="4.6"><ellipse cx="467" cy="358" rx="64" ry="55" transform="rotate(-12 467 358)"/><ellipse cx="470" cy="360" rx="60" ry="51" transform="rotate(18 467 358)"/><path d="M432 310q26 -22 35 -6"/></g><g fill="none" stroke="#111" stroke-width="4.6"><ellipse cx="1550" cy="655" rx="60" ry="52" transform="rotate(-12 1550 655)"/><ellipse cx="1553" cy="657" rx="56" ry="48" transform="rotate(18 1550 655)"/><path d="M1517 610q24 -21 33 -6"/></g><path d="M910 275L937 301L910 327L883 301z" fill="#e9ecd8" stroke="#111" stroke-width="5"/><path d="M1642 259L1686 301L1642 343L1598 301z" fill="#d9d9d9" stroke="#111" stroke-width="5.5"/><path d="M1612 301L1642 272M1622 311L1653 282M1632 321L1664 292M1642 331L1674 302" stroke="#111" stroke-width="2.5"/><rect x="967" y="546" width="213" height="430" fill="none" stroke="#111" stroke-width="5.5"/><path d="M343 708L472 855M439 841L472 855L462 820" fill="none" stroke="#111" stroke-width="6" stroke-linecap="round"/><path d="M325 782L457 930M424 916L457 930L447 895" fill="none" stroke="#111" stroke-width="6" stroke-linecap="round"/><path d="M313 852L483 1058M450 1043L483 1058L474 1023" fill="none" stroke="#111" stroke-width="6" stroke-linecap="round"/><path d="M1683 1200L1683 935M1702 975L1683 935L1664 975" fill="none" stroke="#111" stroke-width="6" stroke-linecap="round"/><circle cx="77" cy="68" r="38" fill="#f0f0e8"/><path d="M62 60h30M62 68h30M62 76h30" stroke="#333" stroke-width="4"/><rect x="853" y="42" width="65" height="66" rx="9" fill="#7a6dd6"/><path d="M877 58l20 22-10 1 5 12-5 2-5-12-6 7z" fill="#fff"/><rect x="960" y="63" width="26" height="26" rx="2" fill="#111"/><path d="M1045 58l13 18-13 18-13-18z" fill="#111"/><circle cx="1118" cy="76" r="14" fill="#111"/><path d="M1175 76h36M1201 68l10 8-10 8" stroke="#111" stroke-width="4" fill="none"/><path d="M1255 76h38" stroke="#111" stroke-width="4"/><path d="M1338 88l22-22" stroke="#111" stroke-width="7"/><text x="1407" y="90" font-family="'Liberation Sans',sans-serif" font-size="36" fill="#111">A</text><rect x="1479" y="65" width="27" height="22" rx="3" fill="none" stroke="#111" stroke-width="3.5"/><path d="M1483 84l7-8 5 5 4-3 5 6z" fill="#111"/><path d="M1874 1203h22M1941 1203h24M1953 1191v24" stroke="#555" stroke-width="3.5"/><text x="2003" y="1213" font-family="'Liberation Sans',sans-serif" font-size="27" fill="#444">100%</text><g fill="none" stroke="#444" stroke-width="3.5"><path d="M2112 1196a11 11 0 1 1-3 12M2112 1188v9h9"/><path d="M2193 1196a11 11 0 1 0 3 12M2193 1188v9h-9"/></g><rect x="2246" y="0" width="30" height="1450" fill="#151515"/><rect x="0" y="1431" width="2267" height="30" fill="#151515"/><rect x="0" y="0" width="22" height="1450" fill="#151515"/></svg><div style="left:744.5px;top:1028px;width:421.5px;height:8.5px;background:transparent;border-radius:0 0 4px 4px;"></div><div style="left:744.5px;top:1043.5px;width:421.5px;height:295px;background:#2a2a2a;border-radius:4px;"></div><div style="left:744.5px;top:1071px;width:421.5px;height:1px;background:#343434;"></div><svg style="left:753px;top:1051px;" width="12" height="11" viewBox="0 0 12 11"><path d="M1 1.500l4 3.700-4 3.700M6 9.800h5" fill="none" stroke="#a0a0a0" stroke-width="1.100"/></svg><div class="t" style="top:1051.84px;font-size:8.4px;line-height:10.92px;color:#8f8f8f;left:772px;letter-spacing:0.2px;">Log - Application</div><svg style="left:1101px;top:1050.5px;" width="12" height="12" viewBox="0 0 12 12"><g fill="none" stroke="#a0a0a0" stroke-width="1.100"><path d="M10.300 6.200a4.300 4.300 0 1 1-1.600-3.400"/><path d="M9.500 .8v2.600H6.900"/></g></svg><svg style="left:1123px;top:1051px;" width="13" height="11" viewBox="0 0 13 11"><g fill="none" stroke="#a8a8a8" stroke-width="1"><rect x="1" y="4" width="7" height="5.500" rx="1.200"/><path d="M4 4V2.700a1.200 1.200 0 0 1 1.200-1.200H10a1.200 1.200 0 0 1 1.200 1.200V6a1.200 1.200 0 0 1-1.200 1.200H8"/></g></svg><svg style="left:1145.5px;top:1055px;" width="11" height="4" viewBox="0 0 11 4"><g fill="#a8a8a8"><circle cx="1.500" cy="2" r="1"/><circle cx="5.500" cy="2" r="1"/><circle cx="9.500" cy="2" r="1"/></g></svg><pre class="m" style="left:753px;top:1080.30px;font-size:9.630px;line-height:16px;color:#dcdcdc"><i style="color:#5fb58f">Compiled successfully!</i>

You can now view excalidraw in the browser.

  Local:            http://localhost:3000
  On Your Network:  http://192.168.43.1:3000

Note that the development build is not optimized.
To create a production build, use <i style="color:#5fb58f">yarn build</i>.</pre></div></div><div style="left:1357px;top:866px;width:283.5px;height:583px;background:#000;border-radius:46px;box-shadow:inset 0 0 0 1px #2b2b2b, inset 0 0 0 2.600px #4a4a4a, inset 0 0 0 4.200px #2d2d2d;"></div><div style="left:1355.3px;top:923px;width:2.5px;height:8px;background:#2e2e2e;border-radius:1px;"></div><div style="left:1355.3px;top:1026px;width:2.5px;height:39px;background:#2e2e2e;border-radius:1px;"></div><div style="left:1355.3px;top:1081px;width:2.5px;height:41px;background:#2e2e2e;border-radius:1px;"></div><div style="left:1639.5px;top:1041px;width:3px;height:65px;background:#303030;border-radius:1px;"></div><div id="pscr" style="left:1372px;top:880px;width:254.500px;height:554px;background:#151515;border-radius:33px;overflow:hidden"><div style="left:-1372px;top:-880px;width:2391px;height:1450px"><div class="t" style="top:887.48px;font-size:10.8px;line-height:14.04px;color:#f4f4f4;left:1391px;font-weight:700;letter-spacing:0.1px;">9:41</div><div style="left:1457.5px;top:888px;width:82.5px;height:23.8px;background:#000;border-radius:12px;"></div><div style="left:1524.5px;top:896.5px;width:5.5px;height:5.5px;background:#173a6e;border-radius:50%;box-shadow:0 0 0 1.500px #0a0a12;"></div><svg style="left:1572px;top:889.5px;" width="14" height="9" viewBox="0 0 14 9"><g fill="#f2f2f2"><rect x="0" y="6" width="2.400" height="3" rx=".5"/><rect x="3.500" y="4.200" width="2.400" height="4.800" rx=".5"/><rect x="7" y="2.200" width="2.400" height="6.800" rx=".5"/><rect x="10.500" y="0" width="2.400" height="9" rx=".5"/></g></svg><svg style="left:1588px;top:889.5px;" width="12" height="9" viewBox="0 0 12 9"><g fill="none" stroke="#f2f2f2" stroke-width="1.500" stroke-linecap="round"><path d="M1.200 3.200a6.800 6.800 0 0 1 9.600 0"/><path d="M3.300 5.500a3.800 3.800 0 0 1 5.400 0"/></g><circle cx="6" cy="7.800" r="1.100" fill="#f2f2f2"/></svg><div style="left:1601.3px;top:890.7px;width:15.3px;height:6.9px;background:#f4f4f4;border-radius:2.200px;"></div><div style="left:1617px;top:892.3px;width:1.2px;height:3.2px;background:#9a9a9a;border-radius:1px;"></div><svg style="left:1380px;top:920.5px;" width="16" height="14" viewBox="0 0 16 14"><g fill="none" stroke="#b0b0b0" stroke-width="1.200"><rect x="1" y="1.500" width="13" height="10.500" rx="1.600"/><path d="M5.200 1.500V12M2.600 4.200h1.200"/></g></svg><div style="left:1406.3px;top:919.5px;width:102px;height:16.8px;background:#262626;border-radius:8.500px;"></div><div class="t" style="top:922.77px;font-size:8.5px;line-height:11.05px;color:#8a8a8a;left:1412px;letter-spacing:0.2px;">3 commits behind main</div><svg style="left:1537.4px;top:918.9px;" width="17.2" height="17.2" viewBox="0 0 17.2 17.2"><circle cx="8.6" cy="8.6" r="7.6" fill="#dcd8e4" stroke="#8d7fe0" stroke-width="1.3"/><clipPath id="av14"><circle cx="8.6" cy="8.6" r="6.699999999999999"/></clipPath><g clip-path="url(#av14)"><ellipse cx="8.6" cy="16.58" rx="6.54" ry="4.18" fill="#26242c"/><ellipse cx="8.90" cy="7.69" rx="3.04" ry="3.80" fill="#efe9e4"/><path d="M5.41 7.69q-0.61 -4.71 3.50 -4.71q3.80 0 3.34 4.71q-0.91 -2.28 -3.34 -2.28q-2.58 0 -3.50 2.28z" fill="#26242c"/><path d="M6.32 8.98q2.58 1.67 5.17 0v0.91q-2.58 3.80 -5.17 0z" fill="#26242c" opacity=".7"/></g></svg><svg style="left:1559.4px;top:918.9px;" width="17.2" height="17.2" viewBox="0 0 17.2 17.2"><circle cx="8.6" cy="8.6" r="7.6" fill="#c8d6dc" stroke="#3aa0dd" stroke-width="1.3"/><clipPath id="av15"><circle cx="8.6" cy="8.6" r="6.699999999999999"/></clipPath><g clip-path="url(#av15)"><ellipse cx="8.6" cy="16.58" rx="6.54" ry="4.18" fill="#30363c"/><ellipse cx="8.90" cy="7.69" rx="3.04" ry="3.80" fill="#ecdcd0"/><path d="M5.41 7.69q-0.61 -4.71 3.50 -4.71q3.80 0 3.34 4.71q-0.91 -2.28 -3.34 -2.28q-2.58 0 -3.50 2.28z" fill="#30363c"/><path d="M6.32 8.98q2.58 1.67 5.17 0v0.91q-2.58 3.80 -5.17 0z" fill="#30363c" opacity=".7"/></g></svg><div style="left:1571px;top:930px;width:7.5px;height:7.5px;background:#161616;border-radius:2px;"></div><svg style="left:1571.5px;top:930.5px;" width="7" height="7" viewBox="0 0 7 7"><path d="M5.500 .8v5.400L2 3.500z M1 2.300l1.200 1.200L1 4.700" fill="none" stroke="#3aa0f0" stroke-width="1"/></svg><svg style="left:1600px;top:924px;" width="11" height="4" viewBox="0 0 11 4"><g fill="#a8a8a8"><circle cx="1.500" cy="2" r=".9"/><circle cx="5.500" cy="2" r=".9"/><circle cx="9.500" cy="2" r=".9"/></g></svg><pre class="m" style="left:1366px;top:958.40px;width:30.500px;text-align:right;font-size:7px;line-height:16.4px;color:#4f4f4f">56
57
58
59
60
61
62
63
64
65
66
67
68
69
70
71
72
73
74
75
76
77
78
79
80
81</pre><pre class="m csb" style="left:1413.200px;top:958.40px;font-size:9.02px;line-height:16.4px;color:#ececec"><i class="k">const</i> <i class="f">strokeRectWithRotation</i> <i class="o">=</i> <i class="q">(</i>
  context<i class="q">:</i> <i class="k">CanvasRenderingContext2D</i><i class="p">,</i>
  x<i class="q">:</i> <i class="k">number</i><i class="p">,</i>
  y<i class="q">:</i> <i class="k">number</i><i class="p">,</i>
  width<i class="q">:</i> <i class="k">number</i><i class="p">,</i>
  height<i class="q">:</i> <i class="k">number</i><i class="p">,</i>
  cx<i class="q">:</i> <i class="k">number</i><i class="p">,</i>
  cy<i class="q">:</i> <i class="k">number</i><i class="p">,</i>
  angle<i class="q">:</i> <i class="k">number</i><i class="p">,</i>
  fill<i class="q">:</i> <i class="k">boolean</i> <i class="o">=</i> <i class="k">false</i><i class="p">,</i>
<i class="q">)</i> <i class="k">=&gt;</i> <i class="p">{</i>
  <i class="f">context.save</i><i class="q">(</i><i class="q">)</i><i class="q">;</i>
  <i class="f">context.translate</i><i class="q">(</i>cx<i class="p">,</i> cy<i class="q">)</i><i class="q">;</i>
  <i class="f">context.rotate</i><i class="q">(</i>angle<i class="q">)</i><i class="q">;</i>
  <i class="k">if</i> <i class="q">(</i>fill<i class="q">)</i> <i class="p">{</i>
    <i class="f">context.fillRect</i><i class="q">(</i>x <i class="p">-</i> cx<i class="p">,</i> y <i class="p">-</i> cy<i class="p">,</i>
width<i class="p">,</i> height<i class="q">)</i><i class="q">;</i>
  <i class="p">}</i>
  <i class="f">context.strokeRect</i><i class="q">(</i>x <i class="p">-</i> cx<i class="p">,</i> y <i class="p">-</i> cy<i class="p">,</i>
width<i class="p">,</i> height<i class="q">)</i><i class="q">;</i>
  <i class="f">context.restore</i><i class="q">(</i><i class="q">)</i><i class="q">;</i>
<i class="p">}</i><i class="q">;</i>

<i class="k">const</i> <i class="f">strokeDiamondWithRotation</i> <i class="o">=</i> <i class="q">(</i>
  context<i class="q">:</i> <i class="k">CanvasRenderingContext2D</i><i class="p">,</i>
  width<i class="q">:</i> <i class="k">number</i><i class="p">,</i></pre><div style="left:1372px;top:1364px;width:254.5px;height:72px;background:#2a2a2a;border-radius:9px 9px 0 0;"></div><div style="left:1481px;top:1370px;width:34px;height:2.5px;background:#4a4a4a;border-radius:2px;"></div><div style="left:1380.2px;top:1377.7px;width:141.5px;height:28px;background:#131313;border-radius:7px;"></div><svg style="left:1389px;top:1386.5px;" width="12" height="11" viewBox="0 0 12 11"><path d="M1.200 6l3.300 3.500L10.500 1.500" fill="none" stroke="#c8c8c8" stroke-width="1.200"/></svg><div class="t" style="top:1385.35px;font-size:11px;line-height:14.3px;color:#c9c9c9;left:1404.8px;letter-spacing:0.12px;">Build workspace</div><svg style="left:1500px;top:1389.5px;" width="12" height="4" viewBox="0 0 12 4"><g fill="#c0c0c0"><circle cx="1.500" cy="2" r="1"/><circle cx="5.700" cy="2" r="1"/><circle cx="9.900" cy="2" r="1"/></g></svg><div style="left:1528px;top:1377.7px;width:49px;height:28px;background:linear-gradient(90deg,#131313 0%,#191919 55%,#222 100%);border-radius:7px 0 0 7px;"></div><svg style="left:1536px;top:1386.5px;" width="12" height="11" viewBox="0 0 12 11"><path d="M1 1.500l4.300 4-4.300 4M6.500 10h4.500" fill="none" stroke="#8a8a8a" stroke-width="1.200"/></svg><div style="left:1552.500px;top:1377.700px;width:24.500px;height:28px;overflow:hidden"><div class="t" style="top:7.65px;font-size:11px;line-height:14.3px;color:#5e5e5e;left:0px;letter-spacing:0.1px;">$ New</div></div><svg style="left:1592px;top:1386px;" width="13" height="13" viewBox="0 0 13 13"><path d="M6.500 1.500v10M1.500 6.500h10" stroke="#c0c0c0" stroke-width="1.200"/></svg><div style="left:1453px;top:1429.8px;width:92px;height:2px;background:#353535;border-radius:1px;"></div></div></div></div></body></html>
